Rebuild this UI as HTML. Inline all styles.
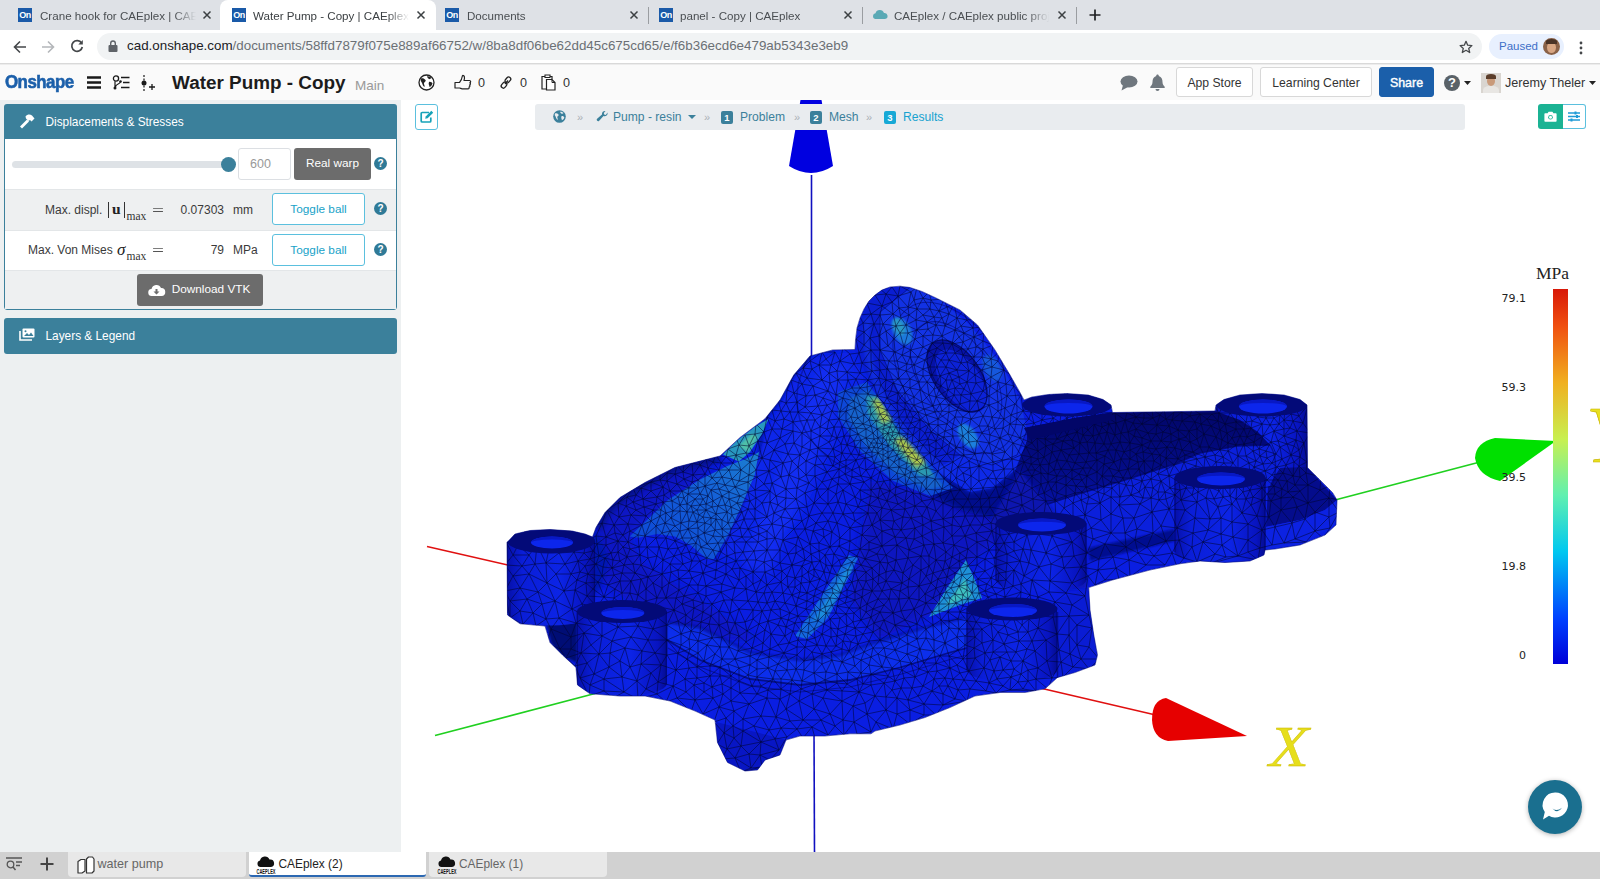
<!DOCTYPE html>
<html><head><meta charset="utf-8"><title>Water Pump - Copy | CAEplex</title>
<style>
*{box-sizing:border-box;margin:0;padding:0}
html,body{width:1600px;height:879px;overflow:hidden;background:#fff;font-family:"Liberation Sans",sans-serif;}
body{position:relative}
.abs,.abs2 *{position:absolute}
.abs{position:absolute}
svg{position:absolute;overflow:visible}
/* browser chrome */
#tabbar{left:0;top:0;width:1600px;height:30px;background:#dee1e6}
.fav{position:absolute;top:8px;width:14px;height:14px;background:#1a5aa8;color:#fff;font-size:9px;font-weight:bold;line-height:14px;text-align:center;letter-spacing:-0.6px;overflow:hidden}
.tt{position:absolute;top:0;height:30px;line-height:31px;font-size:11.6px;color:#4a4e52;white-space:nowrap;overflow:hidden;-webkit-mask-image:linear-gradient(to right,#000 calc(100% - 22px),transparent);mask-image:linear-gradient(to right,#000 calc(100% - 22px),transparent)}
.tx{position:absolute;top:9px;width:12px;height:12px}
.sep{position:absolute;top:7px;width:1px;height:17px;background:#9a9da1}
#acttab{left:220px;top:0;width:216px;height:30px;background:#fff;border-radius:8px 8px 0 0}
#urlrow{left:0;top:30px;width:1600px;height:34px;background:#fff;border-bottom:1px solid #d9d9d9}
#urlbox{left:97px;top:33px;width:1385px;height:27px;border-radius:14px;background:#f1f3f4}
#urltext{left:127px;top:33px;height:27px;line-height:26px;font-size:13.39px;color:#6b7075;white-space:nowrap}
#urltext b{font-weight:normal;color:#202124}
#paused{left:1489px;top:34px;width:75px;height:25px;border-radius:13px;background:#e8f0fe;color:#3d6fc8;font-size:11.500px;line-height:25px;padding-left:10px}
/* onshape header */
#oshead{left:0;top:64px;width:1600px;height:36px;background:#fafafa;border-top:1px solid #ececec}
.btn{position:absolute;top:67px;height:30px;border:1px solid #d8d8d8;border-radius:3px;background:#fff;font-size:12.2px;color:#333;line-height:30.500px;text-align:center;white-space:nowrap}
.cnt{position:absolute;top:64px;height:36px;line-height:39px;font-size:12.6px;color:#333}
/* left panel */
#left{left:0;top:100px;width:401px;height:752px;background:#edf0f1}
.phead{position:absolute;left:4px;width:393px;background:#3b809b;color:#fff;font-size:11.85px;border-radius:3px;padding-left:41.5px;white-space:nowrap}
#pbody{left:4px;top:137px;width:393px;height:173px;background:#fff;border:1px solid #3b809b;border-radius:0 0 3px 3px}
.row{position:absolute;left:5px;width:391px}
.lt{position:absolute;margin-top:1px;font-size:12px;color:#3a3a3a;white-space:nowrap;height:20px;line-height:20px}
.tog{position:absolute;left:272px;width:93px;height:32px;border:1px solid #5bc0de;border-radius:3px;background:#fff;color:#17a2c8;font-size:11.8px;line-height:30px;text-align:center}
.gbtn{position:absolute;background:#6c6c6c;color:#fff;border-radius:3px;font-size:11.8px;text-align:center;white-space:nowrap}
.q{position:absolute;left:374px;width:13px;height:13px;border-radius:50%;background:#2f7a97;color:#fff;font-size:10px;font-weight:bold;line-height:13px;text-align:center}
.math{font-family:"Liberation Serif",serif}
/* breadcrumb */
#bc{left:535px;top:104px;width:930px;height:26px;background:#e9ecef;border-radius:3px}
.bct{position:absolute;top:104px;height:26px;line-height:26px;font-size:12.1px;color:#3b809b;white-space:nowrap}
.bcs{position:absolute;top:104px;height:26px;line-height:26px;font-size:11px;color:#a9b0b6}
.bdg{position:absolute;top:111px;width:12px;height:13px;border-radius:2px;background:#3b809b;color:#fff;font-size:9.5px;font-weight:bold;line-height:13px;text-align:center}
/* bottom */
#bottom{left:0;top:852px;width:1600px;height:27px;background:#d1d1d1}
.btab{position:absolute;top:852px;height:25px;background:#e8e8e8;border-radius:0 0 4px 4px;font-size:12px;color:#666;line-height:25.500px;white-space:nowrap}
/* legend */
.lg{position:absolute;width:40px;text-align:right;left:1486px;font-family:"DejaVu Sans",sans-serif;font-size:10.5px;color:#222;height:14px;line-height:14px}
</style></head><body>
<!-- ===== browser tab strip ===== -->
<div id="tabbar" class="abs"></div>
<div id="acttab" class="abs"></div>
<div class="fav" style="left:18px">On</div><div class="tt" style="left:40px;width:156px">Crane hook for CAEplex | CAE</div>
<svg class="tx" style="left:201px" viewBox="0 0 12 12"><path d="M2.5 2.5L9.5 9.5M9.5 2.5L2.5 9.5" stroke="#3c4043" stroke-width="1.5"/></svg>
<div class="fav" style="left:232px">On</div><div class="tt" style="left:253px;width:156px;color:#3c4043">Water Pump - Copy | CAEplex</div>
<svg class="tx" style="left:415px" viewBox="0 0 12 12"><path d="M2.5 2.5L9.5 9.5M9.5 2.5L2.5 9.5" stroke="#3c4043" stroke-width="1.5"/></svg>
<div class="fav" style="left:445px">On</div><div class="tt" style="left:467px;width:150px">Documents</div>
<svg class="tx" style="left:628px" viewBox="0 0 12 12"><path d="M2.5 2.5L9.5 9.5M9.5 2.5L2.5 9.5" stroke="#3c4043" stroke-width="1.5"/></svg>
<div class="sep" style="left:648px"></div>
<div class="fav" style="left:659px">On</div><div class="tt" style="left:680px;width:150px">panel - Copy | CAEplex</div>
<svg class="tx" style="left:842px" viewBox="0 0 12 12"><path d="M2.5 2.5L9.5 9.5M9.5 2.5L2.5 9.5" stroke="#3c4043" stroke-width="1.5"/></svg>
<div class="sep" style="left:862px"></div>
<svg style="left:872px;top:9px;width:16px;height:12px" viewBox="0 0 16 12"><path d="M3 10a3 3 0 0 1 .5-5.8A4.5 4.5 0 0 1 12 4a3 3 0 0 1 1 6z" fill="#5aa9b5"/></svg>
<div class="tt" style="left:894px;width:155px">CAEplex / CAEplex public proj</div>
<svg class="tx" style="left:1056px" viewBox="0 0 12 12"><path d="M2.5 2.5L9.5 9.5M9.5 2.5L2.5 9.5" stroke="#3c4043" stroke-width="1.5"/></svg>
<div class="sep" style="left:1076px"></div>
<svg style="left:1089px;top:9px;width:12px;height:12px" viewBox="0 0 12 12"><path d="M6 0.5V11.5M0.5 6H11.5" stroke="#202124" stroke-width="1.7"/></svg>
<!-- ===== url row ===== -->
<div id="urlrow" class="abs"></div>
<div id="urlbox" class="abs"></div>
<svg style="left:13px;top:40px;width:14px;height:14px" viewBox="0 0 14 14"><path d="M13 7H2M7 1.5L1.5 7L7 12.5" fill="none" stroke="#44474a" stroke-width="1.6"/></svg>
<svg style="left:41px;top:40px;width:14px;height:14px" viewBox="0 0 14 14"><path d="M1 7H12M7 1.5L12.5 7L7 12.5" fill="none" stroke="#b4b7ba" stroke-width="1.6"/></svg>
<svg style="left:70px;top:39px;width:14px;height:14px" viewBox="0 0 14 14"><path d="M11.6 4.2A5.3 5.3 0 1 0 12.3 8" fill="none" stroke="#44474a" stroke-width="1.7"/><path d="M12.8 1v4.5H8.3z" fill="#44474a"/></svg>
<svg style="left:108px;top:40px;width:10px;height:12px" viewBox="0 0 10 12"><rect x="0.5" y="5" width="9" height="7" rx="1" fill="#5f6368"/><path d="M2.7 5V3.3a2.3 2.3 0 0 1 4.6 0V5" fill="none" stroke="#5f6368" stroke-width="1.4"/></svg>
<div id="urltext" class="abs"><b>cad.onshape.com</b>/documents/58ffd7879f075e889af66752/w/8ba8df06be62dd45c675cd65/e/f6b36ecd6e479ab5343e3eb9</div>
<svg style="left:1459px;top:40px;width:14px;height:14px" viewBox="0 0 14 14"><path d="M7 1.3l1.7 3.9 4.2.4-3.2 2.8 1 4.1L7 10.3 3.3 12.5l1-4.1L1.100 5.600l4.200-.4z" fill="none" stroke="#44474a" stroke-width="1.3" stroke-linejoin="round"/></svg>
<div id="paused" class="abs">Paused</div>
<div class="abs" style="left:1543px;top:38px;width:17px;height:17px;border-radius:50%;background:#8a6248;overflow:hidden"><div class="abs" style="left:4px;top:4px;width:9px;height:11px;border-radius:50%;background:#d8a683"></div><div class="abs" style="left:3px;top:1px;width:11px;height:5px;border-radius:50% 50% 0 0;background:#4a3326"></div></div>
<svg style="left:1579px;top:41px;width:4px;height:14px" viewBox="0 0 4 14"><circle cx="2" cy="2" r="1.4" fill="#44474a"/><circle cx="2" cy="7" r="1.4" fill="#44474a"/><circle cx="2" cy="12" r="1.4" fill="#44474a"/></svg>
<svg id="view" style="left:0;top:0;width:1600px;height:879px" viewBox="0 0 1600 879">
<defs><clipPath id="cv"><rect x="401" y="100" width="1199" height="752"/></clipPath>
<clipPath id="sil"><path d="M875 295L882 290L890 287L900 286.2L910 287.5L922 291.5L935 297.5L960 310L977.5 325L995 350L1010 375L1020 392.5L1024 400L1032 397L1048 394.5L1067 393.5L1088 395L1103 399.5L1111 405L1112.5 412.5L1215 411L1216 405L1224 399.5L1240 395L1262 393.5L1284 395L1300 399.5L1307 405L1307.5 467.5L1320 480L1332.5 492.5L1337 500L1336 525L1325 535L1300 545L1275 549L1265 550L1264 555L1250 561L1225 562.5L1200 561L1180 563.75L1150 570L1112.5 580L1088.75 587.5L1090 610L1093.75 635L1097.5 655L1095 665L1075 672.5L1057.5 677.5L1045 688.75L1025 692.5L1000 692.5L975 696L950 707.5L925 717.5L900 725L875 731L871 733.75L850 733.75L825 736L800 736L786 740L780 755L765 760L757.5 770L745 771L727.5 762.5L717.5 742.5L715 720L695 711L670 701L645 696L620 696L590 693.75L577.5 685L576 667.5L562.5 655L550 642.5L545 626L520 623.75L507.5 615L507 542.5L515 534L530 530.5L550 529.5L572 531L585 534L592.5 537L596 527.5L605 512.5L620 497.5L645 482.5L675 467.5L720 456L740 437.5L765 418.75L780 400L793.75 375L810 356L832.5 350L855 349.5L855.5 340L857 328L860 318L864 309L869 301Z"/></clipPath>
<linearGradient id="cb" x1="0" y1="1" x2="0" y2="0"><stop offset="0" stop-color="#0000d8"/><stop offset=".12" stop-color="#0040ff"/><stop offset=".3" stop-color="#00c8f0"/><stop offset=".45" stop-color="#60f0b0"/><stop offset=".6" stop-color="#c8f050"/><stop offset=".75" stop-color="#f0b020"/><stop offset=".9" stop-color="#f05010"/><stop offset="1" stop-color="#d81808"/></linearGradient>
<radialGradient id="neck" cx="0.55" cy="0.45" r="0.6"><stop offset="0" stop-color="#d8e040"/><stop offset=".35" stop-color="#50d8b0"/><stop offset=".7" stop-color="#20a8d8"/><stop offset="1" stop-color="#1060e0"/></radialGradient>
<filter id="b2"><feGaussianBlur stdDeviation="2"/></filter><filter id="b4"><feGaussianBlur stdDeviation="4"/></filter><filter id="b1"><feGaussianBlur stdDeviation="1"/></filter>
<linearGradient id="plate" x1="0" y1="0" x2="0" y2="1"><stop offset="0" stop-color="#020668"/><stop offset=".6" stop-color="#030c88"/><stop offset="1" stop-color="#0612a8"/></linearGradient><linearGradient id="bs" x1="0" y1="0" x2="1" y2="0"><stop offset="0" stop-color="#0610a8"/><stop offset=".18" stop-color="#0a1ed8"/><stop offset=".6" stop-color="#0c24e6"/><stop offset=".9" stop-color="#0814c0"/><stop offset="1" stop-color="#040c90"/></linearGradient><linearGradient id="web" x1="0" y1="1" x2="1" y2="0"><stop offset="0" stop-color="#0c44d8"/><stop offset=".6" stop-color="#1460d8"/><stop offset="1" stop-color="#1c80d0"/></linearGradient>
</defs>
<g clip-path="url(#cv)">
<path d="M811.5 175L811.5 360" stroke="#1010c0" stroke-width="1.6"/>
<path d="M814 730L814.5 852" stroke="#1010c0" stroke-width="1.6"/>
<path d="M800.5 100L821.5 100L833 166Q811 180 789 166Z" fill="#0000e0"/>
<path d="M427 546.5L510 565.5" stroke="#e01010" stroke-width="1.5"/>
<path d="M1040 688L1160 716" stroke="#e01010" stroke-width="1.5"/>
<path d="M435 735.5L595 693.5" stroke="#20d020" stroke-width="1.8"/>
<path d="M1335 500L1480 462" stroke="#20d020" stroke-width="1.8"/>
<path d="M1247 736L1166 698Q1152 700 1152 720Q1153 738 1168 741Z" fill="#e60000"/>
<path d="M1556 441L1495 438Q1476 442 1475 458Q1478 476 1500 481Z" fill="#00e000"/>
<text x="1269" y="766" font-family="Liberation Serif,serif" font-style="italic" font-size="58" fill="#e6de1c" stroke="#c8b400" stroke-width=".3" textLength="40" lengthAdjust="spacingAndGlyphs">X</text>
<text x="1586" y="462" font-family="Liberation Serif,serif" font-style="italic" font-size="80" fill="#e8e020" stroke="#c8b400" stroke-width=".6">Y</text>
<g clip-path="url(#sil)">
<path d="M875 295L882 290L890 287L900 286.2L910 287.5L922 291.5L935 297.5L960 310L977.5 325L995 350L1010 375L1020 392.5L1024 400L1032 397L1048 394.5L1067 393.5L1088 395L1103 399.5L1111 405L1112.5 412.5L1215 411L1216 405L1224 399.5L1240 395L1262 393.5L1284 395L1300 399.5L1307 405L1307.5 467.5L1320 480L1332.5 492.5L1337 500L1336 525L1325 535L1300 545L1275 549L1265 550L1264 555L1250 561L1225 562.5L1200 561L1180 563.75L1150 570L1112.5 580L1088.75 587.5L1090 610L1093.75 635L1097.5 655L1095 665L1075 672.5L1057.5 677.5L1045 688.75L1025 692.5L1000 692.5L975 696L950 707.5L925 717.5L900 725L875 731L871 733.75L850 733.75L825 736L800 736L786 740L780 755L765 760L757.5 770L745 771L727.5 762.5L717.5 742.5L715 720L695 711L670 701L645 696L620 696L590 693.75L577.5 685L576 667.5L562.5 655L550 642.5L545 626L520 623.75L507.5 615L507 542.5L515 534L530 530.5L550 529.5L572 531L585 534L592.5 537L596 527.5L605 512.5L620 497.5L645 482.5L675 467.5L720 456L740 437.5L765 418.75L780 400L793.75 375L810 356L832.5 350L855 349.5L855.5 340L857 328L860 318L864 309L869 301Z" fill="#0a1ee2"/>
<path d="M596 528L620 497L645 482L675 467L720 456L700 480L668 500L630 536L640 560L700 600L760 640L700 640L640 610L600 580Z" fill="#0818c4" filter="url(#b4)"/>
<path d="M770 425L795 378L812 358L850 352L865 380L845 420L800 520L745 560L720 555L748 480Z" fill="#0c26ea" filter="url(#b4)"/>
<path d="M870 480L950 498L1000 512L1020 520L975 560L930 615L880 640L850 600L860 540Z" fill="#0816c0" filter="url(#b4)"/>
<path d="M822 362L850 366L800 500L770 575L742 566L775 480Z" fill="#1232f4" filter="url(#b4)" opacity=".75"/>
<path d="M810 356L793 375L780 400L765 419L759 452L741 507L714 559" fill="none" stroke="#030a78" stroke-width="2.500" opacity=".55" filter="url(#b1)"/>
<path d="M812 354Q790 385 800 420Q815 455 850 470" fill="none" stroke="#030a78" stroke-width="1.500" opacity=".45"/>
<path d="M596 528L605 512L620 497L645 482L675 467L720 456" fill="none" stroke="#020866" stroke-width="12" opacity=".6" filter="url(#b2)"/>
<path d="M935 470L970 492L992 488L1015 470L1027 440L1040 470L1030 510L1000 520L960 510L930 495Z" fill="#040e8c" filter="url(#b2)"/>
<path d="M1216.5 405L1307.5 405L1307.5 470A45.5 11.5 0 0 1 1216.5 470Z" fill="url(#bs)"/>
<path d="M1217.0 405V470M1307.0 405V470" stroke="#02086c" stroke-width="1.200" opacity=".7"/>
<path d="M1024 428L1075 418L1112 412.5L1215 411L1240 420L1258 432L1270 445L1237 446L1200 453L1175 464L1125 480L1075 495L1030 510L1012 480L1027 440Z" fill="url(#plate)" />
<path d="M1268 487L1280 468L1307 467L1337 500L1325 510L1300 520L1266 527Z" fill="#040c8c" />
<path d="M1337 500L1336 525L1300 545L1265 550L1265 527L1300 520L1325 510Z" fill="#0c22e2" />
<path d="M1030 510L1075 495L1125 480L1175 464L1200 453L1237 446L1270 445L1276 468L1270 486L1174 500L1174 530L1100 546L1088 550L1062 545Z" fill="#0b20dc" />
<path d="M1030 510L1075 495L1125 480L1175 464L1200 453L1237 446L1270 445" fill="none" stroke="#02086c" stroke-width="1.500" opacity=".8"/>
<path d="M1270 445Q1280 462 1272 486" fill="none" stroke="#02086c" stroke-width="1.500" opacity=".6"/>
<path d="M1088 548L1175 529L1175 541L1090 561Z" fill="#040e90" filter="url(#b1)"/>
<path d="M1020 470L1062 522L1085 545L1087 588L1060 590L1000 560L990 520Z" fill="#0714b0" filter="url(#b2)"/>
<path d="M629.6 536.5L668 500L700 479.6L727.4 466L745.6 459L759 452L754.7 475L741 507L727.4 536.5L713.8 559L707 559L691 545.6L675 536.5L657 534L638.7 537.7Z" fill="url(#web)" />
<path d="M723 454.6L736.5 441L754.7 427L768.4 419L762 434L750 452L738.8 461.4Z" fill="#2898c0" />
<path d="M738 446L752 434L758 436L748 452Z" fill="#50c0a8" filter="url(#b1)"/>
<path d="M537 579L561 577L563 588L570 600L577 606L577 663L561 655L551 643L547 626L541 606L538 588Z" fill="#030a74" filter="url(#b1)"/>
<path d="M561 577L592 540L596 528L610 560L600 590L577 606L570 600L563 588Z" fill="#0614b0" filter="url(#b2)"/>
<path d="M795 636L849 555L858 558L828 618L807 639Z" fill="#1468e0" />
<path d="M812 622L848 566L853 568L826 616Z" fill="#1e8cdc" filter="url(#b1)"/>
<path d="M929 617L947 588L966 560L975 580L982 598L960 605Z" fill="#1e90d8" />
<path d="M945 606L965 578L972 596Z" fill="#3cc0c0" filter="url(#b1)"/>
<path d="M838 392L867 382L880 400L910 440L932 466L953 488L930 496L893 481L860 451L838 416Z" fill="#0e48d8" />
<path d="M850 398L868 390L880 408L908 446L930 470L944 486L928 490L896 474L866 446L848 418Z" fill="#1464cc" filter="url(#b1)"/>
<path d="M866 396L876 396L904 440L926 464L934 476L920 476L890 446L868 414Z" fill="#2c98b0" filter="url(#b1)"/>
<path d="M872 400L880 398L892 420L882 424Z" fill="#a8c850" filter="url(#b2)"/>
<path d="M894 440L903 437L926 462L916 468Z" fill="#b0c848" filter="url(#b2)"/>
<path d="M882 288L910 287L880 313L880 350L897 390L930 430L960 455L992 465L1017 455L1027 430L1027 440L1015 470L992 488L970 492L935 470L910 440L880 400L860 362L857 330L866 305Z" fill="#0a1ed2" />
<path d="M935 470L970 492L992 488L1015 470L1027 440L1017 455L992 465L960 455Z" fill="#0e2ae8" />
<path d="M910 287.5L940 300L970 325L1000 362L1020 400L1027 430L1017 455L992 465L960 455L930 430L897 390L880 350L880 312Z" fill="#1232e4" />
<path d="M910 287.500L880 312L880 350L897 390L930 430L960 455L992 465L1017 455L1027 430" fill="none" stroke="#04108c" stroke-width="1" opacity=".8"/>
<path d="M868 318Q862 350 880 392Q905 440 950 476" fill="none" stroke="#1a44f0" stroke-width="5" opacity=".55" filter="url(#b2)"/>
<ellipse cx="955" cy="378" rx="50" ry="84" fill="none" stroke="#040e8c" stroke-width="1" opacity=".7" transform="rotate(-33 955 378)"/>
<ellipse cx="956" cy="377" rx="36" ry="62" fill="#1436e8" opacity=".6" transform="rotate(-34 956 377)"/>
<ellipse cx="956" cy="377" rx="36" ry="62" fill="none" stroke="#040e8c" stroke-width="1" opacity=".7" transform="rotate(-34 956 377)"/>
<ellipse cx="902" cy="331" rx="9" ry="15" fill="#1c78dc" filter="url(#b1)" transform="rotate(-28 902 331)"/>
<ellipse cx="899" cy="327" rx="5" ry="9" fill="#2c98c4" filter="url(#b1)" transform="rotate(-28 899 327)"/>
<ellipse cx="992" cy="368" rx="8" ry="14" fill="#1658dc" filter="url(#b1)" transform="rotate(-28 992 368)"/>
<ellipse cx="968" cy="436" rx="8" ry="14" fill="#1c80dc" filter="url(#b1)" transform="rotate(-35 968 436)"/>
<ellipse cx="957" cy="376" rx="23" ry="41" fill="#0612a8"  transform="rotate(-35 957 376)"/>
<ellipse cx="961" cy="381" rx="19" ry="36" fill="#0c22d8"  transform="rotate(-35 961 381)"/>
<ellipse cx="957" cy="376" rx="23" ry="41" fill="none" stroke="#030a70" stroke-width="1.200" transform="rotate(-35 957 376)"/>
<path d="M667 622L700 627.5L750 652.5L800 660L840 655L875 642.5L925 627.5L965 617.5L1000 645L975 646L950 652.5L900 667.5L850 680L800 685L750 679L700 660L667 640Z" fill="#1030ee" filter="url(#b1)" opacity=".85"/>
<path d="M667 622L700 627.500L750 652.500L800 660L840 655L875 642.500L925 627.500L965 617.500" fill="none" stroke="#030a74" stroke-width="2" opacity=".6" filter="url(#b1)"/>
<path d="M667 640L700 660L750 679L800 685L850 680L900 667.500L950 652.500L975 646L1000 645" fill="none" stroke="#030a74" stroke-width="1.800" opacity=".8"/>
<path d="M668 648L700 667L750 686L800 692L850 687L900 674.500L950 659.500L975 653L1005 651" fill="none" stroke="#030a74" stroke-width="1.200" opacity=".6"/>
<path d="M1174.5 477.5L1265.5 477.5L1265.5 552A45.5 11.5 0 0 1 1174.5 552Z" fill="url(#bs)"/>
<path d="M1175.0 477.5V552M1265.0 477.5V552" stroke="#02086c" stroke-width="1.200" opacity=".7"/>
<path d="M995.5 523.5L1086.5 523.5L1086.5 580A45.5 11.5 0 0 1 995.5 580Z" fill="url(#bs)"/>
<path d="M996.0 523.5V580M1086.0 523.5V580" stroke="#02086c" stroke-width="1.200" opacity=".7"/>
<path d="M966.5 609L1057.5 609L1057.5 670A45.5 11.5 0 0 1 966.5 670Z" fill="url(#bs)"/>
<path d="M967.0 609V670M1057.0 609V670" stroke="#02086c" stroke-width="1.200" opacity=".7"/>
<path d="M507 541L595 541L595 613A44 12.5 0 0 1 507 613Z" fill="url(#bs)"/>
<path d="M507.5 541V613M594.5 541V613" stroke="#02086c" stroke-width="1.200" opacity=".7"/>
<path d="M576.8 611.5L666.8 611.5L666.8 684A45 11.5 0 0 1 576.8 684Z" fill="url(#bs)"/>
<path d="M577.3 611.5V684M666.3 611.5V684" stroke="#02086c" stroke-width="1.200" opacity=".7"/>
<path d="M1057 600L1088 588L1097 655L1095 665L1057 678Z" fill="#0a1cd4" />
<path d="M1057.500 612L1057.500 678" stroke="#040c80" stroke-width="1.500" opacity=".8"/>
<path d="M716 722L786 740L780 755L757 770L745 771L727 762L717 742Z" fill="#0816c4" />
<path d="M1258 417l8 1M651 482l-18 6M1054 405l17 2M838 380l-8 3M1293 421l-3 7M893 450l4 5M825 607l5 -9M711 490l-3 6M739 609l6 13M1025 484l-5 -10M889 599l-5 6M904 347l4 -14M574 552l12 -11M949 373l3 7M839 560l2 6M925 594l8 4M638 595l3 -16M746 542l6 -5M1262 530l13 -3M1194 488l-6 -6M963 473l-5 -6M895 352l2 9M739 681l1 12M896 560l1 -15M960 490l-9 1M916 374l3 8M1032 443l5 -5M1233 463l5 -7M1236 429l-9 4M697 522l1 6M890 480l7 -7M894 570l-6 -7M916 374l-2 -9M695 700l-9 -8M1222 545l11 -8M1072 605l-6 -12M713 550l-12 -3M1047 661l-1 -21M1089 453l-10 1M715 654l-5 12M886 555l11 -10M698 593l8 -7M967 585l-8 1M921 570l-12 9M999 497l-10 1M1038 597l-6 -17M868 394l-8 -6M935 457l-3 8M643 499l13 5M906 325l-5 -7M868 380l6 5M1329 498l-14 14M907 364l-8 5M763 643l2 -13M993 345l-2 14M510 601l17 -2M1151 441l-3 -8M728 523l-6 6M728 664l7 -5M940 496l-5 -6M755 509l0 10M705 474l3 -6M1215 455l1 7M520 588l-15 3M1291 455l8 -5M888 433l5 -1M924 704l-16 -4M669 583l-7 -9M689 488l-5 -9M1300 491l-5 -6M876 421l9 4M878 407l6 -4M852 477l-0 -7M757 660l12 -3M1083 435l-1 -9M636 495l-3 7M813 531l3 -8M973 629l2 8M1197 429l4 -5M747 631l6 -12M988 597l1 7M722 496l7 3M965 636l0 9M719 707l15 4M933 573l-4 -7M846 421l0 -10M719 625l-0 -14M867 714l-14 -8M790 412l-9 -1M955 594l-9 -2M1267 458l-4 6M1036 691l-13 -2M1104 444l-8 9M932 691l-9 -5M602 576l12 -1M1300 491l-7 6M731 688l-8 6M810 450l-10 5M972 593l-5 -3M1075 493l6 7M810 361l12 -9M741 772l10 -4M892 643l-8 5M656 526l6 7M879 336l-5 -12M657 497l6 5M667 473l8 1M985 653l-1 15M915 483l-6 -5M1182 450l3 5M866 470l-1 -12M1254 467l3 7M937 367l-7 -0M644 507l12 -3M1010 424l1 -9M840 412l3 -14M605 558l-6 -2M586 541l-2 12M937 367l9 -0M987 540l5 -9M939 604l-13 -1M731 676l8 -8M905 409l5 2M788 587l4 8M917 460l7 -3M612 568l-7 -10M1185 510l-4 -10M959 586l8 4M913 435l-6 4M1018 632l1 9M1172 420l-6 -1M943 705l24 -4M1136 417l8 -6M775 739l6 -11M866 581l7 -2M898 379l8 -8M909 550l-3 -12M1254 442l-1 9M911 663l8 6M851 454l5 6M698 488l0 -8M635 573l6 6M905 452l3 4M922 402l2 7M1131 495l-5 -10M861 440l8 8M905 393l-5 5M950 668l10 5M691 631l7 10M546 563l4 -19M720 667l0 9M734 542l-4 -7M1098 492l-1 -8M892 436l7 -3M826 565l6 1M593 589l11 8M989 443l1 -8M750 501l-2 -9M1101 412l0 9M814 673l-10 -3M822 513l6 8M1102 427l7 -3M954 499l-1 8M764 432l-8 -8M842 453l-2 9M1095 585l3 -15M628 524l-14 1M1021 592l-8 -6M871 617l9 -5M732 600l-11 -8M885 391l6 -0M722 759l13 -1M882 667l10 1M918 357l-4 8M936 511l7 -8M1052 452l-8 5M798 537l12 7M719 489l6 -4M999 573l7 7M698 641l14 -3M929 566l-3 10M940 594l4 4M911 663l-9 7M818 448l-1 8M1156 449l-5 -8M1142 438l6 -5M1205 475l-1 -7M692 620l-7 5M889 599l-7 -8M883 324l-9 -0M963 436l5 -4M869 542l-9 7M722 496l-9 5M938 435l-7 -3M658 682l18 -12M779 750l-9 10M1033 499l5 -4M593 589l5 -7M1075 493l7 -1M642 525l-12 6M837 438l-5 -2M842 649l7 2M559 553l6 11M804 670l-8 -1M933 406l-11 -4M855 628l8 6M1045 431l0 8M1044 493l-3 -9M787 737l-12 2M575 590l-11 1M1064 568l-2 -11M620 581l11 0M819 543l5 -6M1197 502l1 -10M1067 418l-6 -5M899 451l6 1M1200 414l12 -0M735 588l-9 -14M880 350l-10 -12M831 652l11 10M896 326l-10 5M935 479l9 0M580 678l7 -15M1185 455l8 -3M666 598l-9 -0M1036 691l-26 -1M1250 490l12 -2M958 467l-2 11M793 422l0 9M686 615l6 5M824 572l2 -7M917 447l-5 -4M642 651l6 -11M1287 444l4 11M1238 556l20 4M961 425l-6 -8M1261 396l2 14M855 600l-0 -8M956 448l-6 -5M587 596l10 11M1179 540l5 18M837 683l5 8M722 584l13 4M755 509l7 -6M979 466l-9 2M1046 553l6 -17M814 673l11 7M1228 443l4 -5M865 458l1 -5M814 673l-12 8M877 396l8 -5M1236 499l-6 -3M1116 450l4 -8M1144 461l-8 -7M963 507l-10 10M1031 457l-10 -2M1032 641l-4 -9M959 561l-7 -4M896 560l-8 3M674 610l-17 7M787 670l9 -1M757 677l-5 9M849 608l-12 -2M951 472l-1 12M847 558l5 4M1027 649l-11 3M821 599l-1 11M625 648l-5 13M836 613l-6 6M791 380l-4 10M890 480l0 11M1211 426l-7 8M898 411l-6 6M963 595l-4 -9M690 649l-12 4M1018 514l4 10M599 654l11 -1M1225 424l5 -11M748 509l7 0M886 555l2 8M992 587l-5 -3M1030 432l-10 6M859 455l-4 -8M633 502l10 -3M911 663l-11 -2M933 335l-5 -6M586 616l-10 7M572 609l3 -19M760 755l10 5M1052 452l-6 -6M872 591l-5 13M711 490l2 11M846 614l1 12M716 455l10 2M1032 580l18 1M653 570l10 -10M735 623l-8 -1M882 508l-5 5M843 720l10 -14M814 576l0 -7M806 396l7 -10M812 369l10 11M1101 520l10 -6M901 611l13 -2M1012 459l-10 1M940 496l-7 3M785 636l-7 -11M826 613l-1 -6M775 421l-3 -11M786 489l-10 7M1265 471l-11 -4M880 414l-9 0M1040 465l-2 -6M1032 476l9 -3M776 467l7 -4M894 462l5 5M1192 495l2 -7M906 469l-7 -2M949 628l0 -7M859 692l4 -8M611 553l-5 -8M940 496l2 -7M790 721l-9 7M718 506l-6 1M827 472l-5 10M1200 414l7 5M1284 429l6 -1M884 605l-4 7M892 302l6 -6M1072 440l5 -8M1055 500l2 -7M901 688l3 -10M967 580l7 -7M907 463l1 -7M871 617l-10 3M1230 413l8 -7M590 559l-5 7M1042 420l7 4M950 443l3 -7M1152 470l-7 4M771 610l-3 11M739 609l9 -8M998 581l8 -1M1193 533l-1 14M936 397l4 7M952 429l1 7M940 461l-8 4M1021 455l5 -8M620 581l-5 8M819 543l-0 8M931 300l-1 9M950 443l-6 -6M1248 412l-10 -6M941 620l8 8M995 611l7 6M889 468l-7 -2M936 397l5 -11M1291 455l3 7M826 613l-6 -3M943 705l-0 -11M620 561l-2 -9M840 462l6 4M837 438l7 -2M506 542l12 3M743 731l-9 7M1007 554l-3 -11M917 309l-1 11M920 390l2 12M1114 462l-10 2M513 576l9 -10M590 559l-12 2M1072 583l-8 -15M1085 419l-8 2M895 625l-2 -12M883 438l-0 -4M843 348l-3 13M884 620l9 -7M741 470l9 -8M844 584l8 -2M657 497l-1 7M920 390l-10 -2M1107 417l8 -4M903 517l2 -8M1072 542l-20 -6M890 480l-1 -12M749 754l-14 4M864 652l9 -4M1116 568l-18 2M931 521l1 10M1055 602l-15 14M957 637l-8 -9M692 578l-13 1M931 300l-2 -8M924 663l10 -12M749 704l-9 -11M901 530l-6 7M684 479l-7 5M695 499l-4 7M783 526l0 14M682 491l6 3M997 679l-8 4M965 636l8 -7M764 562l9 7M824 572l-4 7M1075 463l11 -1M882 306l-15 -3M1321 477l-13 8M814 569l6 10M854 441l-4 -5M1128 469l-5 9M1024 576l15 -9M1166 541l13 -1M1000 657l11 4M841 566l-4 9M735 659l4 9M1271 501l-4 -7M843 514l-10 -1M546 563l-11 1M1282 489l-7 5M720 667l8 -3M1165 492l-6 8M999 497l5 -10M977 557l-11 1M1281 498l-6 -4M591 645l8 9M747 560l9 0M770 491l-15 -1M703 573l-3 -12M1142 481l3 -7M871 617l-5 -5M928 439l-5 6M806 609l4 8M700 494l8 2M963 417l-6 -7M879 336l4 -12M961 395l3 -6M683 472l-8 2M872 452l2 -5M997 679l6 7M880 472l-9 6M713 462l6 8M926 638l8 2M897 403l1 8M1088 576l7 9M689 585l-10 -6M887 398l11 -5M920 390l9 5M950 668l3 11M769 730l-15 -4M989 443l-12 -2M1304 443l-4 14M1320 490l-12 -5M967 320l-10 -2M667 655l-12 -2M874 623l6 5M931 521l12 -2M842 649l1 -8M728 523l4 -8M861 565l5 7M849 608l-4 -5M1193 533l15 -3M860 388l7 -1M1031 550l8 17M848 672l-6 -10M674 556l-6 -7M1272 545l3 -18M706 566l-3 7M1284 420l6 8M1280 415l5 -5M1249 463l7 -2M872 591l1 -12M692 578l6 7M889 634l6 -9M909 315l-8 3M896 427l-3 5M988 478l5 -7M1087 476l4 -8M781 679l-0 10M941 620l-2 -9M977 542l12 8M798 616l-3 7M1192 409l8 5M832 411l7 8M743 552l-7 9M1125 420l8 3M1283 473l-11 2M1075 493l1 -7M920 649l-13 5M1085 596l-13 -13M874 385l5 -7M883 461l-1 5M1050 581l-11 -14M729 647l-7 12M930 453l-7 -8M678 570l5 -6M907 364l-5 -9M846 421l-7 -2M513 555l-8 10M588 574l-2 9M795 623l-9 4M660 516l-4 10M862 535l-2 14M783 540l-3 10M871 617l-4 10M718 506l-5 -5M991 377l-6 4M937 348l-8 3M991 578l8 -5M778 645l-8 4M927 322l-4 -7M949 405l8 5M1329 517l-0 -19M774 513l11 -4M1034 511l-1 -12M732 479l-10 -2M953 462l-9 5M589 696l1 -11M902 583l-2 8M1199 481l-1 11M707 645l5 -7M1211 468l6 1M788 660l8 9M585 566l3 8M949 628l-7 6M1104 444l3 -12M863 424l-5 -6M956 603l4 9M934 544l-5 12M963 342l1 -9M798 616l8 -7M860 373l-13 -1M750 665l-15 -6M869 665l13 2M734 542l12 0M749 754l12 -12M846 614l-9 -8M768 621l-6 -10M1129 560l9 -7M877 443l-3 -4M599 556l-6 -5M721 463l8 7M812 562l-7 -2M877 513l-8 -8M1278 441l6 -5M993 640l0 12M999 352l-8 7M972 593l1 -11M633 502l11 5M917 471l-2 6M764 593l3 -8M998 382l-8 4M927 477l-5 6M915 528l-1 11M707 558l-6 -11M1087 476l-1 11M790 412l8 0M899 433l9 1M949 314l-7 4M1158 492l3 -11M1031 457l-0 7M1087 476l-5 4M689 571l3 -10M696 554l-0 -11M1203 542l-6 20M695 700l-1 -15M1151 479l-6 -5M1223 486l-7 -3M1165 565l-11 -9M624 692l13 -11M866 429l-10 -1M849 551l-10 -5M1308 503l12 -13M926 576l-7 10M959 629l-10 -8M578 561l6 -8M983 349l-7 -2M878 654l-5 -6M1018 682l-7 -5M1295 485l-8 -4M706 510l-6 -5M1053 418l-4 -8M1216 483l3 8M602 636l-9 -10M1064 508l-8 12M706 586l0 10M1010 690l1 -13M754 454l-5 -8M900 639l-11 -5M866 572l6 -4M815 476l12 -4M1007 554l-13 4M1214 476l-5 11M841 566l11 -4M969 607l7 -1M944 479l-2 10M936 511l-5 10M786 403l-8 -3M916 320l7 -5M900 286l-2 10M1095 585l10 -5M793 431l-11 -2M719 625l-7 13M695 499l-8 5M822 352l-3 13M916 374l-10 -3M903 517l8 1M945 585l6 3M853 706l12 -3M967 382l-8 -5M785 603l11 3M1218 507l-12 -9M1169 476l10 6M1025 484l-9 -3M614 598l1 -9M850 429l3 -6M1161 465l6 4M829 442l-11 6M646 516l-4 9M908 448l-1 -9M641 664l-11 3M897 698l0 16M907 417l-8 0M1230 496l-0 -8M731 701l18 3M869 420l2 6M897 455l2 4M829 373l8 -2M773 569l9 2M731 701l-0 -13M903 573l6 6M763 643l8 -9M711 518l-5 -8M663 487l1 8M770 491l0 11M891 510l7 -6M872 452l-0 5M965 516l-4 11M1046 501l10 19M1017 419l-6 -4M713 698l-18 2M697 522l2 -7M877 429l6 5M837 674l-12 6M1004 370l-5 -18M882 306l4 -12M864 332l-9 -3M978 579l-5 3M1075 463l-6 -8M983 416l-12 3M1296 409l-9 -12M840 361l14 3M945 326l-9 -1M560 649l11 -0M1072 479l0 -9M866 429l-8 5M1102 476l-5 -4M1286 465l-4 -6M1066 476l6 3M918 696l6 8M700 465l6 -6M653 570l9 4M1157 425l9 -6M739 445l-3 -7M1179 439l-1 -9M604 597l-6 -15M969 412l1 -11M671 572l8 7M867 714l-2 -11M1209 447l-9 -0M781 582l2 11M770 491l2 -8M1278 441l-7 1M949 656l8 9M1210 519l-2 11M950 598l-4 -6M1197 439l-0 -10M930 453l2 12M952 525l9 2M631 515l5 -5M843 490l12 7M890 491l-3 10M657 497l7 -2M902 355l-5 6M1091 404l-14 6M867 714l19 -4M988 478l8 1M878 407l-7 7M722 759l5 -10M816 589l7 3M974 337l7 -10M1116 423l-1 -10M1091 528l20 5M722 529l1 8M1200 447l4 -13M934 355l-5 -4M949 604l-10 7M1027 535l-4 14M781 679l-8 -0M630 667l-10 -6M739 609l14 1M930 309l9 2M1069 616l20 -1M1182 450l8 -8M853 513l2 8M1021 495l12 4M783 540l11 -11M814 576l6 3M794 443l6 12M903 446l-2 -6M1218 507l3 11M955 330l-3 14M947 454l-5 -6M942 336l10 8M1041 473l-6 -3M689 488l-12 -4M1179 439l11 3M951 472l-7 7M796 373l7 -5M907 463l-8 4M1009 534l2 -15M869 641l-11 3M642 525l-11 -10M949 628l10 1M1104 444l4 6M1042 412l0 -12M998 411l-9 -6M588 574l10 8M788 620l-2 7M832 479l7 -10M1157 425l-4 -7M602 636l0 -16M971 476l-8 -3M700 633l12 5M893 729l4 -15M1262 424l-4 -7M732 479l-3 -9M938 425l7 6M893 383l5 10M969 442l-1 -10M1082 426l-5 6M878 438l-4 1M880 472l10 8M866 470l-5 6M970 525l5 -9M1038 628l2 -12M905 501l-10 -6M915 427l5 2M890 491l5 4M1083 435l10 1M682 604l11 -4M940 496l11 -5M982 604l6 -7M837 438l4 6M735 758l16 10M750 665l7 -5M965 482l-2 -9M845 603l10 -3M1014 542l0 9M813 531l10 -2M797 402l-3 -9M758 602l-2 -10M706 504l6 3M938 425l0 -6M1158 474l11 2M732 600l16 1M950 668l7 -3M648 558l-1 -11M847 597l8 3M1223 497l-5 10M599 556l7 -11M804 661l10 -2M894 521l-3 -11M974 357l2 -10M1028 670l-7 4M1179 439l7 -2M943 519l10 -2M706 586l-8 -1M894 339l10 8M1263 410l10 -15M982 370l-8 -5M1116 568l-11 12M974 337l2 10M866 470l9 -2M778 664l-10 4M775 601l-3 -9M968 549l-2 9M941 620l1 14M1057 460l-8 4M622 677l-2 -16M796 553l-4 12M1059 650l-13 -10M967 382l4 12M995 429l-3 -12M657 497l6 -10M935 490l0 -11M1151 479l-6 8M1075 463l4 -9M843 348l7 6M1064 568l-14 13M921 616l5 -13M1254 442l-7 -5M924 715l-14 -5M954 582l5 4M922 501l-7 5M811 440l-0 -9M688 529l-7 -6M842 701l-15 -11M832 479l-10 3M786 709l-10 8M843 398l-7 -3M1102 476l9 6M742 512l-6 10M914 405l8 -3M847 577l5 5M971 476l8 5M585 566l-5 6M1274 431l5 -7M1226 557l-4 -12M964 680l6 9M888 458l-5 -3M537 545l9 18M736 455l-10 2M969 371l-2 11M1299 416l-8 -2M933 625l9 9M712 604l-9 8M1112 488l-1 9M1087 476l-4 -8M840 412l-8 -1M643 499l14 -2M698 488l-6 -6M1036 679l2 -11M678 497l-8 -6M877 443l1 5M1128 432l6 4M803 720l9 7M883 438l-5 -0M670 531l-8 2M646 689l12 -7M807 640l-2 7M1158 474l9 -5M860 405l4 10M1210 519l-13 -17M1040 465l1 8M797 647l8 -0M1330 528l-7 10M767 517l-9 9M736 561l11 -1M1248 540l-15 -3M1053 444l10 -3M1066 496l-9 -3M707 558l-11 -4M802 622l7 1M1009 534l5 8M1086 462l5 6M1195 422l6 2M992 531l-10 -6M700 465l8 3M755 509l12 8M1209 487l7 -4M994 671l-4 -11M887 369l11 10M1074 448l-5 7M944 479l-0 -12M1223 486l7 10M764 432l-9 2M1282 459l-2 -12M1073 667l-3 -13M887 410l11 1M1184 462l13 -3M1071 425l-4 -7M934 544l-12 -8M1240 436l4 8M798 598l9 -5M907 364l3 -7M883 438l-1 6M926 629l8 11M641 488l-8 -0M609 667l1 -14M564 591l13 -11M990 507l16 3M800 592l-8 3M677 698l9 -6M949 314l5 -10M667 640l14 5M883 449l5 -3M917 460l-5 -7M1038 628l8 12M855 408l3 10M824 624l6 -5M713 698l10 -4M960 404l-6 -9M689 585l3 -7M727 556l-1 8M1139 469l-8 9M750 462l-1 13M678 570l-7 2M803 720l-13 1M1021 592l-10 12M1023 661l-7 -9M1232 522l-11 -4M1019 641l9 -9M703 603l-0 9M630 549l-3 8M983 416l5 10M847 590l-6 3M575 590l7 14M1023 689l5 -8M1200 414l1 10M915 677l13 -5M844 584l3 6M1329 517l1 11M656 526l-5 -5M860 448l6 5M1195 422l-5 -6M570 541l4 -12M1271 442l3 -11M905 475l1 10M743 552l-8 1M855 408l5 -3M883 494l-3 -6M1282 489l-8 -3M933 573l5 6M805 493l12 -4M767 517l5 7M970 525l-5 11M814 596l9 -4M919 453l11 0M559 553l-9 -9M1240 436l-4 -7M835 402l-3 9M803 720l-4 -19M945 585l-7 -6M888 446l-6 -2M590 559l6 5M1066 476l6 -6M590 685l-10 -7M829 442l8 -4M996 693l-7 -10M982 629l-7 8M638 699l-1 -18M1014 669l7 5M1046 446l-2 11M1056 482l1 -6M855 408l9 7M976 681l13 2M770 460l-1 11M761 716l-18 3M623 547l-5 5M1276 454l-5 -12M847 372l-10 -1M1014 570l7 14M1053 617l2 -15M1064 508l9 -5M1165 492l1 7M1175 448l-8 -1M968 566l9 -1M717 483l5 -6M1101 412l7 -11M560 649l-13 -6M794 443l-1 -12M771 634l7 -9M1152 512l7 -12M781 582l6 -6M1101 412l-10 -8M1021 495l-11 -3M775 671l-7 -3M1196 474l8 -6M945 326l12 -8M1253 483l-9 0M1315 531l-0 -19M1015 404l-8 -8M724 733l9 -7M697 667l0 11M967 580l6 2M926 415l9 -3M926 468l1 9M932 531l-9 -6M895 650l5 11M762 458l8 2M799 508l-14 1M1023 549l-9 2M755 434l-6 12M624 565l11 8M858 580l-6 2M998 382l-7 -5M887 398l-3 5M746 453l8 1M1308 503l7 9M1073 416l4 5M995 566l-10 5M678 570l1 9M1013 443l-8 9M784 653l-6 -8M736 455l3 -10M1240 436l7 1M610 653l2 -12M828 391l7 11M775 538l8 2M753 610l-5 -9M837 523l3 15M1069 616l-16 1M1029 619l11 -3M936 588l2 -9M989 396l-12 5M882 508l9 2M1120 442l1 -9M823 592l9 -4M722 584l-16 2M727 512l-5 8M884 620l11 5M947 424l5 5M895 650l12 4M758 441l-4 13M722 684l1 10M571 649l-5 9M1246 456l10 5M883 449l-5 -1M1038 459l-0 -8M1172 553l-7 12M949 314l-4 12M1127 413l-2 7M843 398l2 -7M1227 433l5 5M961 425l7 7M731 701l3 10M1024 576l-10 -6M853 657l5 -13M768 690l-11 4M1291 414l-6 -4M1038 451l-1 -13M1034 423l-5 -4M916 320l11 2M715 654l5 -7M674 556l4 -8M1291 455l-11 -8M972 614l-5 7M1111 533l12 -15M689 571l11 -10M671 572l-9 2M965 645l9 3M1248 398l-10 8M1054 430l10 -1M1050 581l-1 11M538 592l-11 7M703 517l8 1M1019 641l8 8M963 473l-7 5M817 489l5 -7M648 558l-7 7M824 624l-2 10M859 692l-12 -8M780 438l5 6M1042 412l7 -2M959 377l1 7M1067 418l-7 4M666 538l-4 -5M1205 457l10 -2M1211 468l5 -6M556 574l-10 -11M892 668l3 13M908 429l3 -6M1286 465l5 -10M1095 414l6 7M1209 447l7 -10M943 570l-7 -10M1128 469l2 -10M775 421l-3 8M1036 679l-8 -9M889 361l8 -0M1161 481l9 7M810 617l-1 6M802 521l-10 -2M1182 421l-4 9M1102 476l11 -0M861 620l5 -8M576 623l-17 -5M866 429l-0 9M1296 409l3 7M950 484l1 7M752 686l-4 -11M802 384l-11 -4M883 494l4 7M915 483l-9 2M638 626l10 14M698 488l7 -2M913 417l-6 0M1119 483l7 2M967 580l-8 6M1079 474l3 6M734 542l8 -5M618 541l-12 -4M855 570l6 -5M991 624l-15 -2M1261 396l12 -1M926 415l3 9M670 531l5 10M772 592l-5 -7M1027 517l-5 -12M969 671l6 -13M786 489l-14 -6M1128 469l-7 -10M902 583l-8 -13M938 419l-3 -7M1005 478l11 3M870 407l1 7M680 505l7 -1M816 523l6 -10M792 565l-10 6M759 624l3 -13M895 495l1 -8M1169 509l-8 17M999 550l-10 -0M787 737l-8 13M1088 430l5 6M510 601l10 10M929 395l-7 7M1119 505l21 -1M1125 533l10 7M1137 529l-2 11M802 447l8 3M886 572l0 9M1267 494l8 -0M580 572l-2 -11M786 498l10 1M639 547l-11 -5M799 508l8 -1M886 581l-8 3M934 544l9 -1M1027 517l7 -6M924 663l-4 -14M814 503l6 -6M711 616l-10 6M894 443l-6 3M1276 454l-10 -3M827 583l-7 -4M1032 580l17 12M861 620l6 7M717 561l-10 -3M821 599l-8 4M1130 443l12 2M928 672l-4 -9M618 503l1 14M988 478l-9 3M781 477l-12 -6M975 658l9 10M878 654l6 -6M1039 534l4 -14M1057 439l-12 -0M641 565l-8 -1M859 353l-5 11M1178 459l6 3M901 530l10 -12M764 432l8 -3M667 481l0 -8M960 404l10 -3M911 350l7 7M954 545l14 4M1027 517l-9 -3M772 483l-3 -12M798 412l-5 10M1021 495l11 -7M827 583l10 -8M832 436l2 -9M1099 434l8 -2M878 599l-11 5M1228 443l8 2M834 427l8 0M739 481l2 -11M1223 479l5 -3M945 643l-11 -3M1066 527l15 7M1089 647l3 -19M831 637l-0 -9M735 487l13 5M805 560l-2 -11M785 636l4 7M880 472l2 -6M1144 461l1 13M1074 556l-12 1M927 322l9 3M1079 474l-7 5M937 367l3 9M1256 434l-9 3M1134 518l-11 -0M1024 462l-4 12M929 351l-4 9M1105 544l-6 15M955 330l4 7M1042 420l-3 10M675 541l-7 8M1305 519l-13 4M982 433l6 -7M1047 661l14 1M1072 440l-5 -5M889 599l2 -10M646 589l-5 -10M969 371l-8 -8M846 614l7 8M703 573l3 13M936 588l-11 6M1281 510l11 13M872 452l6 1M1086 462l-3 6M754 551l13 -1M1128 469l-9 2M1184 558l8 -11M1205 475l-9 -1M880 350l9 11M880 472l9 -4M1131 495l12 3M985 653l-3 -10M814 629l1 9M774 513l-2 11M812 727l-9 11M860 405l-6 -4M888 676l7 5M880 350l15 2M838 380l9 -8M1262 530l10 15M877 537l5 -6M1115 435l6 -2M1107 417l-6 4M750 665l7 4M871 350l-0 12M913 435l-1 8M646 689l-9 -8M1271 501l-2 16M848 380l-1 -8M882 546l-5 -9M900 639l-8 4M722 496l-4 10M971 476l-6 6M624 692l-2 -15M841 566l6 -8M929 566l-8 4M817 645l5 -11M814 709l9 -11M858 434l-8 -5M1072 542l-15 4M1244 483l-1 9M865 559l-5 -10M1004 469l-11 2M1303 423l-6 8M698 488l-10 6M814 503l8 10M851 454l-4 -9M1066 496l-11 4M1130 450l12 -5M1148 448l-6 -3M1209 487l-11 5M1005 408l2 -12M914 609l12 -6M802 576l-7 2M1209 447l11 3M781 582l-14 3M859 692l-2 -13M807 378l5 -9M685 679l-9 -9M932 375l-2 -8M1307 462l-7 -5M1085 515l-4 -15M666 598l8 12M1195 422l-13 -1M818 621l-3 -10M1054 405l-12 -5M712 687l-2 -11M646 516l-2 -9M1034 423l5 7M658 682l3 -17M1281 510l-6 17M969 371l-2 -9M840 361l-5 -9M641 664l14 -11M1085 419l9 5M611 605l12 0M794 443l8 4M886 572l8 -2M759 624l-6 -5M641 664l20 1M842 453l-7 4M689 488l9 -0M533 613l13 6M1023 411l-12 4M687 512l6 0M971 476l-1 -8M963 311l4 9M788 660l9 -5M796 373l-5 7M934 389l7 -3M1005 452l-3 8M805 529l-3 -8M1236 429l-0 -7M878 498l2 -10M868 380l11 -2M999 497l9 3M687 504l1 -10M764 593l-6 9M997 679l14 -2M1153 418l-1 -9M667 625l-14 4M677 698l-11 4M949 373l-9 3M1006 572l-0 8M689 552l-3 -7M889 361l10 8M692 538l4 5M1046 501l-3 19M725 485l-3 -8M1032 607l-9 5M855 408l-1 -7M786 489l0 9M666 538l9 3M924 409l-6 3M590 685l14 -6M721 592l-15 4M580 572l-3 8M861 673l0 -13M643 499l8 -8M972 593l-5 -8M924 715l-14 9M923 298l7 11M1151 498l1 14M825 607l-5 3M1139 469l5 -8M949 604l-10 0M859 455l-8 -1M884 605l9 8M1030 595l-10 10M850 484l14 -2M1101 412l-3 -17M690 649l-1 -10M705 486l7 -8M888 458l-5 3M967 580l-5 -5M1046 501l9 -1M771 634l-6 -4M1005 626l3 9M1192 495l6 -3M755 434l1 -10M833 466l2 -9M1045 431l-8 7M725 485l-8 -2M807 640l-6 -9M1094 424l-6 6M622 573l-8 2M769 730l-8 12M1038 668l-3 -17M853 657l-11 5M1015 404l8 7M739 580l7 9M830 598l9 1M1119 483l-8 -1M1237 486l-7 10M666 598l-11 8M1010 492l-6 -5M967 382l-7 2M1147 547l-12 -7M1115 435l-6 -11M934 651l-14 -2M698 593l-5 7M1079 474l4 -6M546 619l13 -1M917 460l2 -7M1105 456l-8 4M781 582l-6 -5M1071 425l6 7M973 582l1 -9M761 580l-8 4M917 309l6 6M897 698l-11 -1M855 666l6 -6M945 399l-9 -2M880 414l7 1M1054 405l13 -14M809 516l-2 -9M651 482l-10 6M624 692l-20 -13M1109 424l-2 8M1018 682l5 7M1156 449l-8 -1M914 405l4 7M1180 473l-6 -8M1010 690l13 -1M1228 451l-5 6M848 380l8 -1M1232 504l-0 18M979 426l4 -10M764 593l3 10M975 516l6 -9M968 499l12 -0M804 661l8 -9M1116 568l3 11M847 684l10 -5M854 613l-1 9M765 572l-1 -10M821 720l-7 -11M662 574l1 -14M911 350l4 -11M956 603l-1 -9M880 640l-7 8M1329 498l10 14M874 463l-8 7M859 455l7 -2M932 612l-6 -9M587 596l-5 8M1087 442l-7 1M784 419l-3 -8M898 411l1 6M864 332l6 6M928 439l3 -7M820 427l2 -12M968 499l4 8M715 579l11 -5M874 463l1 5M630 549l-2 -7M882 546l4 9M784 653l13 -6M837 674l11 -2M1014 570l-8 2M827 405l-5 10M716 514l6 6M842 453l5 -8M1232 504l10 9M1300 491l8 -6M963 436l-11 -7M574 552l-4 -11M994 671l-5 12M703 714l10 -16M1169 509l8 19M1079 474l-7 -4M843 514l12 7M1072 440l-9 1M1278 441l2 6M1097 460l-6 8M1116 450l8 2M623 535l5 7M846 466l0 -6M1179 540l-2 -12M1059 650l10 -15M694 608l-12 -4M959 586l-8 2M978 579l13 -1M716 519l6 1M752 648l3 -12M1100 503l11 11M965 636l10 1M781 618l-3 7M932 343l-9 4M627 497l-1 9M855 408l-9 3M1296 409l12 -4M969 461l1 7M719 625l-8 -9M740 528l4 -9M739 636l-10 11M985 559l-8 6M856 428l-3 -5M899 433l2 7M1284 420l7 -6M1120 442l-5 -7M826 613l6 -8M572 609l-8 -18M659 547l4 13M1082 480l-6 6M946 367l11 3M982 370l10 -3M975 454l-12 -7M620 581l-12 4M880 414l-4 7M775 577l-8 8M818 448l-8 2M695 499l5 6M863 526l9 -1M1025 484l7 4M837 606l2 -7M866 438l7 -5M955 417l-6 -5M926 489l1 -12M703 499l5 -3M1223 479l7 9M936 397l-3 9M1077 625l12 -10M653 629l-5 11M894 443l-4 -3M897 698l11 2M727 556l9 5M798 640l9 -0M1143 452l-7 2M935 479l7 10M822 415l10 -4M1282 489l5 -8M1010 424l7 -5M863 424l-7 4M891 391l7 2M900 639l7 -4M974 365l-7 -3M555 601l-9 18M1018 682l-8 8M745 622l8 -12M934 355l3 12M1115 413l10 7M802 433l0 14M728 664l3 12M799 479l10 4M884 620l5 14M888 433l2 7M580 572l-9 2M903 423l5 6M901 688l-6 -7M731 676l-11 -0M900 333l4 14M888 676l4 -8M940 376l-4 7M861 500l10 -4M938 471l6 8M736 561l-4 8M755 519l-7 10M938 471l2 -10M838 502l5 -12M663 502l9 -1M907 463l-1 6M961 349l-6 4M690 649l8 4M584 633l-8 -10M928 439l8 2M726 718l8 -7M983 391l-12 3M1262 530l7 -13M1102 476l2 -12M1020 438l6 9M923 369l7 -2M828 489l-6 -7M872 452l-6 1M618 541l-3 -8M985 591l-7 -5M949 314l-10 -3M752 648l10 4M1262 424l1 12M706 566l-6 -5M1293 497l-5 -5M874 385l7 0M1095 443l1 10M963 595l-1 5M1052 536l-9 -16M1104 487l0 7M999 550l5 -7M953 462l-2 10M832 479l-4 10M1209 487l5 12M894 339l-6 7M812 562l-4 10M918 696l5 -10M1151 441l-9 4M1154 461l6 -6M547 583l-12 -19M809 623l-1 10M815 395l-2 -9M934 544l2 16M1104 494l7 3M1192 495l5 7M1038 459l-7 5M1188 482l-8 -9M798 598l9 3M1102 476l7 -8M689 521l4 -9M599 654l-18 -1M982 643l-7 -6M1054 405l-5 5M882 444l4 -4M948 686l7 13M1144 461l8 -7M1023 411l6 -14M903 386l-5 7M1049 464l-1 10M787 737l-6 -9M716 519l-5 6M825 555l-6 -4M1000 438l-10 -3M1119 483l-6 -7M1267 494l7 -8M1205 457l-5 -10M586 583l12 -1M643 612l14 5M1057 439l-4 5M1137 529l15 -17M1223 486l7 2M711 490l-6 -4M869 665l2 9M880 315l-6 9M919 586l-0 14M906 485l-10 2M870 338l-6 7M627 497l6 -9M847 597l-6 -4M785 603l-2 -10M898 446l-3 -7M1209 564l17 -7M1064 429l3 6M713 698l6 9M1093 539l18 -6M1267 480l-5 8M916 374l-6 5M1086 487l-4 -7M902 583l-11 6M1182 421l-10 -1M818 448l15 1M900 333l6 -8M533 613l-13 -2M1126 547l9 -7M889 634l3 9M1233 463l-5 -12M678 548l3 6M765 572l-12 0M850 541l-0 -13M755 509l-5 -8M888 452l-5 3M805 493l9 10M1095 443l4 -9M795 578l7 -12M1100 503l4 -9M843 490l-5 -6M574 529l12 12M866 572l7 7M866 453l6 4M748 482l0 10M839 477l6 -3M941 620l-9 -8M872 525l10 6M950 443l-3 11M929 424l-9 5M1043 520l13 -0M771 634l14 2M905 393l0 10M995 566l-4 12M1113 557l-8 -13M755 519l12 -2M716 514l0 5M625 648l-13 -7M731 507l1 8M955 388l6 7M1210 519l8 -12M809 516l5 -13M758 602l-10 -1M656 526l9 -3M963 507l-10 0M790 694l11 -5M1296 440l1 -9M735 487l13 -5M1004 370l2 14M635 606l-5 -13M1165 492l10 3M1048 482l3 7M1053 617l4 17M1105 456l9 6M805 529l-7 8M935 490l-9 -1M684 596l-2 8M1293 421l4 10M628 524l-5 11M1279 424l-5 -6M529 555l8 -10M636 510l-10 -4M989 396l-0 9M860 373l-6 -9M1254 442l2 -8M983 488l13 -1M976 383l-1 -8M1236 499l7 -7M863 526l-1 9M882 306l-7 -11M974 357l-11 -2M997 391l-7 -5M884 620l-10 3M1270 412l4 6M904 347l11 -8M943 543l1 -16M877 537l-5 -12M758 542l1 -8M670 564l4 -8M1089 615l3 13M1116 423l-9 -6M623 605l7 -12M927 382l-8 -0M823 529l-7 -6M755 490l9 -6M950 668l-5 10M878 448l-4 -1M898 479l-2 8M697 667l-8 1M950 443l-8 5M908 307l1 8M1020 561l4 15M793 631l-7 -4M1263 436l-7 -2M992 531l8 4M934 355l-9 5M750 665l-0 -9M965 536l-13 -0M790 694l-9 -5M950 484l10 6M546 619l-10 7M787 670l5 10M697 522l6 -5M896 427l4 1M1166 541l11 -13M859 467l-7 3M955 330l-10 -4M992 531l7 -6M914 405l10 4M975 454l2 -13M945 585l1 7M852 388l4 -9M807 420l4 -7M940 594l6 -2M929 424l-9 -4M795 587l-3 8M736 455l-8 -6M998 382l6 -12M735 623l12 8M874 463l9 -2M797 647l-8 -4M513 555l9 11M1161 465l-1 -10M969 671l-12 -6M605 558l-2 9M1008 434l2 -10M570 541l16 0M671 518l9 -7M963 342l11 -5M968 566l9 -9M911 350l-1 7M815 476l-6 7M1223 457l-3 -7M949 360l6 -7M761 686l-4 -9M822 415l7 5M753 572l8 8M1142 424l15 1M641 565l-6 8M913 565l8 5M921 556l8 10M1256 461l4 -5M1151 498l8 2M942 448l2 -11M1295 539l-11 4M1104 494l8 -6M675 541l3 7M1175 448l-4 -6M748 675l9 -6M1147 547l-9 6M1284 429l-10 2M1228 443l-0 8M999 550l-5 8M753 572l-0 12M933 625l1 15M1158 474l3 7M945 678l-6 8M537 545l-19 -0M873 632l-6 -5M983 349l0 -8M602 576l6 9M1257 516l12 1M926 489l9 -10M896 427l-4 -5M739 636l-4 -13M1130 459l8 3M878 407l-8 0M752 648l11 -5M963 342l-2 7M716 570l10 4M1178 459l-4 6M796 553l9 7M908 429l-0 5M1184 558l13 4M717 561l9 3M1038 597l2 19M932 375l-9 1M1178 459l-12 -1M715 579l-12 -6M1165 492l-4 -11M817 489l11 0M869 641l11 -1M1081 567l17 3M727 512l1 11M924 663l-7 -6M1169 476l11 -3M1236 445l-4 -7M643 612l-15 2M1125 533l12 -4M1199 481l-3 -7M1016 481l-12 6M900 639l8 5M720 667l2 -8M859 455l-3 5M941 386l-5 -3M1237 413l-1 9M971 394l-7 -5M846 411l5 6M930 309l4 8M801 689l-9 -9M992 454l1 8M998 361l1 -9M934 317l-11 -2M821 599l-7 -3M1008 434l12 4M1171 453l7 6M631 515l-5 -9M797 647l0 8M638 626l-10 -12M798 598l2 -6M1004 419l-1 9M880 289l6 5M1102 427l5 5M814 503l14 1M995 566l12 -3M712 604l-6 -8M596 536l6 -13M761 716l-12 -12M752 648l-14 3M792 565l13 -5M684 596l-8 2M973 629l-6 -8M710 676l0 -10M968 349l-7 -0M929 445l1 8M934 679l11 -1M967 320l-6 6M1251 505l2 -8M1006 510l5 9M1018 532l-7 -13M985 591l2 -7M1021 592l-16 5M815 476l7 6M574 552l-9 12M1038 597l-8 -2M860 490l4 -8M840 538l10 -10M919 453l4 -8M824 624l-10 5M602 576l-14 -2M899 433l-6 -1M883 429l7 -2M609 667l-10 -13M742 512l-11 -5M815 476l0 -11M757 477l7 7M908 587l-8 4M802 576l-1 7M1087 442l8 1M686 545l-8 3M1262 424l-10 -3M1047 661l12 -11M756 470l1 7M1172 553l-18 3M692 561l-11 -7M1030 432l7 6M1004 469l-2 -9M927 382l7 7M869 420l-5 -5M952 536l9 -9M1100 503l-13 1M845 634l-2 7M686 545l-5 9M1083 468l8 0M1061 450l8 5M1182 450l11 2M681 523l-1 -12M905 409l2 8M929 395l4 11M854 364l-7 8M755 434l3 7M986 691l10 2M934 651l-0 -11M1046 553l-7 -19M759 534l-7 3M897 473l2 -6M858 434l-2 -6M877 537l-15 -2M1171 442l-4 5M831 628l6 8M757 677l-9 -2M1064 568l-13 -4M653 583l9 5M602 620l-16 -4M703 603l3 -7M931 521l-9 -5M820 561l-1 -10M801 689l1 -8M888 433l2 -6M917 309l-3 -9M633 502l3 8M882 546l15 -1M985 571l-11 2M1013 469l11 -7M969 607l3 7M863 323l11 1M1204 468l-7 -9M941 360l-4 7M743 731l-10 -5M1116 450l-5 -6M1027 517l-5 7M1089 669l10 -10M734 542l1 11M1151 441l-3 7M812 562l2 7M795 587l-7 0M602 636l16 -9M1232 504l-11 14M850 484l2 -7M947 307l-3 -8M727 556l8 -3M1003 670l8 7M703 517l-4 -2M722 637l-10 1M713 501l-5 -5M1174 465l-8 -7M743 719l-10 7M880 350l-1 10M1089 669l-8 -10M1171 434l8 5M991 359l1 8M1169 476l-2 -7M960 553l6 5M1057 439l6 2M1187 470l9 4M979 593l-1 -7M915 677l-4 -14M948 686l5 -7M846 466l10 -6M1059 650l2 12M1077 410l0 11M945 399l4 6M847 590l5 -8M1303 423l7 10M722 584l-1 8M856 394l-11 -3M959 561l-10 7M1174 412l8 0M791 380l3 13M1253 497l-7 2M1186 488l2 -6M1024 462l-12 -3M756 470l-7 5M872 525l8 -5M1018 682l3 -8M676 670l2 -17M1197 439l-7 3M801 631l1 -9M870 338l4 -14M1257 516l5 14M1228 443l-1 -10M826 672l-1 8M736 522l4 6M651 482l9 -2M837 523l-5 9M801 583l9 -1M669 583l-7 5M748 529l-8 -1M1073 503l-7 -7M594 674l-4 11M757 677l11 -9M895 352l-7 -6M556 574l8 17M775 671l-2 8M623 535l7 -4M941 360l5 7M1085 515l-4 19M974 365l11 -1M958 467l6 -12M1130 443l0 7M974 337l9 4M736 455l-3 8M831 365l-5 -6M715 530l-4 -5M973 328l-9 5M1134 518l18 -6M979 593l9 4M936 325l6 -7M958 619l9 2M883 449l0 6M1195 422l2 7M786 489l3 -14M895 537l-3 -8M596 536l-10 5M1224 463l9 -0M988 597l8 -3M1061 450l-8 -6M922 536l-8 3M679 590l5 6M866 438l5 5M758 602l-5 8M1101 412l14 1M871 674l-10 -1M1267 480l-7 2M700 494l5 -8M865 458l7 -1M687 659l10 8M728 523l-6 -3M944 527l-1 -8M1139 469l3 12M1179 482l1 8M1283 473l10 3M565 564l6 10M538 592l-9 -18M783 526l9 -7M992 531l-1 -8M772 410l9 1M923 369l-7 5M713 501l-1 6M882 667l-11 -10M830 547l-11 4M1315 531l-10 -12M669 583l10 7M827 405l8 -3M843 490l3 14M655 606l2 -8M687 512l-6 11M1193 533l10 9M790 613l-9 5M886 380l-1 11M1107 417l2 7M685 679l4 -11M1126 547l12 6M1102 427l-1 -6M1086 487l-10 -1M1091 404l-13 -8M679 590l10 -5M1032 488l1 11M859 692l-17 -1M996 487l-7 11M886 380l-7 -2M1109 468l5 -6M1277 408l-7 4M995 544l4 6M901 530l-9 -1M697 678l7 5M597 544l9 -7M931 300l8 11M1136 417l-11 3M1308 503l-3 16M969 671l-5 9M742 537l-2 -9M872 371l-10 -8M836 613l1 -7M833 449l2 8M832 605l5 1M1179 540l13 7M946 353l-9 -5M879 378l2 7M1243 492l3 7M855 628l-2 -6M1251 428l1 -7M894 339l6 -6M961 395l-7 -0M942 336l-6 -11M1027 535l4 -11M975 454l-11 1M764 432l3 11M923 369l0 7M965 482l-9 -4M977 542l-12 -6M575 666l5 12M822 352l13 -0M998 632l6 12M789 475l8 13M872 525l-4 -12M936 397l-2 -8M1048 474l9 2M726 718l-12 4M909 315l-3 10M1169 509l16 1M723 537l7 -2M667 655l9 15M896 560l-2 10M705 474l7 4M1267 458l-1 -7M1052 678l-4 11M958 467l11 -6M609 667l-15 7M827 583l9 0M849 551l-2 7M847 558l-8 -12M936 511l7 8M1105 544l-12 -5M1161 441l2 -9M866 429l5 -3M1064 508l2 -12M828 391l2 -8M1128 469l11 -0M1038 451l-6 -8M878 498l-7 -8M974 337l10 -4M1237 486l-7 2M955 699l12 2M1248 398l-20 1M1119 471l-5 -9M739 609l-7 -9M698 653l6 8M860 549l9 1M909 598l-10 1M588 574l-11 6M839 599l-6 -6M1010 690l-14 3M772 429l10 0M781 679l11 1M887 369l-1 11M727 512l5 3M712 687l-8 -4M814 596l2 -7M604 691l0 -12M970 525l-9 2M651 673l-14 8M886 572l-7 3M687 659l11 -6M818 621l2 -11M804 661l0 9M984 668l10 3M982 604l-3 -11M1130 443l-9 -10M1225 424l2 9M922 516l1 9M1276 454l-9 4M572 609l10 -5M1153 418l7 -3M1153 533l13 8M1164 410l-4 5M976 383l-5 11M1256 461l7 3M993 640l5 -8M1197 439l3 8M670 491l-7 -4M840 462l-5 -5M646 516l5 5M638 626l-20 1M1072 583l9 -16M721 552l-8 -2M1136 417l-3 6M1299 466l-6 10M602 576l10 -8M941 360l8 0M936 511l-3 -12M813 531l11 6M1021 592l-1 13M1171 453l4 -5M983 416l9 1M844 735l-9 -9M732 569l-6 -5M754 551l-7 9M1099 559l-1 11M817 645l-12 2M1171 434l-10 7M1013 443l13 4M968 549l-3 -13M757 660l0 9M846 466l6 4M963 355l-8 -2M602 576l-6 -12M975 454l-6 7M1193 533l-14 7M1018 632l-10 3M1032 476l9 8M1134 518l-9 15M1066 527l7 -10M822 654l-0 10M602 636l10 5M1185 455l-1 7M943 519l10 -12M698 488l2 6M687 504l4 2M929 351l-11 6M1097 460l-1 -7M867 714l8 -18M673 511l-1 -10M989 550l5 8M936 449l-6 4M1069 635l1 19M872 568l7 7M759 624l9 -3M871 617l2 -8M1187 470l-3 -8M798 616l-10 4M1121 459l3 -7M1111 444l-4 -12M805 529l5 15M780 550l-8 10M1273 395l-3 17M935 457l12 -3M1042 420l-11 -8M907 491l-11 -4M781 728l-5 -11M983 349l10 -4M1134 518l3 11M1039 534l-8 -10M695 499l-7 -5M929 395l7 2M1271 501l10 9M960 612l7 9M864 415l7 -1M646 601l-11 5M871 732l-17 -10M969 412l2 7M770 460l4 -10M1246 422l-2 7M712 478l-4 -10M858 580l8 1M1014 669l-3 8M949 412l8 -2M1283 473l-6 -6M734 542l9 10M837 674l-5 -14M892 643l3 7M908 644l-13 6M1154 461l-2 9M828 456l7 1M916 374l7 2M749 704l-6 15M1013 586l-7 -6M975 516l-10 0M1116 423l5 10M785 603l-5 6M995 429l9 -10M933 335l9 1M1119 505l-8 -8M660 516l6 -3M1087 476l10 8M761 686l12 -7M1206 498l-8 -6M1010 492l-2 8M1128 432l-3 -12M1071 425l-4 10M884 648l-11 0M1330 486l-10 4M1120 497l-8 -9M1015 404l6 -9M830 714l-16 -5M843 490l-7 4M1299 466l1 -9M926 576l5 7M1306 473l2 12M778 505l-8 -3M1157 425l3 -10M1061 662l12 5M961 425l-9 4M949 656l9 -6M732 600l3 -12M873 632l7 8M788 620l7 3M873 632l-10 2M960 384l4 5M992 417l12 2M712 687l8 -11M899 599l-8 -10M873 579l5 5M818 406l-7 7M1271 442l-5 9M818 406l4 9M871 490l9 -2M1254 467l9 -3M1295 539l10 -20M1138 462l-2 -8M1257 516l-6 -11M964 680l-4 -7M913 417l7 3M884 683l8 7M921 616l-7 -7M1005 452l-13 2M758 542l-6 -5M864 415l-1 9M597 607l14 -2M987 540l-11 -7M985 559l-8 -2M622 677l15 4M957 318l-3 -14M1052 452l-3 12M959 561l7 -3M741 746l-6 12M1251 428l-5 -6M1156 434l7 -2M842 427l2 9M854 441l1 6M1146 565l19 0M807 378l6 8M1297 431l13 2M934 679l5 7M871 314l11 -8M985 653l5 7M659 547l-3 -9M697 667l7 -6M946 367l3 -7M870 407l4 -5M915 677l8 9M789 475l-6 -12M925 594l-6 -8M969 371l6 4M666 538l2 11M973 328l1 -9M1066 496l-0 -11M896 427l-6 -0M1104 487l7 -5M949 373l8 -3M1224 463l-1 -6M720 647l-8 -9M1223 497l-4 -6M843 720l11 2M640 555l1 10M1151 479l2 9M1032 476l-4 -6M802 384l4 12M1021 495l4 -11M1031 550l-2 13M897 545l-2 -8M1047 661l-9 7M1131 495l9 9M775 538l-3 -14M974 648l1 -11M1048 482l-7 -9M953 679l7 -6M768 668l5 11M1207 419l5 -5M883 324l3 7M1152 470l9 -5M691 631l9 2M1083 468l-11 2M889 634l-9 6M1263 436l7 -11M891 510l14 -1M873 579l-1 -11M915 427l-2 8M938 425l9 -1M799 508l3 13M998 411l7 -3M713 536l10 1M678 621l-4 -11M1008 434l-8 4M1038 628l-6 13M735 487l-6 5M706 510l6 -3M894 443l4 3M895 495l3 9M851 642l7 2M888 458l0 -6M831 365l6 6M753 584l3 8M1142 438l-6 -9M689 521l-8 2M1029 619l-6 -7M1088 576l10 -6M1295 485l5 -8M811 554l-6 6M653 629l-10 -17M979 410l-2 -9M977 401l-7 -0M533 613l9 -9M1066 485l6 -6M851 454l-5 6M893 314l8 4M1237 486l-2 -7M968 349l-5 6M961 395l9 6M871 350l-7 -5M575 666l-9 -8M910 627l-3 8M1193 452l7 -5M1248 552l12 -4M874 463l-2 -6M1013 443l7 -5M963 595l-8 -1M1032 405l-3 -8M889 599l-11 -0M868 380l-8 8M978 579l9 5M937 671l-3 8M693 475l-10 -3M761 716l15 1M653 510l-9 -3M1116 423l-7 1M918 696l-6 -8M936 441l-5 -9M860 608l7 -4M667 481l-4 6M862 535l-12 -7M1274 418l-8 0M520 588l7 11M1030 595l-9 -11M1081 534l-8 -17M731 529l9 -1M1119 505l12 -10M625 648l5 19M1009 534l-9 1M671 518l-5 -5M753 572l3 -12M869 505l-8 -5M991 624l11 -7M856 460l-4 10M929 424l2 8M1035 470l-4 -6M955 330l2 -12M1276 454l6 5M1214 476l3 -7M620 561l-8 7M703 714l-8 -14M1172 553l5 14M849 651l-6 -10M653 583l-5 -6M735 487l4 -6M929 351l3 -8M846 504l9 -7M631 637l11 14M1009 534l-10 -9M1296 409l-11 1M1097 460l-11 2M1004 589l-6 -8M957 637l8 -1M924 545l-10 -6M710 666l12 -7M914 365l-4 -8M831 637l6 -1M892 422l-2 5M977 441l7 11M1172 553l7 -13M1071 407l-4 -16M945 643l13 7M1121 459l-5 -9M1120 497l-1 -14M863 323l-4 -8M850 541l-1 10M784 653l4 7M748 601l-2 -12M967 382l9 1M741 746l20 -4M686 545l10 -2M936 663l4 -7M948 612l1 9M995 611l-11 1M1111 444l-3 6M832 532l-4 -11M1228 451l8 -6M906 469l5 3M862 363l-8 1M936 441l8 -4M845 391l-9 4M996 487l8 -0M803 720l-6 9M768 621l10 4M678 570l-8 -6M899 451l4 -5M520 588l-10 13M703 573l-5 12M1249 463l-11 6M1210 519l-4 -21M741 470l-12 0M840 618l-10 1M928 672l-5 14M1036 679l-0 12M919 382l-9 6M1166 458l1 -11M938 435l7 -4M754 551l-11 1M924 663l-5 6M732 479l9 -9M968 549l9 -7M1296 440l-12 -4M887 398l10 5M1308 503l-11 4M933 499l-13 -5M906 485l3 -7M895 625l12 10M1153 533l8 -7M1023 549l6 14M726 574l-0 -10M778 664l-9 -7M841 593l-5 -10M852 477l-7 -3M689 571l-6 -7M943 570l4 7M1174 412l-2 8M919 586l12 -3M1307 462l-1 11M767 531l-8 3M1286 465l-3 8M631 637l7 -11M901 688l-4 10M850 528l5 -7M1294 462l-1 14M850 436l-6 0M883 429l-6 0M684 479l9 -4M1041 484l-0 -11M946 353l-12 2M1182 421l8 -5M620 561l7 -4M588 574l8 -10M618 541l5 6M879 360l-8 -10M786 489l11 -1M736 561l-10 3M860 490l-5 7M974 357l-6 -8M1250 490l-6 -7M786 489l10 10M989 443l3 11M936 441l2 -6M767 531l5 -7M892 690l3 -9M929 395l5 -6M1233 463l-4 6M810 361l-0 -8M807 378l-11 -5M1253 483l9 5M847 684l1 -12M712 687l-8 5M670 531l10 -0M927 322l7 -5M564 591l-17 -8M946 353l-3 -10M670 531l-4 7M974 337l-6 12M871 617l3 6M1262 488l-2 -6M759 624l-4 12M878 584l1 -9M1219 413l-7 1M940 461l7 -7M670 491l-3 -10M718 543l8 0M602 620l9 -15M938 471l-12 -3M698 641l-9 -2M908 644l9 -5M1277 467l5 -8M678 497l2 8M849 551l11 -2M953 517l8 10M559 553l11 -12M989 405l3 12M907 439l-6 1M911 292l-13 4M741 746l8 8M802 622l-7 1M1032 405l10 7M919 382l-9 -3M906 371l4 8M824 572l-4 -11M727 512l-11 2M934 317l2 8M775 538l8 -12M657 598l5 -10M965 636l-6 -7M794 443l8 -10M1225 424l-7 -3M890 480l6 7M944 527l8 9M1236 422l10 0M814 569l6 -8M1146 565l-16 12M1199 481l6 -6M1024 576l-3 8M574 529l-13 5M887 398l4 6M887 410l-9 -3M910 388l0 -9M1143 498l-3 6M971 476l8 -10M1222 545l-7 9M876 722l6 9M887 369l-7 1M594 674l5 -20M893 450l-5 2M837 438l-3 -11M807 420l-5 13M571 649l10 4M922 501l-9 -8M667 640l-19 0M991 578l7 3M703 499l-3 6M798 616l-2 -10M945 326l-3 -8M817 456l-11 5M837 575l-1 8M1028 681l-7 -7M1244 429l3 8M745 622l8 -3M676 670l-15 -5M1101 520l10 13M853 657l2 9M872 591l-9 -2M964 680l-11 -1M549 533l-13 0M992 587l4 7M1120 497l6 -12M1294 462l6 -5M765 572l8 -3M755 434l-10 1M1032 488l6 7M749 754l11 1M860 608l2 -11M1254 467l2 -6M982 629l-9 0M934 544l-2 -13M607 510l11 -7M1013 443l-1 16M924 704l19 1M914 405l-9 -2M812 694l11 4M908 333l7 6M926 415l-6 5M846 421l4 8M555 601l-13 3M710 666l-6 -5M851 417l2 6M948 612l12 -0M655 606l2 11M781 679l-6 -8M1169 426l-3 -7M1077 432l-10 3M1195 518l-10 -8M869 505l2 -9M1039 430l10 -6M901 688l11 0M1219 413l11 0M1111 482l1 6M1215 455l8 2M838 380l-2 15M809 516l-7 5M859 353l5 -8M1013 469l3 12M1089 453l-9 -10M810 361l-7 7M678 621l3 13M807 640l10 5M861 476l3 6M846 421l-4 6M917 287l-3 13M575 590l11 -7M1091 404l-3 9M700 465l-8 -2M667 655l11 -2M864 332l-0 13M953 436l-8 -5M1215 455l5 -5M755 636l10 -6M1072 440l8 3M813 531l6 12M928 672l6 7M842 649l0 13M718 506l7 -1M936 560l9 1M910 724l-13 -10M884 683l4 -7M715 530l7 -1M1280 415l-6 3M939 604l0 7M876 421l-5 5M1205 457l-12 -5M1020 561l-6 -10M933 573l-2 10M909 315l7 5M1055 602l-6 -10M1297 431l-7 -3M965 482l6 7M942 336l1 7M920 420l-9 3M968 499l-8 -9M811 413l-6 -6M1144 461l-6 1M934 679l-11 7M967 382l-3 7M803 368l7 -15M811 431l4 -11M1073 416l-6 2M1008 500l14 5M1152 470l-1 9M923 445l-4 -4M975 600l-7 -1M853 657l11 -5M828 391l-5 7M732 479l7 2M703 573l13 -3M931 300l13 -1M851 642l5 -6M1013 443l8 12M1274 486l1 8M905 409l-8 -6M763 643l7 6M982 643l11 -3M1046 446l-1 -7M1018 632l10 -0M646 516l-10 -6M719 470l10 0M1061 450l6 11M1010 424l-7 4M1248 552l-0 -12M1052 536l-13 -2M1237 413l9 9M536 533l-12 -2M924 715l12 0M868 394l6 8M1072 583l-6 10M1193 533l2 -15M811 554l-1 -10M1133 486l9 -5M1115 435l-4 9M660 516l-9 5M914 405l-4 6M979 466l5 -14M1038 668l-15 -7M764 593l8 -1M960 404l1 -9M992 367l-7 -3M1066 485l10 1M625 648l-15 5M1262 424l-11 4M1021 495l1 10M704 533l1 -10M899 308l2 10M972 614l4 -8M817 456l6 8M739 636l-1 15M869 665l-8 -5M739 636l7 6M1032 580l-11 4M740 568l-1 12M899 467l-0 -8M797 402l8 5M1295 485l-7 7M701 547l6 -3M1032 607l-12 -2M890 491l-7 3M1244 444l-6 12M703 517l3 -7M914 397l-9 -4M924 545l10 -1M767 698l-6 18M937 348l-5 -5M711 616l-8 -4M934 317l5 -6M743 719l11 7M936 588l-5 -5M961 425l10 -6M698 641l-0 12M788 554l4 11M1064 508l9 9M1057 439l7 -10M1105 544l-18 9M1131 478l-5 7M1116 423l-1 12M878 438l5 -4M692 538l-10 0M1142 481l9 -2M767 550l-11 10M618 541l5 -6M823 464l10 2M843 514l7 14M794 529l8 -8M862 363l9 -1M1055 500l-4 -11M713 462l-7 -3M978 579l-4 -6M833 513l-5 8M1119 483l4 -5M979 426l-8 -7M948 686l-5 8M941 620l7 -8M969 671l15 -3M1305 519l10 -7M743 731l-0 -12M836 646l1 -10M574 552l-15 1M1169 476l1 12M995 544l-6 6M1308 503l-15 -6M975 658l-12 1M762 458l-6 12M821 599l9 -1M1033 499l-11 6M995 515l16 4M802 566l-10 -1M890 480l-6 1M697 510l-4 2M717 561l4 -9M1040 465l-5 5M780 438l13 -7M1265 471l-8 3M1069 616l3 -11M984 333l-1 8M873 609l-6 -5M529 555l-7 11M574 552l4 9M1256 461l-3 -10M969 607l-6 -1M928 439l1 6M793 431l-8 13M889 361l-10 -1M1066 593l-17 -1M608 585l-10 -3M1005 626l-14 -2M1130 450l0 9M912 464l9 0M631 637l-13 -10M818 621l-4 8M1262 530l-14 -6M786 489l-5 -12M828 391l-6 -11M860 490l11 6M1284 429l-0 7M847 445l-6 -1M1061 469l11 1M886 294l12 2M899 308l-6 6M838 380l7 11M873 579l6 -4M821 720l14 6M1237 486l6 6M888 446l2 -6M1005 478l-1 9M848 380l-3 11M781 477l-5 -10M1253 497l9 3M680 505l-8 -4M955 417l-3 12M741 746l-14 3M929 445l-6 0M1203 542l5 -12M674 610l8 -6M1013 469l-1 -10M973 328l8 -1M1242 513l4 -14M953 507l-0 10M633 502l-6 -5M721 552l5 -9M1057 634l-11 6M705 474l-5 -9M602 523l4 14M834 554l-4 -7M903 423l8 -0M767 698l13 1M538 592l4 12M1196 466l8 2M910 411l-3 6M867 604l-1 8M653 629l14 11M1100 503l-2 -11M651 482l0 9M963 355l-2 -6M1180 473l-1 9M968 566l-2 -8M1236 429l8 -0M667 655l0 -15M820 579l-10 3M1156 434l1 -9M963 606l-1 -6M813 603l7 7M877 443l-3 4M653 510l3 -6M917 471l10 6M824 572l6 1M846 421l5 -4M986 691l-16 -2M1004 370l9 7M707 645l13 2M968 599l-5 7M1271 442l9 5M927 477l8 2M1017 419l6 -8M1023 661l4 -12M752 686l5 8M810 544l-7 5M837 636l6 5M1195 518l2 -16M522 566l-17 -1M896 427l3 -4M957 665l3 8M932 375l4 8M1169 509l-10 -9M916 320l-10 5M896 326l-3 -12M768 621l-3 9M761 686l-4 8M704 533l-6 3M758 441l9 2M856 394l9 6M954 499l-3 -8M936 449l6 -1M980 499l-8 8M772 429l-5 14M704 533l7 -8M1143 452l9 2M1006 510l-11 5M832 660l10 2M739 609l-9 4M1185 510l12 -8M518 545l-5 -12M1147 547l7 9M614 615l9 -10M892 302l7 6M698 528l6 5M862 597l-7 3M815 611l-5 6M932 343l11 0M1020 561l-6 9M697 510l3 -5M890 440l-4 0M988 478l-9 -12M1133 486l-7 -1M1041 473l7 1M740 568l-4 -7M697 510l2 5M985 381l5 5M748 482l-9 -1M1237 486l-1 13M826 646l10 -0M938 425l-9 -1M905 475l-6 -8M887 398l-2 -7M1050 581l16 12M1020 561l-13 2M963 595l5 4M622 593l9 -12M1013 443l-13 -5M1248 398l13 -2M887 369l12 0M943 570l-10 3M1292 523l5 -16M1060 422l1 -9M857 556l3 -7M1099 559l-18 8M915 506l7 10M655 606l-12 6M1244 444l2 12M968 566l-9 -5M771 610l10 8M899 417l-0 6M758 602l4 9M721 552l6 4M792 680l10 1M953 462l1 -7M1253 483l7 -1M1296 440l-2 6M887 398l4 -7M949 604l-5 -6M1171 434l-0 8M1304 443l-5 7M1047 661l-12 -10M917 639l-10 -4M1262 488l0 12M1006 510l16 -5M622 677l8 -10M874 402l-9 -2M1221 534l0 -16M642 525l9 -4M985 653l-11 -5M993 462l-9 -10M847 597l-8 2M1100 503l-15 12M656 538l-11 -2M855 408l-7 -3M901 611l8 -13M713 462l-5 6M726 574l13 6M683 472l-6 -7M914 397l8 5M711 525l-6 -2M941 360l-7 -5M763 643l-8 -7M1263 436l11 -5M641 565l7 12M850 484l-12 0M606 537l8 -12M995 429l-5 6M1272 463l-9 1M801 631l8 -8M914 397l-4 -9M523 624l-3 -13M840 412l6 -1M1048 482l-4 11M928 672l8 -9M712 478l10 -1M1031 550l8 -16M758 526l-10 3M659 547l7 -9M954 545l11 -9M759 534l8 5M952 525l-0 11M869 641l4 -9M795 587l5 5M926 638l8 13M1015 404l-4 11M748 529l4 8M774 513l-4 -11M1029 419l2 -7M711 490l6 -7M698 536l9 8M998 411l6 8M684 498l4 -4M990 507l-1 -9M815 395l-10 12M1046 553l5 11M1144 418l-0 -7M874 463l4 -10M874 623l6 -11M895 650l-11 -2M1161 441l10 1M1250 474l-6 9M860 608l1 12M551 629l20 8M1216 462l7 -5M807 420l-14 2M1000 657l-6 14M1169 476l5 -11M1186 488l-5 12M883 324l13 2M953 462l5 5M1029 419l-12 0M1142 445l-8 -9M917 460l4 4M949 604l-1 8M938 435l6 2M974 365l8 -8M1030 432l2 11M1276 454l-4 9M1248 540l12 8M741 746l-7 -8M829 420l3 -9M642 651l13 2M964 455l-1 -8M1064 568l17 -1M1098 492l-9 5M915 528l7 8M865 559l7 9M715 530l8 7M1004 644l4 -9M950 668l-14 -5M979 426l9 -0M949 405l5 -10M1126 547l-15 -14M950 668l-10 -12M622 593l-8 5M932 691l2 -12M890 491l6 -4M955 573l-8 4M770 491l-6 -7M802 576l8 6M967 701l-9 -11M1021 495l-5 -14M781 689l11 -9M917 657l2 12M1207 419l-6 5M880 472l-3 10M585 566l-7 -5M716 519l-1 11M607 510l12 7M942 336l-10 7M911 518l12 7M741 470l-8 -7M877 537l-8 5M622 593l-7 -4M950 668l-1 -12M830 714l-7 -16M1257 516l-9 8M724 733l3 16M645 536l2 11M825 555l7 11M802 384l11 2M687 512l4 -6M796 669l6 12M1238 456l-2 -11M1007 554l-8 -4M1197 562l-5 -15M1307 462l-8 4M1042 420l11 -2M840 538l-10 9M708 468l-2 -9M1019 641l13 -0M849 608l-3 6M1085 515l-12 2M819 543l11 4M1249 463l-3 -7M957 637l1 13M742 537l10 -0M823 698l4 -8M859 692l-6 14M712 687l1 11M631 637l-19 4M928 672l9 -1M963 659l-6 6M807 593l-6 -10M1203 542l19 3M954 455l-7 -1M756 470l13 1M1115 435l-8 -3M1019 641l-15 3M707 645l-9 8M1278 480l-11 -0M926 638l-9 1M1085 419l10 -5M1184 558l-7 9M845 474l-6 -5M604 597l7 8M1101 412l6 5M618 541l-0 11M1196 466l1 -7M1020 474l-4 7M970 525l12 -0M1089 453l6 -10M597 544l2 12M780 563l8 -9M860 608l6 4M719 625l11 8M977 441l-9 -9M1248 412l4 9M979 410l10 -5M949 405l-0 7M670 491l12 0M947 424l-2 7M967 382l8 -7M871 674l17 2M624 692l14 7M633 502l-7 4M982 643l-8 5M1036 691l-8 -10M1217 469l-1 -7M1171 434l-2 -8M779 750l-18 -8M944 598l2 -6M832 660l-6 12M963 507l2 9M858 580l8 -8M546 563l13 -10M1088 576l-7 -9M873 433l5 5M917 309l-8 6M1005 408l-1 11M871 478l-10 -2M1072 542l-6 -15M954 582l-7 -5M940 461l-5 -4M882 508l5 -7M892 422l-5 -7M821 720l-9 7M869 665l-8 8M1170 488l10 2M1071 407l6 3M947 424l-9 -5M950 668l-13 3M1082 426l3 -7M860 448l9 -0M811 413l4 7M653 570l-5 7M913 435l-5 -1M948 612l8 -9M985 559l4 -9M985 559l-0 12M1079 454l-10 1M951 472l7 -5M872 591l6 -7M797 488l2 -9M655 606l19 4M1113 557l13 -10M915 677l-3 11M706 566l11 -5M667 625l-10 -8M992 454l10 6M537 545l-1 -12M771 610l4 -9M639 547l6 -11M963 342l5 7M1178 430l8 7M1209 487l-3 11M903 386l7 -7M880 562l-15 -3M1216 437l4 13M636 495l7 4M1156 434l-8 -1M794 529l4 8M833 466l6 3M1145 487l-6 5M1048 482l8 0M843 398l11 3M925 360l5 7M931 432l-6 1M1171 453l-4 -6M1278 480l-4 6M721 552l-3 -9M691 506l2 6M919 382l4 -6M1197 439l7 -5M983 391l-6 10M738 651l-3 8M828 456l5 -7M899 433l1 -5M587 596l-1 -13M1130 443l-6 9M1216 437l4 -7M852 388l-7 3M953 436l-9 1M635 573l13 4M952 380l8 4M1032 641l-5 8M970 525l-5 -9M946 380l2 10M834 554l13 4M805 529l11 -6M1028 670l0 11M830 714l-9 6M1046 553l-15 -3M725 505l4 -6M788 454l-3 -10M1259 449l4 -13M675 474l2 -9M925 594l-6 6M853 513l-10 1M1029 619l9 9M628 614l-14 1M1259 449l1 7M768 690l5 -11M786 498l-8 7M856 394l12 -0M882 531l-2 -11M1223 479l-7 4M695 499l5 -5M760 755l1 -13M1004 589l2 -9M602 576l-4 6M863 634l4 -7M1281 510l-0 -12M925 433l-6 8M815 611l-2 -8M996 479l8 -10M740 693l-9 -5M838 380l-1 -9M709 624l2 -8M963 342l-4 -5M1096 453l12 -3M775 538l5 12M1223 486l-0 11M1111 533l0 -19M952 344l-9 -1M983 391l-7 -8M523 624l-13 -6M917 657l-10 -3M893 383l-8 8M920 420l-2 -8M907 491l-2 10M1130 450l6 4M830 383l6 12M893 613l-13 -1M908 644l12 5M1013 617l10 -5M520 588l18 4M1211 426l-10 -2M692 561l8 0M667 655l-6 10M823 592l10 1M802 433l-9 -11M927 322l-10 8M1129 560l-13 8M822 380l7 -7M618 541l-7 12M882 306l-2 9M832 588l1 5M728 664l11 4M847 597l8 -5M950 598l6 5M1056 482l1 11M880 414l3 5M873 609l7 3M1114 462l-6 -12M989 443l-7 -10M736 455l10 -2M901 611l4 9M878 654l-7 3M1266 451l-6 5M755 490l-7 2M703 603l9 1M724 733l10 5M989 498l-8 9M549 533l12 1M1133 486l6 6M861 476l-9 1M999 497l11 -5M893 383l-2 8M946 367l-6 9M889 468l-6 -7M1005 626l-3 -9M1131 495l8 -3M869 448l5 -1M719 489l3 7M871 443l-2 5M716 570l10 -6M739 580l-7 -11M908 307l9 2M1240 436l4 -7M824 572l3 11M806 609l-10 -3M1021 592l0 -8M1083 435l5 -5M847 597l-0 -7M687 512l-0 -8M772 483l-8 1M802 384l-6 -11M948 686l-3 -8M742 537l-12 -2M691 506l9 -1M921 616l-4 8M693 475l5 5M905 501l-0 8M827 405l-9 1M923 336l9 7M1250 474l-9 3M890 491l-6 -10M1089 453l7 -0M793 631l8 -0M749 704l8 -10M800 455l-8 6M815 638l-7 -5M797 402l-11 1M740 693l17 1M706 586l15 6M875 696l11 14M860 388l-4 -9M882 591l-4 -7M1130 450l-6 2M700 633l1 -11M761 686l-9 -0M1153 533l-18 7M936 325l-8 4M965 536l-4 -9M958 467l12 1M695 700l9 -8M844 584l-7 -9M683 472l9 -9M684 498l-2 -7M827 583l5 5M956 448l-3 -12M894 339l-8 -8M1077 625l-0 20M1158 492l-7 6M917 309l13 0M698 593l5 10M955 594l7 6M840 361l7 11M871 314l3 10M883 324l-3 -9M796 545l-8 9M908 587l11 -1M923 336l-8 3M916 320l1 10M846 411l2 -6M606 537l9 -4M1135 540l3 13M762 503l8 -1M874 623l-7 4M883 438l5 -5M721 463l-8 -1M596 564l3 -8M894 443l1 -4M1238 556l10 -16M846 504l7 9M949 656l14 3M1054 430l-5 -6M855 628l-10 6M908 448l4 5M908 307l6 -7M879 336l9 10M1209 487l-4 -12M944 527l8 -2M622 593l1 12M867 714l4 18M1013 617l-2 -13M1164 410l2 9M1073 416l4 -6M840 412l-5 -10M983 391l7 -5M706 510l-7 5M1151 479l10 2M926 629l-9 -5M919 600l7 3M967 585l-0 5M861 565l4 -6M1214 476l-3 -8M894 521l9 -4M735 487l-10 -2M1293 421l-9 -1M758 542l9 8M856 636l2 8M858 434l-4 7M927 382l2 13M942 634l3 9M832 479l6 5M774 513l7 4M892 643l-12 -3M688 529l-6 9M850 541l-10 -3M533 613l-6 -14M928 329l-11 1M689 585l-5 11M871 490l6 -8M903 573l10 -8M899 308l-1 -12M758 542l9 -3M819 365l7 -6M671 518l10 5M834 427l-5 -7M692 538l6 -2M607 510l7 15M1307 462l-3 -19M840 412l-1 7M529 555l6 9M770 460l13 3M1109 468l4 8M886 555l-9 -1M1257 474l3 8M769 657l-1 11M1086 487l11 -3M807 378l-5 6M826 565l4 8M678 497l4 -6M689 552l-8 2M941 620l8 1M992 417l-4 9M946 367l3 6M790 412l7 -10M1259 449l-5 -7M917 471l-6 1M838 629l-1 7M858 434l-8 2M920 390l7 -8M903 446l4 -7M951 472l-7 -5M761 580l6 5M929 351l-6 -4M722 684l9 4M910 710l-13 4M764 562l-8 -2M1142 424l2 -6M609 667l13 10M882 531l13 6M936 449l-1 8M1013 586l8 -2M1189 431l1 11M812 369l-9 -1M1169 509l-3 -10M861 440l-6 7M949 360l12 3M807 420l4 11M758 602l9 1M780 438l-13 5M748 509l-6 3M775 538l-8 -7M931 521l-8 4M1057 460l4 -10M884 620l-4 8M1063 677l10 -10M624 692l-11 6M784 653l-6 11M951 588l-5 4M933 573l3 -13M855 628l6 -8M812 562l-1 -8M858 507l3 -7M814 596l-1 7M863 323l-8 6M865 458l-9 2M1267 480l-10 -6M932 691l11 14M798 537l5 12M520 588l9 -14M790 694l2 -14M771 634l7 11M903 446l-5 -0M1321 477l-1 13M1223 497l7 -1M690 649l8 -8M871 674l-8 10M704 692l-10 -7M1246 456l-8 -0M897 403l3 -5M680 505l-7 6M947 307l7 -3M656 526l-11 10M703 714l16 -7M959 377l-7 3M584 633l-3 20M788 660l-1 10M967 320l7 -1M834 427l-7 2M924 715l0 -11M769 657l1 -8M725 485l4 7M1172 420l6 10M892 690l-6 7M1043 520l-12 4M1040 465l4 -8M692 538l-4 -9M883 419l4 -4M840 462l6 -2M689 571l3 7M1228 399l2 14M767 698l1 -8M1144 461l-1 -9M982 629l-0 14M1293 476l-6 5M905 452l7 1M742 512l2 7M895 352l7 3M945 585l-5 9M781 582l-9 10M684 479l-9 -5M949 373l10 4M1143 498l-4 -6M969 607l-9 5M1080 443l-1 11M1233 463l5 6M952 380l-4 10M814 659l-2 -7M1105 456l-1 8M750 501l-10 -5M834 554l5 6M769 730l6 9M979 593l-4 7M759 624l6 6M1238 469l-9 -0M1300 491l-12 1M1089 453l-3 9M614 615l4 12M873 609l-7 3M745 435l4 11M831 365l-12 -0M1134 518l6 -14M575 666l12 -3M890 427l3 5M716 514l-5 4M903 423l-4 0M855 592l-3 -10M911 292l-11 -6M1251 428l-4 9M1308 503l21 -5M972 593l3 7M973 582l5 4M840 361l10 -7M935 490l-2 9M920 390l-6 7M711 518l-6 5M1032 488l9 -4M1018 632l4 -7M749 754l2 14M697 678l-8 -10M852 562l-4 8M754 551l-8 -9M806 609l7 -6M1299 466l7 7M746 589l10 3M832 605l7 -6M793 631l-8 5M935 490l7 -1M735 588l-14 4M716 519l-5 -1M735 659l-13 -0M651 673l10 -8M926 629l-9 10M1054 430l6 -8M1277 408l3 7M1021 455l-9 4M887 398l-10 -2M854 613l-8 1M748 482l9 -5M549 533l-12 12M591 645l-10 8M878 654l8 3M858 507l10 6M1257 516l-15 -3M1172 420l10 -8M1180 473l4 -11M1023 425l-13 -1M922 516l5 -9M1041 484l-3 11M1069 616l-0 19M931 300l-8 -2M602 636l-18 -3M948 686l10 4M878 498l-7 -2M623 535l-9 -10M989 405l9 -3M884 403l-10 -1M1011 519l11 5M861 620l-8 2M602 576l1 -9M963 436l6 6M932 531l12 -4M809 516l-4 13M947 424l2 -12M936 588l4 6M609 667l-5 12M1221 534l12 3M1010 690l-7 -4M822 634l-7 4M858 580l5 9M943 503l8 -12M612 568l10 5M1267 458l-7 -2M862 597l1 -8M972 614l4 8M953 517l12 -1M983 349l8 10M883 419l-7 2M1237 413l11 -1M1125 533l-2 -15M929 566l-0 -10M1061 413l-12 -3M660 516l1 -6M886 581l8 -11M1139 469l-1 -7M776 496l-6 6M837 523l-4 -10M663 560l5 -11M963 595l4 -5M907 439l5 4M871 490l-7 -8M738 651l8 -9M1005 478l-9 1M751 768l11 -1M655 606l-9 -5M1048 482l9 -6M806 396l-12 -3M826 672l-4 -8M602 620l-5 -13M807 601l-11 5M726 543l4 -8M905 403l-5 -5M1000 657l-7 -5M852 470l-7 4M1287 444l9 -4M832 660l-10 4M788 454l4 7M1051 564l-12 3M897 545l11 13M736 561l-1 -8M988 597l10 5M974 337l-1 -9M883 449l5 3M918 357l-8 -0M915 427l5 -7M781 477l2 -14M611 553l2 7M806 461l-6 -6M585 566l11 -2M960 612l-2 7M1199 481l-11 1M732 479l-7 6M805 493l4 -10M871 314l-4 -11M998 411l0 -9M741 772l-6 -14M706 566l1 -8M816 523l12 -2M740 496l8 -4M1042 412l-11 0M749 704l-15 7M915 677l-11 1M827 583l3 -10M982 370l3 -6M811 440l9 -4M1157 425l6 7M1238 556l-5 -19M840 462l-7 4M852 477l12 5M1160 455l7 -8M681 645l-3 8M1074 556l13 -3M968 599l-6 1M642 525l-4 10M748 482l1 -7M812 694l4 -10M781 679l6 -9M713 550l-6 -6M950 598l5 -4M614 525l5 -8M811 554l9 7M739 445l10 1M1004 644l3 8M1315 531l-20 8M740 496l-3 7M623 547l5 -5M891 510l-4 -9M826 613l10 0M836 646l7 -5M694 608l-1 -8M982 357l3 7M614 598l9 7M1125 533l1 14M880 472l4 9M949 360l8 10M743 731l18 11M1075 463l8 5M915 339l2 -9M761 716l-7 10M1251 505l-9 8M959 561l1 7M711 518l-0 7M721 463l-2 7M815 395l-9 1M825 555l1 10M893 729l-17 -7M815 611l-9 -2M859 692l6 11M739 681l0 -13M778 400l3 11M793 631l-4 12M667 625l7 -15M909 315l-10 -7M1218 421l-11 -2M1244 444l10 -2M720 667l11 9M938 579l-7 4M878 599l-5 10M686 615l-4 -11M843 398l-8 4M1284 429l0 -9M841 593l-9 -5M780 699l-12 -9M551 629l8 -11M921 556l-13 2M984 516l-2 9M921 556l-8 9M1077 645l-7 9M1238 456l-10 -5M820 427l9 -7M1005 452l-9 -5M936 511l-9 -4M636 495l5 -7M657 556l-10 -9M961 363l2 -8M830 714l5 12M1022 625l1 -13M1142 481l-3 11M936 588l9 -3M1087 553l-6 14M638 626l15 3M805 647l7 5M697 510l9 0M602 620l-9 6M894 443l-1 7M584 553l9 -2M828 456l5 10M740 693l12 -7M667 640l11 13M964 680l12 1M672 501l-8 -6M684 479l8 3M906 371l8 -6M909 598l-9 -7M1218 421l2 9M1032 641l14 -1M956 603l7 3M876 421l1 8M938 471l-11 6M856 394l4 11M1009 534l-5 9M830 714l12 -13M1036 679l12 10M727 512l4 -5M1271 442l-8 -6M902 583l-16 -2M1281 498l7 -6M948 686l-9 -0M1200 414l-10 2M1098 492l6 -5M681 634l4 -9M984 612l-8 -6M624 565l-2 8M1186 488l-6 2M991 578l-4 6M602 620l12 -5M917 309l6 -11M1082 492l-1 8M1074 448l-2 -8M995 544l-8 -4M831 652l5 -6M1036 679l-8 2M914 609l3 15M933 335l3 -10M716 455l-3 7M1116 568l14 9M1075 463l-3 7M983 488l-4 -7M786 709l13 -8M827 472l6 -6M903 423l4 -6M1080 443l-3 -11M529 574l6 -10M755 490l-7 -8M1013 443l-5 -9M1238 469l0 -13M857 556l8 3M715 579l-9 7M781 618l7 2M832 532l-9 -3M847 577l-10 -2M786 403l-5 8M774 513l4 -8M926 638l-6 11M996 479l-0 8M662 574l-0 14M820 427l7 2M832 566l5 9M1244 444l-8 1M748 509l7 10M1263 464l-3 -8M912 464l-1 8M762 458l-8 -4M1211 468l-6 7M1039 430l-2 8M827 405l-4 -7M1042 400l-13 -3M819 543l-9 1M1284 543l22 -1M612 568l-9 -1M962 575l12 -2M814 673l2 11M991 377l1 -10M1024 462l4 8M1278 480l9 1M880 472l-5 -4M936 441l-7 4M607 510l-5 13M1262 530l-2 18M1232 522l16 2M724 733l-7 11M602 636l-11 9M869 542l0 8M905 475l4 3M862 597l10 -6M1013 617l-11 -0M1018 532l4 -8M797 729l15 -2M1074 448l5 6M897 698l13 12M982 525l-7 -9M719 470l-7 8M735 623l-5 10M675 541l7 -3M1032 607l8 9M624 692l-20 -1M872 452l-3 -4M678 621l-11 4M863 424l-10 -1M993 462l9 -2M1293 421l-2 -7M936 560l10 -8M802 566l3 -6M1007 563l-1 9M1158 474l3 -9M826 672l-12 1M971 394l-1 7M593 589l-7 -6M1221 534l-13 -4M785 509l7 10M739 445l-11 4M979 426l-11 6M949 621l9 -2M1195 422l-6 9M883 449l-5 4M760 755l2 12M964 333l-5 4M780 563l-8 -3M1046 501l-12 10M1258 417l-3 -8M1232 504l-14 3M871 314l-12 1M1091 404l4 10M674 556l7 -2M594 674l-14 4M1081 534l6 19M807 601l6 2M1087 442l2 11M993 640l11 4M1097 472l0 12M855 570l3 10M1102 427l-8 -3M1081 659l-8 8M800 592l1 -9M755 509l1 -11M714 722l5 -15M769 657l-7 -5M620 581l2 12M1270 425l4 -7M1000 535l4 8M691 631l-10 3M832 660l-10 -6M644 507l-8 3M865 559l12 -5M909 598l5 11M955 330l6 -4M1046 446l-9 -8M1030 432l-7 -7M894 521l-2 8M904 347l7 3M832 436l-12 0M1233 463l-10 -6M681 645l-0 -11M936 441l6 7M748 509l-4 10M729 499l2 8M873 632l1 -9M897 403l-6 1M826 613l4 6M1280 415l-10 -3M787 576l1 11M866 438l3 10M1223 497l-9 2M1253 483l-3 -9M783 526l-2 -9M726 543l-3 -6M1109 468l-5 -4M871 685l-8 -1M939 604l-7 8M756 470l-6 -8M1315 531l15 -3M1128 432l-7 1M686 615l-1 10M683 564l-2 -10M684 596l9 4M1055 500l1 20M623 535l-8 -2M905 409l0 -6M984 516l11 -1M797 729l-16 -1M618 541l-12 4M1196 466l-0 8M995 566l11 6M1066 527l-10 -7M859 353l-3 -14M686 545l-4 -7M823 529l5 -8M1128 469l10 -7M783 593l-11 -1M1280 415l4 5M1032 580l-8 -4M630 549l10 6M681 523l-1 8M989 443l7 4M703 499l3 5M863 589l-8 3M900 639l-5 -14M1053 444l-8 -5M619 517l7 -11M780 550l-13 -0M739 681l9 -6M864 332l-8 7M655 653l6 12M933 406l-9 3M1046 553l11 -7M935 412l5 -8M599 654l-12 9M803 720l18 0M667 625l0 15M692 578l11 -5M719 707l4 -13M969 671l-9 2M798 412l7 -5M1034 511l9 9M832 605l4 8M1182 421l-0 -9M942 336l13 -6M945 431l-1 6M1014 386l-8 -2M679 590l-3 8M1075 493l-2 10M1052 678l-5 -17M667 640l14 -6M1059 650l-2 -16M667 625l14 9M1209 487l10 4M1063 441l4 -6M750 665l-2 10M973 629l-14 -0M556 574l-9 9M689 552l7 -9M1179 439l-8 3M999 525l12 -6M953 679l-8 -1M975 658l10 -5M1185 455l12 4M1082 480l-10 -1M1265 471l2 9M785 509l11 -10M1059 650l11 4M812 369l7 -4M1278 480l4 9M989 396l1 -10M913 493l2 13M794 443l-6 11M658 682l15 4M855 628l-8 -2M967 585l-0 -5M571 637l13 -4M787 576l5 -11M1300 477l6 -4M894 339l2 -13M628 614l-5 -9M693 475l-1 7M820 561l6 4M932 612l7 -1M771 634l-3 -13M575 666l6 -13M927 382l-4 -6M772 483l4 13M1119 471l-10 -3M1209 447l6 8M775 538l-8 12M688 529l10 7M866 470l-7 -3M1061 469l-4 7M900 661l-14 -4M998 602l-9 2M878 453l0 -5M988 478l-5 10M896 560l12 -2M720 667l-10 -1M1085 596l4 19M840 462l-1 7M775 538l-8 1M584 633l-13 16M822 415l-7 5M968 432l3 -13M1113 557l16 3M789 475l10 4M912 464l-4 -8M1081 500l8 -3M943 570l6 -2M915 506l-4 12M771 634l-1 15M895 352l9 -5M884 683l-13 -9M1304 443l6 -10M1104 444l7 -0M1153 533l-16 -4M1038 628l19 6M1074 556l7 11M975 658l-1 -10M1271 442l-12 7M872 525l5 -12M924 409l11 3M1228 443l-8 7M831 365l9 -4M938 471l-3 8M1004 589l9 -3M844 436l-3 8M859 353l-9 1M903 573l-1 10M877 396l-3 6M1029 619l3 -12M790 721l-14 -4M862 597l5 7M719 611l8 11M926 638l-0 -9M1251 505l-5 -6M884 481l-4 7M1000 657l3 13M1115 413l12 0M885 391l-4 -6M1166 458l1 11M829 442l3 -6M1073 416l-2 -9M1104 444l-5 -10M1087 442l6 -6M689 488l3 -6M921 556l8 0M901 530l5 8M750 501l-13 2M1221 534l1 11M952 557l-3 11M842 453l-1 -9M1055 500l-11 -7M797 488l-1 11M990 507l5 8M993 462l11 7M908 307l-10 -11M915 427l-7 2M1061 662l2 15M806 475l3 8M925 594l6 -11M963 659l2 -14M860 608l-5 -8M913 417l-2 6M513 576l16 -2M667 473l-7 7M886 710l-10 12M1064 508l-9 -8M888 433l-2 7M764 484l5 -13M1038 628l-10 4M775 421l7 8M815 476l-9 -1M837 575l-7 -2M739 668l9 7M913 435l6 6M902 583l7 -4M863 526l-8 -5M963 436l-10 0M907 491l-1 -6M1199 481l10 6M1250 490l-4 9M1045 431l4 -7M907 364l7 1M969 461l-5 -6M845 634l11 2M987 540l2 10M628 614l7 -8M982 370l9 7M596 564l9 -6M866 470l5 8M880 562l-8 6M1262 530l-14 10M690 649l-9 -4M850 484l-5 -10M840 618l7 8M991 359l-6 5M855 521l13 -8M891 510l12 7M734 738l-1 -12M729 470l4 -7M1217 469l11 7M880 350l-9 -0M886 555l10 5M827 472l12 -3M1082 492l-6 -6M1172 420l-3 6M817 456l-7 -6M853 657l8 3M826 613l-2 11M684 498l3 6M1258 417l-6 4M984 516l-9 -0M1038 597l11 -5M1089 669l-16 -2M1166 541l-19 6M671 518l2 -7M828 489l10 -5M998 581l1 -8M874 439l-3 4M886 581l5 8M767 517l-5 -14M807 593l-7 -1M970 525l6 8M608 585l7 4M1238 556l-16 -11M942 411l-4 8M1158 474l-7 5M963 473l7 -5M656 538l-9 9M882 546l0 -15M856 339l8 6M790 694l-4 15M731 676l8 5M959 629l-1 -10M856 394l-2 7M1002 617l-4 -15M1069 455l-2 6M698 593l-14 3M877 396l4 -11M510 601l0 17M901 688l-9 2M571 574l7 -13M1196 466l-12 -4M805 493l2 14M1061 662l9 -8M947 307l-8 4M964 680l-6 10M817 489l3 8M1308 503l-0 -18M1144 418l9 -0M762 458l7 13M1249 463l1 11M713 550l5 -7M982 370l-7 5M743 719l-9 -8M618 503l9 -6M717 561l-1 9M1054 405l-1 -13M810 361l2 8M1271 501l-9 -1M767 531l-0 8M1175 495l-5 -7M911 350l-9 5M806 475l9 -10M979 466l-4 -12M1169 509l6 -14M932 375l-5 7M858 434l3 6M653 510l8 -0M847 445l8 2M686 545l-11 -4M1013 617l-8 9M963 659l11 -11M698 593l-9 -8M1232 504l4 -5M871 350l-12 3M1262 424l-6 10M809 516l13 -3M824 624l7 4M983 416l6 -11M555 601l9 -10M739 636l-9 -3M797 655l8 -8M951 472l5 6M1020 561l9 2M847 684l-10 -10M675 526l5 5M903 423l-4 -6M1056 520l17 -3M911 663l-4 -9M878 654l4 13M1080 443l3 -8M729 499l8 4M896 560l7 13M612 568l2 7M1281 498l12 -1M1225 424l-5 6M827 472l-12 -7M733 463l-7 -6M1142 424l-6 -7M604 691l9 7M1071 425l2 -9M985 591l11 3M953 679l5 11M1291 455l9 2M968 566l-8 2M917 460l-9 -4M742 512l-10 3M836 494l2 -10M692 561l4 -7M875 696l11 1M1142 445l-6 9M997 679l-3 -8M703 603l-9 5M918 696l14 -5M1259 449l-6 2M718 543l5 -6M911 472l-2 6M715 579l7 5M787 576l-5 -5M689 552l3 9M928 439l-9 2M693 512l6 3M972 614l12 -2M807 593l3 -11M1265 471l12 -4M952 344l9 5M1272 545l-12 3M938 471l6 -4M624 565l9 -1M631 637l-6 11M721 463l-5 -8M727 512l-9 -6M924 704l12 11M1188 482l-9 0M822 634l4 12M687 659l-11 11M875 468l7 -2M594 674l10 5M814 659l-10 11M1284 420l1 -10M765 572l2 13M527 599l-7 12M1250 474l-12 -5M1005 478l-1 -9M860 608l-6 5M925 360l-11 5M680 505l4 -7M1222 440l5 -7M767 698l9 19M923 336l-0 11M1013 617l5 15M1232 522l10 -9M900 591l-9 -2M646 589l2 -12M990 507l-6 9M855 408l-4 9M549 533l25 -4M762 652l8 -3M844 584l-8 -1M662 574l-14 3M602 636l-3 18M1048 482l-7 2M767 550l5 10M878 498l9 3M954 499l-11 4M665 523l6 -5M837 674l5 -12M677 698l-4 -12M724 600l-5 11M968 499l3 -10M822 380l-9 6M755 636l-8 -5M976 347l-8 2M746 576l-7 4M1044 493l7 -4M722 529l8 6M1019 641l-11 -6M861 565l11 3M899 433l5 3M697 522l-8 -1M798 467l1 12M887 410l4 -6M807 601l-1 8M842 701l11 5M903 573l-9 -3M1305 519l-8 -12M926 468l-2 -11M653 570l-5 -12M697 667l13 -1M849 651l9 -7M1263 410l-8 -1M814 629l-5 -6M1142 424l-6 5M844 584l3 -7M1281 510l16 -3M905 501l-7 3M1091 528l2 11M697 522l8 1M859 467l-3 -7M818 406l-3 -11M712 687l11 7M781 618l5 9M949 604l7 -1M982 433l-3 -7M775 601l10 2M837 523l-9 -2M614 525l1 8M850 429l-8 -2M575 590l2 -10M1087 504l2 -7M639 547l8 0M1029 619l-1 13M1038 597l17 5M982 604l-6 2M1089 647l10 12M910 710l-2 -10M1022 524l9 0M1057 460l10 1M870 407l-5 -7M1253 483l4 -9M1143 498l2 -11M868 394l6 -9M834 554l-2 12M991 624l7 8M845 603l-8 3M870 338l1 12M628 542l2 -11M784 653l-14 -4M838 502l-5 11M638 595l8 6M720 676l2 8M1263 410l3 8M722 637l-2 10M638 595l-8 -2M663 502l-7 2M1197 502l-16 -2M1082 426l6 4M657 598l-11 3M924 545l-3 11M838 629l9 -3M1032 405l-9 6M1027 535l-5 -11M832 479l7 -2M936 449l-0 -8M847 577l1 -7M1274 431l10 5M663 502l3 11M1089 647l-8 12M510 601l-5 -10M897 698l-11 12M571 574l6 6M1011 604l-9 13M837 523l6 -9M1077 625l-8 10M769 730l-8 -14M701 547l-5 -4M765 572l10 5M1244 483l-3 -6M1072 605l17 10M1278 480l-6 -5M830 714l13 6M1217 469l12 -0M571 637l-12 -19M687 512l-7 -1M909 550l-1 8M860 490l-10 -6M755 490l1 8M781 689l-8 -10M943 570l2 -9M1057 460l-5 -8M840 618l6 -4M912 453l-4 3M825 555l5 -8M713 501l-7 3M1156 449l-4 5M673 511l7 0M679 590l-13 8M1007 563l-13 -5M804 661l1 -14M576 623l17 3M713 536l-6 8M1287 397l21 8M920 429l-1 12M801 689l-2 12M767 417l5 -7M741 772l21 -5M860 373l8 7M888 452l-0 -6M871 350l-9 13M555 601l4 17M1193 452l4 7M1271 501l10 -3M923 336l-6 -6M890 491l-10 -3M1007 554l7 -3M1034 423l8 -3M797 655l-1 14M839 546l-9 1M834 554l5 -8M851 642l-8 -1M821 720l7 15M697 522l-4 -10M984 668l6 -8M921 616l5 13M1294 462l5 4M948 390l6 5M581 653l-15 5M1061 469l6 -8M850 541l-11 5M927 322l1 7M974 573l3 -8M1263 410l7 2M689 585l9 0M746 453l3 -7M996 447l4 -9M1251 428l5 6M973 629l3 -7M758 542l-4 9M826 613l-8 8M915 477l-6 1M961 363l-4 7M611 605l3 10M738 651l12 5M934 355l-4 12M888 676l-6 -9M1204 434l12 3M904 436l4 -2M701 622l2 -10M775 421l9 -2M1082 492l7 5M1097 472l7 -8M727 622l3 -9M969 671l-6 -12M1330 528l9 -16M926 468l-5 -4M1269 517l-7 -17M758 441l-9 5M1161 465l5 -7M828 456l-5 8M887 369l-8 -9M1262 424l4 -6M1291 455l3 -9M1018 682l10 -1M887 410l-0 5M618 503l8 3M685 679l1 13M1053 418l8 -5M892 436l1 -4M877 443l-6 0M731 701l9 -8M839 477l-1 7M684 464l-1 8M631 581l10 -2M728 449l-2 8M858 507l-3 -10M1088 576l-16 7M1151 498l-8 -0M814 576l-4 6M895 439l-5 1M962 575l-8 7M798 616l4 6M638 535l7 1M880 520l12 9M983 416l-4 -6M1166 419l-6 -4M755 519l3 7M620 561l-7 -1M1131 478l-8 -0M1032 580l7 -13M612 568l1 -8M894 339l1 13M1020 561l3 -12M995 566l-1 -8M886 581l-7 -6M896 326l10 -1M946 353l6 -9M908 429l-8 -1M807 640l1 -7M856 460l-10 -0M904 347l-2 8M985 591l7 -4M956 448l7 -12M848 672l7 -6M827 472l-4 -8M892 302l-10 4M780 699l-4 18M828 504l5 9M1004 644l12 8M597 544l-1 -8M572 609l-13 9M919 453l-7 -0M917 471l9 -3M943 543l11 2M840 412l8 -7M828 456l-11 -0M1157 425l-9 8M953 462l-13 -1M912 688l-4 12M1004 370l-6 -9M1032 405l10 -5M740 568l7 -8M1281 498l1 -9M956 603l6 -3M590 559l9 -3M643 612l-8 -6M1299 450l1 7M689 488l-1 6M831 365l-2 8M722 637l8 -4M869 420l2 -6M979 593l6 -2M1186 488l8 -0M998 382l8 2M747 631l-1 11M955 573l-1 9M700 465l-2 -6M1018 632l-13 -6M969 412l-12 -2M1248 524l-6 -11M798 598l-6 -3M828 735l7 -9M934 317l8 1M837 674l-11 -2M1142 438l-0 7M1276 454l4 -7M836 395l-1 7M781 618l-13 3M993 652l11 -8M1244 444l9 7M873 433l1 6M762 503l-6 -5M1300 477l8 8M855 570l-3 12M719 470l-11 -2M926 489l7 10M809 516l7 7M884 683l2 14M533 613l3 13M776 467l-7 4M1020 438l12 5M960 490l-4 -12M950 484l-8 5M783 526l-11 -2M962 575l6 -9M735 487l5 9M1134 518l-15 -13M682 538l-2 -7M805 529l-11 0M814 629l8 5M842 427l-3 -8M839 560l-7 6M713 536l-9 -3M871 490l-0 6M1116 450l-2 12M1300 477l-1 -11M1071 407l7 -11M706 504l2 -8M942 336l3 -10M953 507l-10 -4M1061 469l-4 -9M915 506l-10 -5M807 601l7 -5M715 654l7 5M915 483l5 11M1182 450l-4 9M1121 459l9 -0M955 573l-6 -5M1293 497l4 10M1214 476l9 3M898 379l5 7M697 522l-9 7M1151 498l-6 -11M860 405l10 2M922 516l-11 2M1055 602l11 -9M872 591l6 8M1116 423l9 -3M783 540l15 -3M869 420l-6 4M678 497l6 1M812 562l8 -1M597 607l-15 -3M1046 501l-13 -2M1205 457l4 -10M1142 481l3 6M860 373l-4 6M831 652l-5 -6M804 670l-2 11M822 654l-5 -9M989 396l-6 -5M879 378l1 -8M710 676l-6 7M962 575l-3 11M513 576l-8 15M835 352l-9 7M989 443l-5 9M697 510l-6 -4M942 411l7 1M899 599l-6 14M957 318l4 8M880 562l-1 13M984 612l-8 10M855 666l6 7M810 582l-2 -10M886 572l-6 -10M628 614l-10 13M983 391l2 -10M822 380l8 3M804 661l-8 8M1101 520l-16 -5M921 616l11 -4M985 653l8 -1M1102 476l2 11M1154 461l-2 -7M1105 580l-7 -10M1228 399l10 7M924 545l5 11M1073 503l12 12M996 479l8 8M1295 485l13 0M911 292l6 -5M1032 405l-1 7M964 455l-10 0M989 550l-12 7M1087 504l-2 11M1003 428l-3 10M712 604l9 -12M989 396l9 6M982 525l9 -2M814 673l8 -9M764 432l-6 9M1281 510l12 -13M968 499l-5 8M618 503l15 -15M1148 448l4 6M1119 471l4 7M842 662l13 4M869 550l8 4M906 469l-1 6M698 536l-2 7M976 622l-9 -1M933 625l-12 -9M1136 417l-9 -4M960 568l-11 -0M840 538l-1 8M869 641l4 7M687 659l3 -10M968 566l6 7M724 600l8 -0M984 612l5 -8M1067 461l5 9M1057 460l-3 10M1196 466l-9 4M898 446l3 -6M827 583l-11 6M1261 396l-6 13M1128 432l8 -3M817 645l-2 -7M898 411l-7 -7M913 493l-8 8M913 417l5 -5M973 328l-12 -2M917 447l-5 6M812 694l2 15M663 487l-3 -7M933 598l7 -4M915 528l-4 -10M818 406l5 -8M874 463l-9 -5M790 721l7 8M1018 532l-9 2M524 531l-6 14M1329 517l-14 -5M1088 576l-3 20M1021 395l-14 1M871 490l0 -12M622 573l13 -0M1007 554l-0 9M597 544l-4 7M678 621l7 4M1315 531l-9 11M850 541l12 -6M1253 451l7 5M849 651l-7 11M871 490l-11 -0M924 457l6 -4M978 579l7 -8M724 600l-12 4M907 364l-1 7M878 498l4 10M1119 483l-7 5M846 466l-1 8M790 613l-10 -4M752 648l-6 -6M939 311l3 7M775 601l8 -8M1013 617l7 -12M1157 425l12 1M663 502l1 -7M945 399l9 -4M706 510l0 -6M956 448l-9 6M1113 557l-14 2M700 561l-4 -7M1188 482l8 -8M873 609l11 -4M767 417l8 4M1267 480l7 6M882 546l13 -9M1046 501l-2 -8M762 652l-12 4M694 608l-2 12M705 474l-12 1M828 489l-8 8M933 335l-1 8M648 577l-7 2M840 618l-2 11M1085 419l3 -6M1061 469l-7 1M551 629l9 20M710 676l10 -0M1003 686l-14 -3M801 631l-6 -8M975 375l-1 -10M798 467l2 -12M613 560l5 -8M963 659l-5 -9M982 433l8 2M878 448l4 -4M715 654l-8 -9M692 620l11 -8M754 551l2 9M1136 429l-3 -6M1052 536l5 10M1299 450l-5 -4M1006 510l-7 -13M729 647l6 12M940 461l4 6M1244 483l-9 -4M691 631l-2 8M788 454l12 1M984 668l-8 13M1329 498l1 -12M894 521l-14 -1M1250 490l3 7M1023 425l6 -6M533 613l-10 11M868 394l-3 6M920 420l-0 9M1094 424l5 10M1035 651l-8 -2M1087 476l10 -4M681 645l8 -6M872 371l7 7M903 446l5 2M880 640l-0 -12M988 597l-3 -6M1054 470l-6 4M551 629l-5 -10M837 438l5 -11M715 654l-11 7M683 564l9 -3M731 676l-9 8M900 639l-5 11M1056 482l10 3M908 429l5 6M1303 423l-10 -2M795 587l6 -4M1152 512l-12 -8M798 467l-9 8M900 333l-4 -7M830 547l-6 -10M547 583l-18 -9M915 528l-9 10M806 475l-7 4M522 566l13 -2M1257 516l5 -16M843 720l-8 6M828 489l8 5M1195 518l-18 10M780 563l0 -13M995 544l5 -9M880 350l-1 -14M945 399l3 -9M929 424l9 -5M604 597l10 1M853 513l15 -0M1038 451l6 6M908 644l-1 10M687 659l-9 -6M665 523l-3 10M1125 420l-4 13M1052 678l9 -16M801 689l11 5M1180 490l1 10M1052 536l4 -16M868 380l-12 -1M843 720l-1 -19M604 597l11 -8M901 530l14 -2M812 694l15 -4M978 586l9 -2M859 692l-17 9M995 429l5 9M914 397l-9 6M1303 423l-4 -7M972 593l6 -7M846 466l-7 3M931 521l-4 -14M911 292l-3 15M651 482l12 5M1113 557l-15 13M1018 532l-4 10M968 499l-14 -0M828 391l8 4M1189 431l8 8M586 616l7 10M1232 522l-11 12M1211 468l-7 -0M820 436l7 -7M894 462l-5 6M828 735l-16 -8M933 335l-10 1M689 488l-7 3M1174 465l-7 4M735 758l-8 -9M1014 386l-7 10M1013 586l-8 11M857 734l-3 -12M866 438l8 1M683 564l-13 0M843 398l5 7M1227 433l-7 -3M740 496l-11 -4M630 549l-7 -2M743 552l4 8M883 429l5 4M1262 424l8 1M880 640l4 8M845 391l9 10M778 664l9 6M955 388l9 1M878 498l-9 7M778 645l7 -9M1013 469l7 5M1287 444l-3 -8M817 489l-8 -6M995 515l-4 8M746 576l-0 13M799 508l-7 11M827 690l15 1M963 417l8 2M806 461l-0 14M855 570l-3 -8M770 491l-8 12M1089 647l-12 -2M908 448l9 -1M1129 560l1 17M1004 370l-13 7M976 533l6 -8M786 403l1 -13M1219 413l9 -14M755 519l-11 -0M945 561l7 -4M1038 597l-6 10M913 565l-4 14M1032 443l-6 4M982 370l3 11M753 572l-13 -4M841 566l7 4M1295 539l11 3M996 693l7 -7M833 449l8 -5M955 573l7 2M1003 670l-9 1M653 629l4 -12M1038 451l8 -5M856 394l4 -6M731 701l-8 -7M866 453l3 -5M960 404l-11 1M1142 424l6 9M1102 476l-5 8M1251 505l11 -5M611 605l3 -7M865 559l4 -9M709 624l-8 -2M1287 444l-9 -3M1248 398l0 14M906 538l8 1M975 375l10 6M1038 668l-10 2M717 744l10 5M920 494l2 -11M1182 450l-7 -2M1249 463l5 4M755 636l-9 6M691 631l10 -9M802 566l6 6M1011 604l-6 -7M945 585l2 -8M719 611l-7 -7M1224 463l5 6M815 465l8 -1M861 660l10 -3M1146 565l-8 -12M1119 505l-8 9M653 570l-12 -5M978 579l0 7M1179 439l-4 9M713 536l5 7M597 544l9 1M761 742l-7 -16M889 361l-2 8M1236 429l-4 9M735 588l4 -8M769 730l12 -2M984 516l7 7M764 562l8 -2M949 405l-9 -1M1178 459l-3 -11M939 604l5 -6M969 607l-1 -8M790 412l3 10M858 507l11 -2M880 562l-3 -8M920 649l-3 -10M845 634l-8 2M739 636l8 -5M677 484l-2 -10M836 613l10 1M1219 413l-1 8M899 451l-1 -5M1211 426l7 -5M1159 500l7 -1M908 434l-8 -6M940 496l3 7M936 560l-7 -4M956 448l7 -1M985 571l-8 -6M1053 392l-11 8M684 479l-1 -7M845 634l6 8M669 583l-3 15M1161 441l6 6M983 488l6 10M914 609l5 -9M957 637l2 -8M882 508l-2 12M848 380l-10 -0M965 482l-5 8M926 415l-8 -3M892 287l-6 7M798 467l8 -6M892 436l3 3M678 548l-10 1M1094 424l1 -10M934 355l3 -7M1072 542l15 11M1027 535l12 -1M924 545l-2 -9M993 345l-10 -4M952 380l-6 0M746 453l4 9M882 306l11 8M685 679l9 6M874 385l-7 2M549 533l1 11M905 620l-12 -7M698 593l8 3M798 616l-8 -3M762 458l-12 4M564 591l7 -17M999 525l-4 -10M893 450l5 -4M657 694l-19 5M1074 556l-10 12M866 429l7 4M799 508l-3 -9M1005 597l-9 -3M830 619l1 9M721 463l12 -0M877 396l7 7M1045 431l-6 -1M1077 421l-0 11M850 429l6 -1M707 645l-9 -4M527 599l15 5M680 505l0 6M778 645l11 -2M691 631l1 -11M596 564l7 3M733 726l1 -15M982 433l-5 8M799 508l10 8M787 670l-12 1M801 631l7 2M640 555l-13 2M655 653l-7 -13M754 454l-4 8M1232 504l-9 -7M897 403l8 -0M946 380l-5 6M1272 463l5 4M816 589l-9 4M765 572l-4 8M630 667l7 14M984 668l5 15M953 462l-6 -8M1069 635l-12 -1M960 404l-3 6M1265 471l-2 -7M1270 425l-4 -7M1040 465l8 9M1193 452l-3 -10M722 496l7 -4M1018 514l-7 5M546 563l1 20M975 600l1 6M1034 511l-3 13M899 599l1 -8M1142 424l11 -6M656 526l0 12M1072 605l-17 -3M908 587l-6 -4M757 660l11 8M703 603l-10 -3M673 511l-7 2M854 441l-7 4M847 684l-5 7M753 610l9 1M1086 462l-7 -8M556 574l9 -10M886 710l11 4M795 578l6 5M670 531l5 -5M883 324l10 -10M822 380l-3 -15M878 453l5 2M880 350l8 -4M927 382l9 1M1004 370l-12 -3M974 357l-7 5M831 365l4 -13M618 627l-6 14M873 433l-2 -7M1021 395l2 16M513 555l5 -10M883 419l9 3M979 466l14 -4M685 679l-12 7M774 450l-7 -7M759 534l-11 -5M687 659l2 9M915 528l8 -3M995 429l8 -1M822 654l9 -2M864 332l-1 -9M879 336l7 -5M774 513l-7 4M802 433l-9 -2M686 692l8 -7M1098 492l-12 -5M1046 501l-8 -6M1146 565l-17 -5M577 580l9 3M960 490l11 -1M1308 503l-8 -12M932 375l5 -8M686 615l8 -7M893 383l5 -4M609 667l11 -6M688 529l-8 2M898 379l12 0M905 475l6 -3M1195 422l5 -8M838 502l8 2M827 690l-11 -6M1020 474l8 -4M969 412l8 -11M1128 469l3 9M905 393l-7 -0M980 499l9 -1M1053 418l-4 6M1288 492l-1 -11M1006 384l1 12M1011 661l-4 -9M1053 617l-13 -1M1225 424l-6 -11M892 417l7 0M755 490l2 -13M838 502l5 12M709 624l3 14M587 663l-6 -10M602 620l16 7M872 591l10 -0M1014 386l-1 -9M922 501l11 -2M815 611l5 -1M938 425l-7 7M996 479l-3 -8M834 554l-9 1M969 607l6 -7M735 659l15 -3M711 616l1 -12M949 656l-4 -13M642 651l-12 16M1006 572l-7 1M665 523l1 -10M1052 678l-16 1M589 696l15 -5M753 572l-7 4M861 500l-6 -3M759 624l-12 7M856 394l-4 -6M888 458l1 10M1203 542l12 12M667 481l8 -7M917 447l2 6M605 558l6 -5M997 391l1 11M798 640l7 7M835 402l-12 -4M1029 619l-7 6M768 668l-11 1M816 589l4 -10M882 531l10 -2M1287 397l-14 -2M722 496l3 9M814 503l-7 4M1075 493l-9 3M750 501l6 -3M1277 408l-4 -13M928 439l-3 -6M949 314l-2 -7M741 470l8 5M1236 422l-6 -9M828 391l-13 4M882 667l4 -10M909 598l10 -12M767 417l5 12M1032 476l0 12M1262 488l12 -2M639 547l-1 -12M860 373l2 -10M915 477l12 -0M796 545l2 -8M955 330l9 3M998 382l-1 9M977 557l-0 8M877 482l7 -1M549 533l-25 -2M1046 553l16 4M965 516l7 -9M859 467l6 -9M937 348l6 -5M955 699l-12 -5M889 599l10 -0M1064 429l-4 -7M969 412l-6 5M1005 626l-7 6M761 742l14 -3M686 692l-13 -6M611 553l-12 3M698 593l-0 -8M1303 423l5 -18M705 474l-7 6M831 637l5 9M980 499l1 8M799 701l15 8M899 433l-4 6M879 336l-9 2M1014 669l9 -8M872 591l-6 -10M1297 431l-13 5M748 492l8 6M802 576l6 -4M1244 444l3 -7M778 625l8 2M1204 434l-3 -10M862 535l10 -10M740 568l-8 1M1175 495l6 5M1092 628l-15 17M976 383l9 -2M715 530l-11 3M1082 426l-5 -5M1105 544l6 -11M1258 417l-10 -5M560 649l6 9M857 679l4 -6M926 489l-6 5M1284 543l8 -20M1052 452l1 -8M879 360l1 10M685 679l12 -1M710 676l-13 2M805 493l-8 -5M802 576l-0 -10M911 518l-6 -9M943 570l-5 9M805 493l-9 6M936 397l12 -7M551 629l-4 14M832 532l-8 5M1246 456l7 -5M596 536l10 1M716 514l-10 -4M1205 457l11 5M871 478l6 4M1011 604l9 1M753 610l-0 9M898 393l2 5M789 475l-8 2M872 371l-4 9M982 604l7 0M941 386l-1 -10M815 395l8 3M1293 421l6 -5M638 535l-10 7M1169 509l-17 3M605 558l8 2M594 674l-7 -11M939 686l4 8M1158 492l7 -0M814 596l-7 -3M1074 448l-11 -7M700 633l-2 8M1265 471l7 4M938 425l-0 10M780 563l12 2M670 531l-5 -8M1153 533l-6 14M859 692l16 4M651 673l-5 16M1000 657l-10 3M1156 434l5 7M851 454l4 -7M957 637l8 8M715 579l1 -9M1005 408l10 -4M794 529l-2 -10M719 470l3 7M818 448l2 -12M779 750l-4 -11M912 464l-6 5M905 403l5 8M1182 412l8 4M1067 418l-3 11M1296 440l3 10M1069 616l-14 -14M858 434l8 4M1035 651l11 -11M631 515l-12 2M792 680l4 -11M767 531l-9 -5M923 298l6 -6M1174 412l-8 7M1288 492l-6 -3M855 570l-7 -0M884 648l2 9M1246 422l6 -1M817 456l-2 9M739 609l-4 14M1091 528l-10 6M901 611l-2 -12M982 629l-6 -7M860 448l1 -8M1156 449l4 6M1238 556l-12 1M1142 438l-8 -2M1284 543l-9 -16M676 670l-3 16M788 660l-10 4M825 607l7 -2M1094 424l7 -3M1072 542l9 -8M739 445l6 -10M775 421l6 -10M888 346l-2 -15M839 477l11 7M1267 494l-5 -6M880 370l-9 -8M1053 418l7 4M988 426l2 9M1125 533l-14 0M1287 444l7 2M775 601l5 8M821 599l2 -7M1072 542l-10 15M1166 541l-5 -15M838 502l-2 -8M832 532l-2 15M926 415l-2 -6M920 429l5 4M1237 413l-7 0M882 546l-5 8M1005 452l7 7M892 422l-0 -5M869 505l-1 8M843 490l7 -6M898 379l-12 1M840 361l-3 10M657 598l-4 -15M861 565l-9 -3M1121 459l-7 3M817 645l9 1M904 678l-9 3M739 445l7 8M1228 451l-8 -1M961 363l-6 -10M1075 463l-8 -2M1119 471l2 -12M1240 436l-8 2M937 671l8 7M1156 449l11 -2M838 380l-9 -7M628 524l2 7M1116 450l-8 0M792 519l-11 -2M969 671l7 10M945 561l1 -9M842 701l-19 -3M883 438l3 2M1258 560l2 -12M798 640l-1 7M1014 542l9 7M1027 535l-13 7M1287 397l-2 13M946 353l-5 7M1054 470l-5 -6M861 440l-7 1M879 360l-8 2M858 507l-5 6M1277 408l8 2M969 371l-12 -1M796 553l-8 1M960 553l-6 -8M722 584l4 -10M659 547l9 2M949 604l1 -6M1209 564l6 -10M863 526l5 -13M727 512l-2 -7M1040 465l-9 -1M762 458l-4 -17M1172 553l12 5M923 347l-5 10M724 600l6 13M837 674l0 9M729 499l-0 -7M1075 493l-9 -8M828 504l-8 -7M520 611l-10 7M936 588l-3 10M907 439l-3 -3M1091 404l7 -9M858 580l-3 12M692 538l-6 7M871 314l-8 9M757 477l-8 -2M904 436l-3 4M660 472l-0 8M811 440l-9 7M863 634l-5 10M1232 522l1 15M862 597l-7 -5M915 427l-4 -4M888 446l-2 -6M1069 635l8 10M971 394l-10 1M895 650l-9 7M910 710l14 -6M667 640l-12 13M804 661l-7 -6M1188 482l-1 -12M995 611l3 -9M806 461l4 -11M780 550l8 4M788 454l-14 -4M748 509l2 -8M903 446l2 6M828 489l0 15M770 460l6 7M682 604l-6 -6M1006 384l7 -7M863 526l-13 2M790 613l-2 7M933 625l-7 4M726 543l9 10M1057 546l5 11M1031 550l-8 -1M860 490l1 10M906 538l-11 -1M998 411l-6 6M1102 427l-3 7M726 574l6 -5M764 593l-8 -1M1133 486l-2 -8M560 649l11 -12M825 680l-9 4M734 542l-8 1M895 495l-8 6M886 555l-6 7M895 625l15 2M871 478l-7 4M689 521l-2 -9M796 553l7 -4M828 504l8 -10M667 473l10 -8M778 505l-2 -9M1119 505l1 -8M727 556l-1 -13M1073 503l0 14M1018 532l9 3M790 412l-4 -9M1089 497l-3 -10M1315 531l8 7M646 516l7 -6M1300 477l-7 -1M1030 595l2 12M1235 479l-7 -3M720 647l2 12M965 645l-7 5M971 476l-0 13M1156 449l5 -8M939 604l1 -10M640 555l-7 9M984 612l7 12M1182 421l7 10M1008 434l-5 -6M960 553l8 -4M936 560l-7 6M976 533l-11 3M1091 528l-6 -13M971 394l6 7M885 425l5 2M932 691l11 3M1225 424l11 5M849 651l2 -9M735 588l11 1M875 295l-8 8M657 694l-11 -5M920 390l-1 -8M663 487l-12 4M753 584l-7 -8M891 510l-11 10M622 593l8 0M781 582l7 5M1197 562l18 -8M901 530l2 -13M970 689l-3 12M712 687l10 -3M700 465l-7 10M915 483l7 0M908 587l1 -8M995 544l-3 -13M811 431l9 5M757 660l5 -8M752 648l-2 8M801 689l15 -5M859 455l6 3M954 582l-3 6M653 583l-7 6M828 504l-6 9M907 439l1 -5M780 563l2 8M762 458l12 -8M780 438l2 -9M1100 503l-11 -6M907 463l5 1M913 493l-7 -8M812 562l-10 4M1054 405l7 8M841 593l-2 6M872 371l8 -1M1119 505l4 13M887 410l-3 -7M1192 495l-11 5M983 488l-3 11M1051 564l11 -7M757 660l-7 -4M894 462l5 -3M678 570l11 1M952 525l1 -8M686 615l-12 -5M639 547l-9 2M923 298l-6 -11M1274 431l-4 -6M1195 518l13 12M783 540l5 14M537 545l13 -1M983 349l-9 8M1109 424l-8 -3M874 463l8 3M1094 424l-1 12M771 610l9 -1M761 580l-5 12M602 523l-8 3M1030 432l9 -2M627 557l-4 -10M798 598l-2 8M1295 485l-2 -9M675 541l5 -10M872 371l-12 2M1099 434l-6 2M973 328l-6 -8M642 525l3 11M743 731l11 -5M1100 503l11 -6M935 457l-5 -4M875 696l-4 -11M697 667l1 -14M883 429l2 -4M899 369l-2 -8M790 694l-10 5M854 613l7 7M909 598l-1 -11M1177 528l-16 -2M1030 432l4 -9M1066 476l-10 6M992 454l4 -7M1209 447l-5 -13M657 497l-6 -6M642 651l-17 -3M653 570l4 -14M736 522l8 -3M923 336l5 -7M565 564l13 -3M1028 470l3 -6M899 423l1 5M748 529l-4 -10M956 448l8 7M905 620l9 -11M1081 659l18 0M1233 537l15 -13M955 417l2 -7M1165 492l5 -4M878 453l5 8M1145 487l8 1M959 629l8 -8M923 369l2 -9M949 628l-4 15M853 657l-4 -6M952 557l-6 -5M1205 457l6 11M837 438l-4 11M1032 580l-2 15M786 498l-10 -2M960 490l-6 9M905 509l-7 -5M1228 476l1 -7M949 314l8 4M846 421l7 2M1151 498l-11 6M896 326l5 -8M882 591l4 -10M571 637l0 12M806 396l-1 11M597 607l-11 9M983 488l-12 1M917 657l3 -8M933 625l-1 -13M873 632l7 -4M829 420l10 -1M1187 470l-7 3M719 489l-8 1M950 484l6 -6M1169 426l-6 6M915 677l4 -8M850 354l4 10M631 637l17 3M933 573l-7 3M905 620l-10 5M719 611l11 2M713 536l2 -6M908 448l4 -5M810 544l9 7M915 477l0 6M832 436l-5 -7M1248 412l7 -3M993 652l-3 8M936 449l-7 -4M1089 453l8 7M959 586l-4 8M1005 452l-5 -14M923 347l-8 -8M706 504l-6 1M932 531l-10 5M1057 439l10 -4M783 526l11 3M597 544l-11 -3M648 558l-8 -3M1005 478l8 -9M921 556l0 14M926 415l12 4M947 424l8 -7M807 601l-0 -8M773 569l-1 -9M897 403l1 -10M969 371l5 -6M1040 465l9 -1M896 427l3 6M785 509l-4 8M946 353l3 7M1104 487l8 1M1018 514l-12 -4M1185 455l-7 4M893 383l10 3M1291 455l-9 4M1105 580l14 -1M1003 686l8 -9M872 371l-1 -9M1022 625l6 7M915 677l-13 -7M739 681l-8 7M968 599l-1 -9M670 491l2 10M1304 443l-8 -3M892 417l-5 -2M972 614l-12 -2M1087 553l12 6M677 698l14 14M731 701l-12 6M952 344l7 -7M902 355l8 2M999 525l1 10M877 396l-3 -11M883 461l0 -6M903 386l2 7M689 521l-1 8M818 621l-9 2M703 517l2 6M1259 449l7 2M606 537l-0 8M787 390l7 3M857 556l-8 -5M651 673l7 9M886 380l-6 -10M963 311l-6 7M1270 412l-4 6M1226 557l-11 -3M758 542l-12 0M663 502l-2 8M1237 486l7 -3M1228 476l2 12M798 640l3 -9M762 458l5 -15M1235 479l6 -2M722 637l7 10M1111 514l0 -17M889 634l-9 -6M855 570l-8 7M877 513l3 7M622 573l9 8M1315 531l14 -14M961 425l2 -8M1038 628l15 -11M817 489l-3 14M900 661l-8 7M902 670l-7 11M770 491l-14 7M651 521l-6 15M1054 470l3 6M912 464l5 -4M677 698l18 2M1021 495l-13 5M1249 463l-11 -7M741 746l2 -15M839 477l0 -8M834 427l5 -8M997 391l9 -7M638 595l-7 -14M863 634l-7 2M830 598l3 -5M683 564l-9 -8M670 491l7 -7M1218 507l-4 -8M880 562l8 1M793 422l-11 7M1042 412l0 8M915 477l-4 -5M913 493l2 -10M1014 551l-10 -8M869 420l7 1M946 353l9 0M963 436l0 11M811 431l-9 2M1056 482l-5 7M783 593l9 2M894 521l7 9M875 295l11 -1M910 627l7 -3M984 516l-3 -9M689 552l7 2M897 545l12 5M919 586l-10 -7M911 292l3 8M537 545l-13 -14M869 641l-6 -7M1081 659l-11 -5M1214 476l-9 -1M857 556l-5 6M802 622l8 -5M979 466l14 5M866 581l0 -9M943 519l9 6M862 363l-3 -10M717 561l-4 -11M1097 460l-0 12M1192 409l-2 7M898 479l-8 1M883 429l-0 5M905 452l-6 7M873 648l-2 9M1169 476l-8 5M1019 641l-3 11M1284 436l6 -8M979 466l-10 -5M1236 499l6 14M1105 456l-9 -3M735 623l-5 -10M636 495l-9 2M949 656l-9 0M861 476l-9 -6M1210 519l-15 -1M815 476l2 13M995 611l-6 -7M976 533l1 9M1279 424l5 -4M980 499l-9 -10M845 603l-6 -4M1182 450l-3 -11M753 584l-7 5M1123 478l-10 -2M908 644l-1 -9M513 576l-8 -11M828 391l-15 -5M680 505l7 7M1004 589l1 8M803 720l-17 -11M1223 486l-0 -7M781 689l-13 1M928 672l-9 -3M1013 586l1 -16M986 691l-10 -10M790 613l6 -7M1077 410l1 -14M1054 430l3 9M950 598l-6 -0M919 441l-7 2M1044 457l5 7M537 545l-2 19M602 523l12 2M1235 479l-5 9M748 601l8 -9M1254 442l9 -6M1013 469l-9 0M1016 652l-9 -0M813 531l-8 -2M1171 453l-5 5M1287 444l-7 3M713 698l-9 -6M888 433l-5 1M892 422l7 1M813 531l-3 13M1251 428l-7 1M1010 424l10 14M915 506l12 1M1158 492l1 8M878 407l-4 -5M988 478l8 9M982 357l9 2M847 372l9 7M638 535l-8 -4M679 590l0 -11M922 501l-2 -7M975 516l-3 -9M877 513l-9 -0M877 443l1 -5M1161 481l-8 7M822 352l4 7M921 556l-12 -6M674 610l2 -12M793 631l5 9M740 528l-10 7M1130 443l4 -7M803 720l11 -11M868 380l-1 7M959 377l-2 -7M1088 413l7 1M864 332l10 -8M781 618l-1 -9M740 568l6 8M859 467l2 9M720 667l-10 9M989 396l8 -5M832 532l8 6M689 571l-10 8M620 581l2 -8M1286 465l7 11M877 429l-6 -3M618 541l10 1M886 710l-0 -13M887 501l11 3M659 547l-12 0M932 691l-8 13M884 683l-13 2M819 365l10 8M982 604l2 8M822 654l-8 5M878 599l6 6M989 443l11 -5M781 582l1 -11M877 443l5 1M924 457l8 8M1071 425l6 -4M816 684l-14 -3M572 609l-17 -8M1151 441l5 -7M969 412l-9 -8M858 507l-12 -3M864 652l7 5M638 626l5 -14M943 705l12 -6M1130 443l-10 -1M769 730l7 -13M704 692l-0 -9M942 489l9 2M1152 512l9 14M857 556l4 9M897 698l-5 -8M719 489l10 3M917 447l2 -6M628 524l3 -9M898 479l-1 -6M1170 488l9 -6M822 654l4 -8M1271 501l4 -7M918 357l7 3M1267 480l5 -5M691 631l-6 -6M910 724l-0 -14M782 429l2 -10M794 443l-9 1M880 414l7 -4M772 524l9 -7M1142 481l-11 -3M899 459l9 -3M1224 463l-7 6M845 634l2 -8M763 643l-1 9M1038 451l-12 -4M990 507l9 -10M1250 490l3 -7M692 620l9 2M850 484l5 13M903 386l7 2M772 592l-5 11M586 616l-4 -12M990 507l-9 0M767 585l-11 7M975 454l9 -2M559 553l2 -19M910 627l7 12M1120 442l4 10M771 610l-9 1M1203 542l18 -8M982 433l-14 -1M1098 492l6 2M953 462l11 -7M1066 476l-0 9M657 694l1 -12M641 664l1 -13M932 531l11 12M691 712l4 -12M848 405l6 -4M704 533l3 11M982 629l11 11M790 412l-6 7M1004 469l8 -10M1093 539l-6 14M938 579l9 -2M861 673l2 11M1238 556l-29 8M757 677l0 -8M599 654l13 -13M945 643l-5 13M915 477l7 6M783 593l5 -6M957 637l-12 6M1097 472l-6 -4M757 677l16 2M814 659l8 5M1175 495l5 -5M1006 510l2 -10M677 484l5 7M820 427l-5 -7M1052 678l-14 -10M667 481l10 3M863 424l8 2M859 692l12 -7M892 436l-2 4M907 463l-8 -4M817 645l-5 7M1286 465l8 -3M785 636l1 -9M1004 589l-8 5M955 388l-3 -8M830 383l-1 -10M955 699l3 -9M1011 661l5 -9M820 427l0 9M892 287l6 9M798 467l8 8M670 564l1 8M917 447l6 -2M841 593l-8 -0M1061 469l5 7M907 417l4 6M1172 553l-6 -12M678 497l-6 4M571 637l5 -14M1004 419l7 -4M864 652l-6 -8M627 557l6 7M1007 554l13 7M991 377l-1 9M719 611l-8 5M853 706l1 16M604 597l4 -12M923 369l9 6M811 554l8 -3M844 584l-3 9M960 553l-1 8M1142 424l-9 -1M1248 540l-0 -16M1031 457l-7 5M758 526l1 8M832 605l-2 -7M942 634l-8 6M985 559l10 7M848 672l9 7M838 502l-10 2M640 555l7 -8M780 699l1 -10M818 621l6 3M622 677l-18 2M787 737l10 -8M1136 429l-2 7M871 478l4 -10M913 417l-3 -6M758 526l14 -2M1072 542l2 14M993 462l-0 9M1000 657l7 -5M837 523l13 5M670 491l-6 4M731 676l-0 12M1046 446l7 -2M810 361l9 4M780 563l-7 6M891 404l-7 -1M529 574l-7 -8M882 546l-13 -4M1024 462l-3 -7M889 361l6 -9M660 516l-7 -6M1189 431l8 -2M1284 429l-5 -5M1066 476l-9 -0M1171 434l-8 -2M1044 493l-6 2M767 550l-0 -11M933 598l-7 5M1023 661l5 9M1013 617l9 8M538 592l17 9M784 653l-15 4M848 380l4 8M1308 405l-9 11M1144 461l8 9M998 602l-2 -8M991 578l-6 -7M1120 497l-9 -0M1197 502l9 -4M851 417l7 1M732 600l14 -11M826 646l5 -9M790 694l9 7M666 538l-10 0M999 525l-8 -2M1139 469l6 5M739 481l10 -6M1136 417l-4 -7M902 670l-10 -2M631 581l-1 12M1146 565l8 -9M886 380l-5 5M950 484l-6 -5M900 333l8 -0M572 609l14 7M1054 430l-9 1M1151 441l10 0M905 409l-7 2M884 620l-4 -8M798 412l9 8M811 554l-8 -5M1286 465l-9 2M917 471l-5 -7M866 438l-5 2M825 555l-5 6M736 455l5 15M892 302l-6 -8M883 449l-1 -5M795 578l-0 9M878 599l4 -8M774 450l9 13M970 689l6 -8M1069 616l-12 18M670 564l-7 -4M934 651l11 -8M1214 476l2 7M931 521l13 6M898 479l7 -4M736 455l14 7M857 734l14 -2M867 714l-13 8M719 625l3 12M802 447l-2 8M909 598l10 2M975 454l-6 -12M908 333l-2 -8M947 577l2 -9M785 509l-7 -4M1329 517l10 -5M646 601l0 -12M878 453l-4 -6M949 373l-3 7M838 629l-7 -1M1236 422l8 7M793 422l-9 -3M787 576l8 2M1279 424l-9 1M590 559l3 -8M1238 469l-10 7M1023 425l-6 -6M780 438l-6 12M906 325l11 5M726 718l7 8M657 556l6 4M811 431l9 -4M897 545l9 -7M807 640l8 -2M572 609l4 14M987 540l-10 2M949 405l-7 6M698 480l-6 2M995 566l4 7M986 691l3 -8M1222 440l-6 -3M784 653l5 -10M995 544l9 -1M674 556l-11 4M1130 459l6 -5M948 612l10 7M1046 553l-7 14M934 544l12 8M798 640l-9 3M663 502l10 9M775 577l7 -6M1011 661l12 0M878 438l4 6M852 388l8 0M875 696l-10 7M898 379l1 -10M969 412l10 -2M724 600l-3 -8M731 529l5 -7M961 425l2 11M855 628l1 8M1304 443l-7 -12M807 378l15 2M1272 463l-5 -5M729 470l-7 7M1014 570l-7 -7M584 633l9 -7M789 475l3 -14M1081 659l-4 -14M982 604l-7 -4M1054 430l-1 -12M786 709l-6 -10M793 631l2 -8M822 513l11 0M886 572l2 -9M998 581l-6 6M885 425l-8 4M627 557l-9 -5M892 422l-7 3M843 720l1 15M574 552l10 1M816 589l-6 -7M1018 514l4 -9M1005 408l6 7M888 458l5 -8M837 575l11 -5M1038 459l-7 -2M943 543l9 -7M546 563l19 1M866 429l-3 -5M1151 498l2 -10M555 601l-8 -18M842 453l-9 -4M745 622l-10 1M904 678l-2 -8M1277 467l-5 8M1222 440l6 3M842 701l-0 -10M972 593l-4 6M1111 514l12 4M529 555l-11 -10M1051 564l-1 17M1236 499l10 0M933 499l-6 8M742 512l-5 -9M1021 592l9 3M1071 425l-7 4M917 657l-6 6M1085 596l-13 9M873 433l4 -4M653 510l-2 11M1192 495l-6 -7M764 562l-11 10M1267 494l-5 6M638 595l8 -6M963 507l-9 -8M1258 417l5 -7M871 674l11 -7M1199 481l-5 7M1054 430l-9 9M697 667l13 9M822 634l9 -6M845 603l2 -6M657 598l-11 -9M633 564l2 9M998 632l10 3M1130 459l-6 -7M732 600l-2 13M846 411l-7 8M716 519l6 10M1120 497l11 -2M894 462l3 -7M701 547l-5 7M743 552l3 -10M700 494l-12 -0M814 659l-0 14M739 681l13 5M1014 386l7 9M1011 677l10 -3M705 474l0 12M926 489l-4 -6M815 738l-3 -11M1003 670l8 -9M905 620l5 7M849 608l6 -8M1066 485l-9 8M795 578l-7 9M847 445l3 -9M513 555l-7 -13M929 424l-4 9M784 653l13 2M982 629l9 -5M586 541l2 -8M1153 418l-9 -7M775 601l-8 2M1051 489l6 4M1032 476l3 -6M657 556l2 -9M1077 625l-8 -9M840 618l-4 -5M827 583l-4 9M829 420l-2 9M1265 471l7 -8M529 555l-16 -0M641 664l10 9M1189 431l-11 -1M1205 457l-1 11M913 493l7 1M942 411l-7 1M1278 441l-4 -10M866 581l-3 8M903 573l5 -15M1091 528l10 -8M995 429l-7 -3M864 415l6 -8M962 575l-2 -7M636 495l-3 -7M967 362l-4 -7M832 479l-5 -7M665 523l10 3M611 553l7 -1M796 499l11 8M657 556l-9 2M853 622l-6 4M587 596l17 1M839 560l8 -2M717 483l-5 -5M1014 542l-10 1M1085 419l3 11M1004 589l-12 -2M1154 461l-10 0M943 543l3 9M935 457l7 -9M938 419l11 -7M954 545l-2 12M762 611l-9 8M1042 400l7 10M589 696l-9 -18M1014 669l-11 1M1280 415l-1 9M842 649l-6 -3M676 670l13 -2M992 454l-8 -2M726 718l-7 -11M1024 576l5 -13M1154 461l7 4M587 596l-12 -6M960 612l3 -6M948 612l-9 -1M796 545l7 4M822 415l-11 -2M694 608l9 4M797 402l9 -6M520 588l-7 -12M1200 447l-10 -5M925 594l1 9M842 649l-11 3M880 414l-2 -7M1158 492l-5 -4M868 394l9 2M878 453l-6 4M1034 423l-3 -11M742 537l6 -8M868 394l-1 -7M760 755l-9 13M738 651l-9 -4M1087 442l-4 -7M965 645l10 -8M734 738l-7 11M1027 535l4 15M955 573l5 -5M722 529l0 -9M1175 495l-9 4M1003 670l-6 9M638 595l-3 11M1093 539l-12 -5M955 417l8 -0M878 438l-1 -9M869 665l2 -8M897 473l8 2M1023 661l-2 13M718 543l-11 1M807 420l8 0M979 410l-8 9M827 405l5 6M934 389l2 -6M610 653l10 8M795 578l-3 -13M832 566l-2 7M1143 452l-1 -7M911 350l12 -3M1119 471l-6 5M1329 498l11 2M716 514l-4 -7M864 652l-3 8M1160 455l6 3M785 603l7 -8M905 409l-6 8M1061 450l13 -2M1079 474l8 2M657 694l9 8M903 423l-3 5M737 503l-6 4M719 625l8 -3M760 755l19 -5M700 494l3 5M899 451l-6 -1M1240 436l-4 9M1024 462l7 2M1128 432l5 -9M669 583l2 -11M643 499l1 8M1222 440l-2 10M998 361l-6 6M932 375l8 1M999 497l-3 -10M695 499l8 0M698 528l7 -5M1238 469l3 8M933 406l2 6M671 518l4 8M998 402l9 -6M917 639l0 -15M1189 431l-3 6M969 442l-6 5M877 482l3 6M1225 424l11 -2M796 606l-4 -11M889 599l4 14M1037 438l8 1M869 641l-5 11M827 690l10 -7M1169 509l12 -9M814 569l-6 3M871 674l0 11M656 538l6 -5M1222 440l-2 -10M1111 482l2 -6M972 593l7 -0M918 696l-10 4M1329 498l-9 -8M1061 450l2 -9M841 566l-9 -0M1248 552l10 8M1295 539l-3 -16M736 522l-4 -7M830 598l-7 -6M731 529l-9 0M864 415l-6 3M948 390l-7 -4M900 661l7 -7M1223 479l-6 -10M717 483l-12 3M546 619l-4 -15M939 311l5 -12M882 591l9 -2M977 542l0 15M673 686l-7 16M1238 556l10 -4M631 581l4 -8M698 480l7 6M666 598l10 -0M926 576l-5 -6M660 516l5 7M847 445l-3 -9M1248 398l7 11M955 388l5 -4M1034 423l-11 2M818 406l-13 1M798 412l-1 -10M1077 410l11 3M1152 409l8 6M1010 492l6 -11M661 510l-5 -6M983 349l-1 8M849 608l5 5M814 629l-6 4M1272 463l10 -4M917 471l4 -7M882 546l-13 4M667 481l-7 -1M1254 467l-4 7M924 545l-15 5M538 592l9 -9M661 510l5 3M1077 625l15 3M991 578l1 9M858 418l-5 5M993 652l14 -0M906 371l-7 -2M1154 556l-16 -3M1246 422l2 -10M1032 476l-7 8M1277 408l10 -11M1023 661l12 -10M1085 596l-19 -3M1136 417l8 1M829 442l-9 -6M1194 488l4 4M591 645l-7 -12M1083 435l-6 -3M1071 407l-4 11M1211 426l5 11M1095 443l-2 -7M1042 420l7 -10M731 529l-3 -6M920 429l-7 6M1171 434l7 -4M945 585l9 -3M796 553l-0 -8M1296 409l-5 5M878 498l5 -4M943 519l-0 -16M1148 433l-12 -4M905 452l-8 3M1193 533l-16 -5M669 583l10 -4M587 596l6 -7M780 438l-8 -9M797 488l12 -5M1218 421l-6 -7M892 668l-6 -11M608 585l6 -10M1120 442l-9 2M898 479l8 6M556 574l15 -0M884 683l11 -2M901 611l-8 2M728 664l-6 -5M771 610l-4 -7M1250 490l-7 2M802 384l-8 9M798 467l-6 -6M697 678l-3 7M847 590l8 2M848 672l13 1M942 411l-2 -7M1105 456l3 -6M731 529l-1 6M1128 432l2 11M727 622l3 11M952 344l3 9M855 628l12 -1M1250 474l7 0M968 549l9 8M1269 517l12 -7M933 598l6 6M893 383l-7 -3M1027 517l4 7M639 547l1 8M623 605l12 1M586 541l7 10M1204 434l-7 -5M894 462l-6 -4M1038 459l6 -2M910 411l8 1M550 544l11 -10M1190 442l-4 -5M670 564l-8 10M588 574l-8 -2M924 663l12 -0M711 490l11 6M857 556l-10 2M1104 487l-7 -3M904 678l8 10M1205 457l-8 2M1034 511l-12 -6M932 691l7 -5M850 541l10 8M951 588l4 6M798 616l12 1M1023 425l-3 13M678 621l8 -6M1237 413l1 -7M807 378l-4 -10M698 528l-0 8M1074 448l6 -5M860 448l-5 -1M729 647l-9 -0M897 473l-8 -5M701 547l-3 -11M979 466l0 15M1223 486l-4 5M812 694l-13 7M1219 413l-6 -9M590 559l-6 -6M914 397l-0 8M742 537l4 5M745 622l2 9M1073 503l8 -3M657 694l16 -8M1014 669l-3 -8M883 419l2 6M1133 486l-2 9M985 653l8 -13M719 625l-10 -1M505 591l5 27M1032 476l-12 -2M1087 504l-6 -4M889 468l10 -1M1224 463l-8 -1M1031 457l-5 -10M892 302l1 12M735 487l-3 -8M832 660l-1 -8M620 581l-6 -6M845 634l-7 -5M850 429l-0 7M761 686l7 4M875 696l9 -13M895 439l6 1M757 477l12 -6M764 432l3 -15M847 684l-10 -1M933 499l10 4M882 508l-13 -3M624 565l-4 -4M1148 448l-5 4M1184 462l-10 3M970 689l-12 1M892 436l-4 -3M1082 492l4 -5M1014 570l-8 10M888 458l9 -3M930 309l-7 6M681 634l8 5M907 364l-10 -3M842 453l4 7M912 688l11 -2M1100 503l1 17M908 333l9 -3M717 561l10 -5M1186 488l-7 -6M909 550l5 -11M1078 396l20 -1M1283 473l-5 7M871 314l9 1M822 654l-10 -2M892 422l7 -5M908 448l-3 4M924 457l-3 7M952 429l-7 2M844 735l10 -13M976 533l16 -2M790 613l-5 -10M977 441l-8 1M933 406l7 -2M969 371l-10 6M1151 441l-9 -3M707 558l6 -8M624 565l-12 3M750 665l-11 3M964 333l-3 -7M886 710l7 19M643 612l3 -11M1206 498l8 1M842 453l9 1M1178 430l-9 -4M762 611l5 -8M705 486l3 10M1210 519l11 -1M1101 412l-6 2M901 688l7 12M822 634l9 3M832 588l4 -5M748 509l-11 -6M628 524l14 1M919 453l5 4M860 448l-1 7M767 698l-18 6M956 448l-2 7M880 315l13 -1M698 528l-10 1M628 524l-9 -7M1284 543l-12 2M728 523l8 -1M825 607l-4 -8M724 733l-10 -11M1129 560l-3 -13M786 709l4 12M783 463l9 -2M783 540l13 5M993 640l-2 -16M772 483l9 -6M955 388l-1 7M1232 504l-2 -8M1166 541l-12 15M597 607l7 -10M893 450l-5 -4M905 620l12 4M1321 477l-15 -4M1005 597l-7 5M1005 408l-7 -6M1048 482l-0 -8M788 454l-5 9M919 586l2 -16M933 625l8 -5M862 535l7 7M724 733l2 -15M641 488l10 3M775 577l-2 -8M867 714l9 8M718 506l-2 8M913 565l-5 -7M1221 518l-13 12M974 357l8 0M1211 426l-4 -7M806 461l9 4M770 491l6 5M707 558l-7 3M938 471l-6 -6M721 463l5 -6M719 489l-2 -6M860 608l-11 0M643 499l-2 -11M923 369l-9 -4M1029 563l10 4M945 399l-5 5M740 496l-11 3M1177 528l8 -18M1071 407l-10 6M570 541l-9 -7M1113 557l3 11M997 391l10 5M871 443l3 4M825 680l2 10M971 489l8 -8M1214 499l5 -8M905 393l5 -5M876 421l-5 -7M974 337l-10 -4M707 645l-3 16M811 440l-1 10M981 507l-9 0M1160 455l-8 -1M774 450l11 -6M902 670l-2 -9M767 517l3 -15M995 611l-4 13M729 647l1 -14M926 468l6 -3M1158 474l-6 -4M1283 473l4 8M1104 444l-9 -1M1052 536l14 -9M954 545l-2 -9M967 585l6 -3M1211 426l9 4M651 482l9 -10M624 565l3 -8M976 347l7 -6M689 571l14 2M767 698l-10 -4M915 506l-10 3M797 729l6 9M960 553l-8 4M1020 605l3 7M974 357l-0 8M798 412l13 1M1292 523l-17 4M857 679l6 5M922 536l1 -11M1023 411l8 1M818 448l-7 -8M646 689l-8 10M814 576l-6 -4M700 633l9 -9M786 403l8 -10M1010 424l-6 -5M753 572l-6 -12M778 664l-3 7M675 526l6 -3M764 562l3 -12M786 498l-1 11M1269 517l6 10M1077 410l8 9M1126 485l-3 -7M955 388l-7 2M825 680l12 3M945 561l4 7M887 410l5 7M1153 533l-1 -21M922 501l5 6M963 342l-11 2M838 629l-8 -10M694 685l10 -2M1031 457l7 -6M1238 469l-3 10M1203 542l-11 5M666 598l-4 -10M989 405l-12 -4M850 429l-6 7M1011 604l-13 -2M899 451l-2 4M985 559l9 -1M1126 547l-21 -3M641 664l-4 17M1061 450l-9 2M946 380l-6 -4M693 475l-1 -12M907 491l-12 4M604 691l-14 -6M913 493l-6 -2M923 298l-9 2M937 671l-1 -8M818 448l10 8M646 516l-15 -1M1262 488l-9 9M653 583l9 -9M934 651l2 12M943 705l-7 10M1035 470l-7 0M824 572l-10 -3M934 651l6 5M967 362l-6 1M998 361l-7 -2M818 621l-8 -4M811 440l-9 -7M1029 419l-6 -8M846 504l-3 10M1072 583l-22 -2M1076 486l-4 -7M725 505l6 2M963 507l9 0M829 442l4 7M1052 678l11 -1M706 566l10 4M860 405l5 -5M908 307l-9 1M823 529l1 8M1097 460l7 4M1032 641l3 10M871 732l5 -10M855 570l11 2M954 545l-8 7" fill="none" stroke="#000630" stroke-width=".75" opacity=".72"/>
<ellipse cx="1067.5" cy="405" rx="45.5" ry="11.5" fill="#030a78" />
<ellipse cx="1068.5" cy="406.5" rx="24" ry="7" fill="#0c26ec" />
<path d="M1044.5 406.5A24 7 0 0 1 1092.5 406.5A24 3.5 0 0 0 1044.5 406.5Z" fill="#0818c4"/>
<ellipse cx="1262" cy="405" rx="45.5" ry="11.5" fill="#030a78" />
<ellipse cx="1263" cy="406.5" rx="24" ry="7" fill="#0c26ec" />
<path d="M1239 406.5A24 7 0 0 1 1287 406.5A24 3.5 0 0 0 1239 406.5Z" fill="#0818c4"/>
<ellipse cx="1220" cy="477.5" rx="45.5" ry="11.5" fill="#030a78" />
<ellipse cx="1221" cy="479.0" rx="24" ry="6.5" fill="#0c26ec" />
<path d="M1197 479.0A24 6.5 0 0 1 1245 479.0A24 3.25 0 0 0 1197 479.0Z" fill="#0818c4"/>
<ellipse cx="1041" cy="523.5" rx="45.5" ry="11.5" fill="#030a78" />
<ellipse cx="1042" cy="525.0" rx="24" ry="6.5" fill="#0c26ec" />
<path d="M1018 525.0A24 6.5 0 0 1 1066 525.0A24 3.25 0 0 0 1018 525.0Z" fill="#0818c4"/>
<ellipse cx="1012" cy="609" rx="45.5" ry="11.5" fill="#030a78" />
<ellipse cx="1013" cy="610.5" rx="24" ry="6.5" fill="#0c26ec" />
<path d="M989 610.5A24 6.5 0 0 1 1037 610.5A24 3.25 0 0 0 989 610.5Z" fill="#0818c4"/>
<ellipse cx="551" cy="541" rx="44" ry="12.5" fill="#030a78" />
<ellipse cx="552" cy="542.5" rx="21" ry="6" fill="#0c26ec" />
<path d="M531 542.5A21 6 0 0 1 573 542.5A21 3.0 0 0 0 531 542.5Z" fill="#0818c4"/>
<ellipse cx="621.8" cy="611.5" rx="45" ry="11.5" fill="#030a78" />
<ellipse cx="622.8" cy="613.0" rx="21.5" ry="6" fill="#0c26ec" />
<path d="M601.3 613.0A21.5 6 0 0 1 644.3 613.0A21.5 3.0 0 0 0 601.3 613.0Z" fill="#0818c4"/>
<path d="M1024 428L1075 418L1112 412.500L1112 420L1030 440Z" fill="#020668"/>
</g>
<path d="M875 295L882 290L890 287L900 286.2L910 287.5L922 291.5L935 297.5L960 310L977.5 325L995 350L1010 375L1020 392.5L1024 400L1032 397L1048 394.5L1067 393.5L1088 395L1103 399.5L1111 405L1112.5 412.5L1215 411L1216 405L1224 399.5L1240 395L1262 393.5L1284 395L1300 399.5L1307 405L1307.5 467.5L1320 480L1332.5 492.5L1337 500L1336 525L1325 535L1300 545L1275 549L1265 550L1264 555L1250 561L1225 562.5L1200 561L1180 563.75L1150 570L1112.5 580L1088.75 587.5L1090 610L1093.75 635L1097.5 655L1095 665L1075 672.5L1057.5 677.5L1045 688.75L1025 692.5L1000 692.5L975 696L950 707.5L925 717.5L900 725L875 731L871 733.75L850 733.75L825 736L800 736L786 740L780 755L765 760L757.5 770L745 771L727.5 762.5L717.5 742.5L715 720L695 711L670 701L645 696L620 696L590 693.75L577.5 685L576 667.5L562.5 655L550 642.5L545 626L520 623.75L507.5 615L507 542.5L515 534L530 530.5L550 529.5L572 531L585 534L592.5 537L596 527.5L605 512.5L620 497.5L645 482.5L675 467.5L720 456L740 437.5L765 418.75L780 400L793.75 375L810 356L832.5 350L855 349.5L855.5 340L857 328L860 318L864 309L869 301Z" fill="none" stroke="#040c80" stroke-width="1" opacity=".6"/>
</g>
<rect x="1553" y="289" width="15" height="375" fill="url(#cb)"/>
<text x="1536" y="279" font-family="Liberation Serif,serif" font-size="16" fill="#222" textLength="33" lengthAdjust="spacingAndGlyphs">MPa</text>
<text x="1526" y="302" text-anchor="end" font-family="DejaVu Sans,sans-serif" font-size="11" fill="#222">79.1</text>
<text x="1526" y="391" text-anchor="end" font-family="DejaVu Sans,sans-serif" font-size="11" fill="#222">59.3</text>
<text x="1526" y="480.5" text-anchor="end" font-family="DejaVu Sans,sans-serif" font-size="11" fill="#222">39.5</text>
<text x="1526" y="570" text-anchor="end" font-family="DejaVu Sans,sans-serif" font-size="11" fill="#222">19.8</text>
<text x="1526" y="659" text-anchor="end" font-family="DejaVu Sans,sans-serif" font-size="11" fill="#222">0</text>
</svg>
<!-- ===== onshape header ===== -->
<div id="oshead" class="abs"></div>
<div class="abs" id="oslogo" style="left:5px;top:68px;height:28px;line-height:28px;font-size:19px;font-weight:bold;color:#1b5faa;letter-spacing:-0.6px;-webkit-text-stroke:0.6px #1b5faa;transform:scaleX(0.89);transform-origin:0 50%">Onshape</div>
<svg style="left:87px;top:76px;width:14px;height:13px" viewBox="0 0 14 13"><path d="M0 1.500H14M0 6.500H14M0 11.500H14" stroke="#1a1a1a" stroke-width="2.300"/></svg>
<svg style="left:112px;top:75px;width:18px;height:16px" viewBox="0 0 18 16"><circle cx="4" cy="3.500" r="2.600" fill="none" stroke="#1a1a1a" stroke-width="1.300"/><circle cx="3" cy="13" r="1.500" fill="#1a1a1a"/><path d="M3 12V6.200M3.500 12C4 8 8 10 8.500 6.500" fill="none" stroke="#1a1a1a" stroke-width="1.200"/><circle cx="8.500" cy="6.500" r="1.300" fill="#1a1a1a"/><path d="M9 2.500H17.500M11 7.500H17.500M9 12.500H17.500" stroke="#1a1a1a" stroke-width="1.300"/></svg>
<svg style="left:140px;top:75px;width:16px;height:17px" viewBox="0 0 16 17"><path d="M4 0V16" stroke="#1a1a1a" stroke-width="1.200" stroke-dasharray="2 1.500"/><circle cx="4" cy="8" r="2.500" fill="#1a1a1a"/><path d="M12 9V15M9 12H15" stroke="#1a1a1a" stroke-width="1.300"/></svg>
<div class="abs" id="ostitle" style="left:172px;top:68px;height:30px;line-height:30px;font-size:18.9px;font-weight:bold;color:#1c1c1c;white-space:nowrap">Water Pump - Copy</div>
<div class="abs" id="osmain" style="left:355px;top:71px;height:30px;line-height:30px;font-size:13.5px;color:#999">Main</div>
<svg style="left:418px;top:74px;width:17px;height:17px" viewBox="0 0 17 17"><circle cx="8.500" cy="8.500" r="7.500" fill="#fff" stroke="#222" stroke-width="1.300"/><path d="M3 4.500c2-.5 3 0 4.500 1.500 1 1-1 2-1.500 3s1 2 .5 4c-1.500-1-2-2.500-2.500-4S2 7 3 4.500zM9 2.500c1.500-.5 3.500.5 4.500 1.500-1 .5-1.500 1.500-2.500 1S9.500 3.500 9 2.500zM11 8c1.500-.5 3 .5 3.500 1.500-.5 1.500-1.500 3-3 3.500 0-1.500-1.500-3-.5-5z" fill="#222"/></svg>
<svg style="left:454px;top:74px;width:18px;height:17px" viewBox="0 0 18 17"><path d="M1 8.500H5.500C7 7 8 4.500 8.500 1.500c2-.3 2.500 2 1.500 5H15.500c1.500 0 1.500 2 .3 2.300 1 .5.800 2-.3 2.200.8.600.500 1.900-.5 2 .5.800 0 1.800-1 1.800H8c-1 0-1.500-.8-2.500-.8H1z" fill="none" stroke="#222" stroke-width="1.200" stroke-linejoin="round"/></svg>
<div class="cnt" style="left:478px">0</div>
<svg style="left:500px;top:76px;width:12px;height:13px" viewBox="0 0 12 13"><path d="M5 8L8 4.500" stroke="#222" stroke-width="1.300"/><rect x="5.800" y="0.800" width="4.200" height="6.500" rx="2.100" transform="rotate(40 8 4)" fill="none" stroke="#222" stroke-width="1.300"/><rect x="2" y="5.800" width="4.200" height="6.500" rx="2.100" transform="rotate(40 4 9)" fill="none" stroke="#222" stroke-width="1.300"/></svg>
<div class="cnt" style="left:520px">0</div>
<svg style="left:541px;top:74px;width:15px;height:17px" viewBox="0 0 15 17"><path d="M4 2.500H1V15H5" fill="none" stroke="#222" stroke-width="1.200"/><path d="M4 1H9V3.500H4z" fill="none" stroke="#222" stroke-width="1.100"/><path d="M9 2.500H11V5" fill="none" stroke="#222" stroke-width="1.200"/><path d="M5.500 5.500H11L14 8.500V16H5.500z" fill="#fff" stroke="#222" stroke-width="1.200"/><path d="M11 5.500V8.500H14" fill="none" stroke="#222" stroke-width="1"/></svg>
<div class="cnt" style="left:563px">0</div>
<svg style="left:1120px;top:75px;width:18px;height:16px" viewBox="0 0 18 16"><ellipse cx="9" cy="6.500" rx="8.500" ry="6" fill="#6f777e"/><path d="M3 10L1.500 15.500L8 12z" fill="#6f777e"/></svg>
<svg style="left:1150px;top:74px;width:15px;height:17px" viewBox="0 0 15 17"><path d="M7.500 0.500c.8 0 1.300.600 1.300 1.400C11.500 2.800 12.500 5 12.500 8c0 2.500 1 3.500 2.200 4.800V14H.3v-1.200C1.500 11.500 2.500 10.500 2.500 8c0-3 1-5.200 3.700-6.100C6.200 1.100 6.700.5 7.500.5z" fill="#6f777e"/><path d="M5.500 15h4a2 2 0 0 1-4 0z" fill="#6f777e"/></svg>
<div class="btn" style="left:1176px;width:77px">App Store</div>
<div class="btn" style="left:1260px;width:112px">Learning Center</div>
<div class="btn" style="left:1379px;width:55px;background:#1b5faa;border-color:#1b5faa;color:#fff;-webkit-text-stroke:0.4px #fff;font-size:12.4px">Share</div>
<div class="abs" style="left:1444px;top:75px;width:16px;height:16px;border-radius:50%;background:#5a6268;color:#fff;font-weight:bold;font-size:13px;line-height:16px;text-align:center">?</div>
<svg style="left:1464px;top:81px;width:7px;height:4px" viewBox="0 0 7 4"><path d="M0 0H7L3.500 4z" fill="#222"/></svg>
<div class="abs" style="left:1481px;top:73px;width:20px;height:20px;background:#d9d5d0;overflow:hidden"><div class="abs" style="left:6px;top:3px;width:8px;height:10px;border-radius:50%;background:#c99a7a"></div><div class="abs" style="left:5px;top:1px;width:10px;height:5px;border-radius:50% 50% 0 0;background:#5b3d2a"></div><div class="abs" style="left:2px;top:13px;width:16px;height:10px;border-radius:40% 40% 0 0;background:#e8e6e3"></div></div>
<div class="cnt" id="jt" style="left:1505px;white-space:nowrap">Jeremy Theler</div>
<svg style="left:1589px;top:81px;width:7px;height:4px" viewBox="0 0 7 4"><path d="M0 0H7L3.500 4z" fill="#222"/></svg>
<!-- ===== viewport overlay ===== -->
<div class="abs" style="left:415px;top:104px;width:23px;height:26px;border:1px solid #5bc0de;border-radius:3px;background:#fff"></div>
<svg style="left:420px;top:110px;width:14px;height:13px" viewBox="0 0 14 13"><path d="M9 2.500H2.200a1 1 0 0 0-1 1V11a1 1 0 0 0 1 1H9.800a1 1 0 0 0 1-1V7.500" fill="none" stroke="#17a2b8" stroke-width="1.700"/><path d="M5.200 8.800L5.700 6.400L11.300 0.800L13.200 2.700L7.600 8.300z" fill="#17a2b8"/></svg>
<div id="bc" class="abs"></div>
<svg style="left:553px;top:110px;width:13px;height:13px" viewBox="0 0 13 13"><circle cx="6.500" cy="6.500" r="6.300" fill="#3b809b"/><path d="M2 3.500c1.500-.5 2.500 0 3.500 1 .8.800-.8 1.500-1.200 2.300s.8 1.600.4 3.200C3.500 9.200 3.100 8 2.700 6.800S1.200 5.500 2 3.500zM7 1.800c1.200-.4 2.800.4 3.600 1.200-.8.400-1.200 1.200-2 .8S7.400 2.600 7 1.800zM8.500 6.200c1.200-.4 2.400.4 2.800 1.200-.4 1.200-1.200 2.400-2.400 2.800 0-1.200-1.200-2.400-.4-4z" fill="#e9ecef"/></svg>
<div class="bcs" style="left:577px">»</div>
<svg style="left:596px;top:111px;width:12px;height:11px" viewBox="0 0 12 11"><path d="M11.500 1.500a3 3 0 0 1-4 3.600L3.200 9.800a1.400 1.400 0 0 1-2.100-2L6 3.500A3 3 0 0 1 9.500 0L7.800 1.900l.4 1.600 1.600.4z" fill="#3b809b"/></svg>
<div class="bct" style="left:613px">Pump - resin</div>
<svg style="left:688px;top:115px;width:8px;height:4px" viewBox="0 0 8 4"><path d="M0 0H8L4 4z" fill="#3b809b"/></svg>
<div class="bcs" style="left:704px">»</div>
<div class="bdg" style="left:721px">1</div><div class="bct" style="left:740px">Problem</div>
<div class="bcs" style="left:794px">»</div>
<div class="bdg" style="left:810px">2</div><div class="bct" style="left:829px">Mesh</div>
<div class="bcs" style="left:866px">»</div>
<div class="bdg" style="left:884px;background:#17a9d6">3</div><div class="bct" style="left:903px;color:#17a2d0">Results</div>
<div class="abs" style="left:1538px;top:104px;width:25px;height:25px;background:#1bb394;border-radius:3px 0 0 3px"></div>
<svg style="left:1544px;top:111px;width:13px;height:11px" viewBox="0 0 13 11"><path d="M1.200 2.200H3.600L4.600 0.700H8.400L9.400 2.200H11.800a.8.800 0 0 1 .8.800V10a.8.800 0 0 1-.8.800H1.200A.8.800 0 0 1 .4 10V3a.8.800 0 0 1 .8-.8z" fill="#fff"/><circle cx="6.500" cy="6.200" r="2.300" fill="#1bb394"/><circle cx="6.500" cy="6.200" r="1.500" fill="#fff"/></svg>
<div class="abs" style="left:1563px;top:104px;width:23px;height:25px;border:1px solid #5bc0de;border-left:none;border-radius:0 3px 3px 0;background:#fff"></div>
<svg style="left:1568px;top:111px;width:12px;height:11px" viewBox="0 0 12 11"><path d="M0 2H12M0 5.500H12M0 9H12" stroke="#1e9ad6" stroke-width="1.300"/><path d="M6.500 0.500H8.500V3.500H6.500zM8 4H10V7H8zM2.500 7.500H4.500V10.500H2.500z" fill="#1e9ad6"/></svg>
<div class="abs" style="left:1528px;top:780px;width:54px;height:54px;border-radius:50%;background:#1a6f8f;box-shadow:0 1px 5px rgba(0,0,0,.3)"></div>
<svg style="left:1540px;top:791px;width:30px;height:32px" viewBox="0 0 30 32"><path d="M15.500 1.500a12.500 12.500 0 1 1-6.500 23.200L3 28.500L4.800 21A12.500 12.500 0 0 1 15.500 1.500z" fill="#fff"/><path d="M12.500 17.500Q17 21 22 16.800Q17.500 23.500 12.500 17.500z" fill="#1a6f8f"/></svg>
<!-- ===== left panel ===== -->
<div id="left" class="abs"></div>
<div id="pbody" class="abs"></div>
<div class="phead" style="top:104px;height:35px;line-height:37px;border-radius:3px 3px 0 0">Displacements &amp; Stresses</div>
<svg style="left:19px;top:113px;width:16px;height:16px" viewBox="0 0 16 16"><path d="M1 13.500L8 6.500L10 8.500L3 15.500z" fill="#fff"/><path d="M6.500 3.500C8.500 1 11 1 13 2.500L15.500 5.500L12.500 8.500L11 7L9.500 8L7 5.500z" fill="#fff"/></svg>
<div class="row" style="top:189px;height:41px;background:#eef0f1;border-top:1px solid #e3e6e8"></div>
<div class="row" style="top:230px;height:40px;background:#fff;border-top:1px solid #e3e6e8"></div>
<div class="row" style="top:270px;height:39px;background:#eef0f1;border-top:1px solid #e3e6e8"></div>
<div class="abs" style="left:12px;top:161px;width:217px;height:7px;border-radius:4px;background:#dee2e6"></div>
<div class="abs" style="left:221px;top:157px;width:15px;height:15px;border-radius:50%;background:#3b809b"></div>
<div class="abs" style="left:238px;top:148px;width:53px;height:32px;border:1px solid #dcdfe3;border-radius:3px;background:#fff;color:#999;font-size:12.5px;line-height:31px;padding-left:11px">600</div>
<div class="gbtn" style="left:294px;top:148px;width:77px;height:32px;line-height:31px">Real warp</div>
<div class="q" style="top:157px">?</div>
<div class="lt" id="l1" style="left:45px;top:199px">Max. displ.</div>
<div class="abs" style="left:108px;top:202px;width:1px;height:16px;background:#333"></div><div class="abs" style="left:124px;top:202px;width:1px;height:16px;background:#333"></div>
<div class="lt math" style="left:112px;top:198px;font-size:15.5px;font-weight:bold;color:#222">u</div>
<div class="lt math" style="left:126.5px;top:205px;font-size:11.5px;color:#333">max</div>
<div class="lt math" style="left:152px;top:200px;font-size:17px;color:#555;transform:scaleX(1.25);transform-origin:0 50%">=</div>
<div class="lt" style="left:150px;width:74px;text-align:right;top:199px;font-size:12px">0.07303</div>
<div class="lt" style="left:233px;top:199px;font-size:12px">mm</div>
<div class="tog" style="top:193px">Toggle ball</div>
<div class="q" style="top:202px">?</div>
<div class="lt" id="l2" style="left:28px;top:239px">Max. Von Mises</div>
<div class="lt math" style="left:117px;top:239px;font-size:17px;font-style:italic;color:#222">σ</div>
<div class="lt math" style="left:126.5px;top:245px;font-size:11.5px;color:#333">max</div>
<div class="lt math" style="left:152px;top:240px;font-size:17px;color:#555;transform:scaleX(1.25);transform-origin:0 50%">=</div>
<div class="lt" style="left:150px;width:74px;text-align:right;top:239px;font-size:12px">79</div>
<div class="lt" style="left:233px;top:239px;font-size:12px">MPa</div>
<div class="tog" style="top:234px">Toggle ball</div>
<div class="q" style="top:243px">?</div>
<div class="gbtn" style="left:137px;top:274px;width:126px;height:32px;line-height:31px;padding-left:22px">Download VTK</div>
<svg style="left:148px;top:284px;width:17px;height:12px" viewBox="0 0 17 12"><path d="M4 12a3.500 3.500 0 0 1-.5-7A5 5 0 0 1 13 4a4 4 0 0 1 .5 8z" fill="#fff"/><path d="M8.500 10.500L5.500 7.500H7.500V5H9.500V7.500H11.500z" fill="#6c6c6c"/></svg>
<div class="phead" style="top:318px;height:36px;line-height:36px">Layers &amp; Legend</div>
<svg style="left:19px;top:328px;width:16px;height:13px" viewBox="0 0 16 13"><path d="M1 3V12H13" fill="none" stroke="#fff" stroke-width="1.600"/><rect x="3.500" y="0.500" width="12" height="9" rx="1" fill="#fff"/><path d="M5 8L8 5L10 7L12 4.500L14.500 8z" fill="#3b809b"/><circle cx="6.500" cy="3.300" r="1" fill="#3b809b"/></svg>
<!-- ===== bottom bar ===== -->
<div id="bottom" class="abs"></div>
<div class="btab" style="left:68px;width:178px;padding-left:29.5px;font-size:12.6px">water pump</div>
<div class="btab" style="left:249px;width:177px;padding-left:29.5px;background:#fff;color:#222;border-bottom:2px solid #2c68b2;border-radius:0 0 3px 3px;font-size:11.9px">CAEplex (2)</div>
<div class="btab" style="left:429px;width:178px;padding-left:30px;font-size:11.9px">CAEplex (1)</div>
<svg style="left:6px;top:857px;width:17px;height:14px" viewBox="0 0 17 14"><path d="M0 1H16M10 5H16M10 8.500H14" stroke="#555" stroke-width="1.300"/><circle cx="4.500" cy="7.500" r="3.300" fill="none" stroke="#555" stroke-width="1.300"/><path d="M7 10L9.500 13" stroke="#555" stroke-width="1.500"/></svg>
<svg style="left:40px;top:857px;width:14px;height:14px" viewBox="0 0 14 14"><path d="M7 0.500V13.500M0.500 7H13.500" stroke="#444" stroke-width="2"/></svg>
<svg style="left:77px;top:856px;width:18px;height:18px" viewBox="0 0 18 18"><path d="M1 5.500L4 3.500H8V15L5 17H1z" fill="#fff" stroke="#333" stroke-width="1.200" stroke-linejoin="round"/><path d="M9.500 3L11.500 1H15.500L17 3V15L15 17H9.500z" fill="#fff" stroke="#333" stroke-width="1.200" stroke-linejoin="round"/></svg>
<svg style="left:256px;top:854.500px;width:20px;height:20px" viewBox="0 0 20 20"><path d="M4.500 12a3.300 3.300 0 0 1-.5-6.500A5 5 0 0 1 13.500 4.500a3.800 3.800 0 0 1 1.500 7.500z" fill="#111"/><text x="0.500" y="18.500" font-family="Liberation Sans,sans-serif" font-weight="bold" font-size="6.500" fill="#111" textLength="19" lengthAdjust="spacingAndGlyphs">CAEPLEX</text></svg>
<svg style="left:437px;top:854.500px;width:20px;height:20px" viewBox="0 0 20 20"><path d="M4.500 12a3.300 3.300 0 0 1-.5-6.500A5 5 0 0 1 13.500 4.500a3.800 3.800 0 0 1 1.500 7.500z" fill="#111"/><text x="0.500" y="18.500" font-family="Liberation Sans,sans-serif" font-weight="bold" font-size="6.500" fill="#111" textLength="19" lengthAdjust="spacingAndGlyphs">CAEPLEX</text></svg>
</body></html>
